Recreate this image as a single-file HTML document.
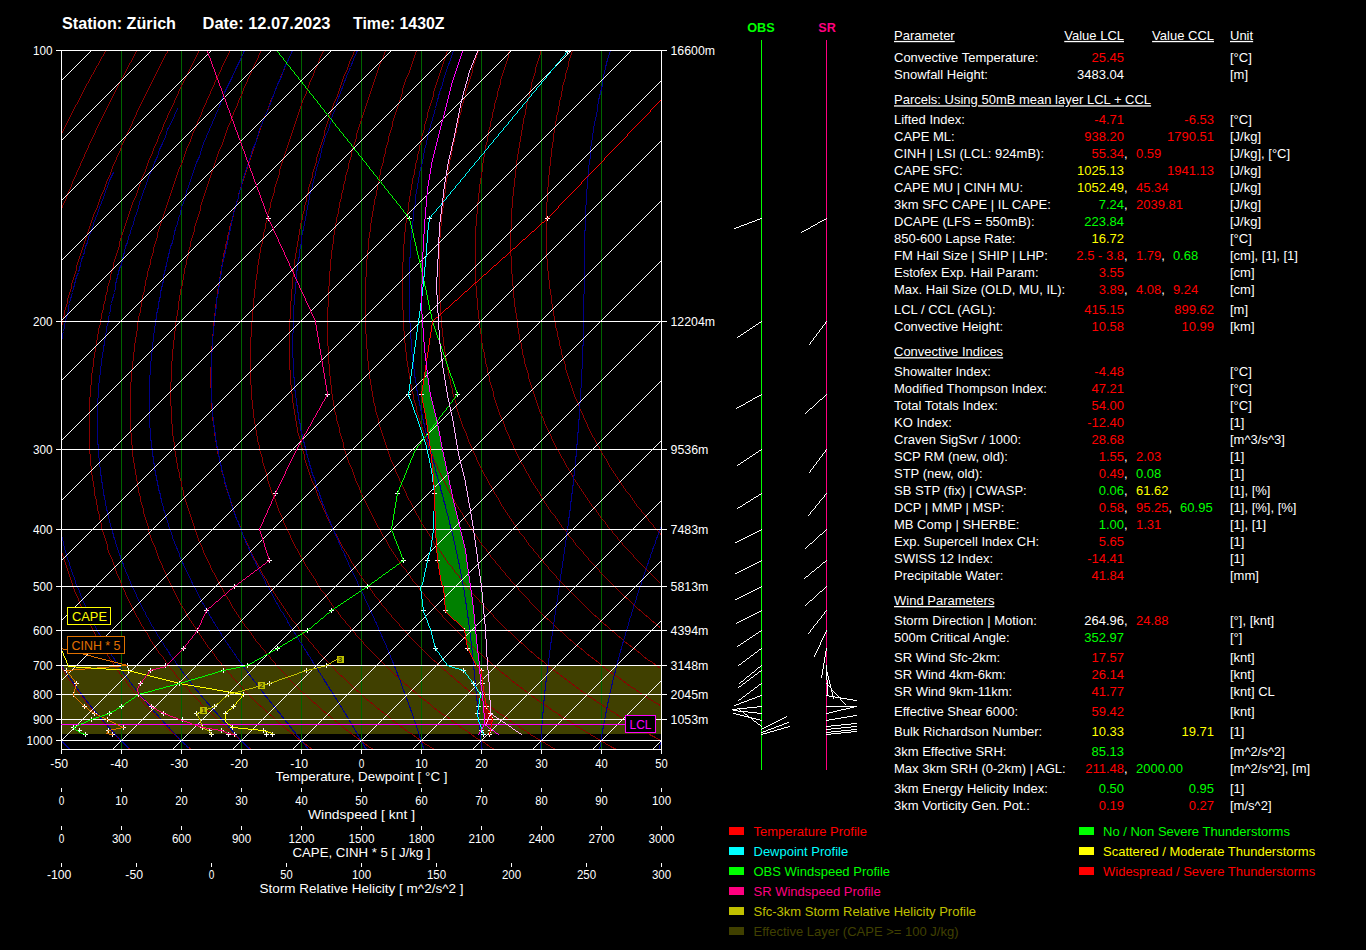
<!DOCTYPE html><html><head><meta charset="utf-8"><title>Sounding</title><style>html,body{margin:0;padding:0;background:#000;overflow:hidden}svg{display:block}text{font-family:"Liberation Sans",sans-serif}</style></head><body><svg width="1366" height="950" viewBox="0 0 1366 950" shape-rendering="crispEdges">
<rect width="1366" height="950" fill="#000"/>
<clipPath id="cf"><rect x="61" y="50" width="601" height="700"/></clipPath>
<g clip-path="url(#cf)">
<rect x="62" y="666" width="599" height="68" fill="#404000"/>
<polygon points="424.8,370.5 421.6,394.7 426.1,421.6 430.2,449.3 433.3,477.0 434.7,493.4 435.3,529.2 436.3,546.7 437.4,560.6 441.5,584.6 443.0,586.5 445.2,611.1 464.6,629.9 467.1,648.5 476.0,665.5 476.5,666.0 479.3,666.0 479.3,665.5 477.8,648.5 475.9,629.9 473.7,608.9 470.8,586.5 467.3,565.0 465.0,550.8 460.9,529.2 453.8,501.6 448.6,477.0 443.5,454.4 437.4,423.7 430.2,395.0 427.1,374.6 426.6,370.5" fill="#008000"/>
<polygon points="484.0,703.0 487.0,709.0 491.0,715.0 492.0,720.0 491.0,724.5 484.5,724.5 483.5,711.0" fill="#a00000"/>
<line x1="121.5" y1="50" x2="121.5" y2="749" stroke="#006400" stroke-width="1" />
<line x1="181.5" y1="50" x2="181.5" y2="749" stroke="#006400" stroke-width="1" />
<line x1="241.5" y1="50" x2="241.5" y2="749" stroke="#006400" stroke-width="1" />
<line x1="301.5" y1="50" x2="301.5" y2="749" stroke="#006400" stroke-width="1" />
<line x1="361.5" y1="50" x2="361.5" y2="749" stroke="#006400" stroke-width="1" />
<line x1="421.5" y1="50" x2="421.5" y2="749" stroke="#006400" stroke-width="1" />
<line x1="481.5" y1="50" x2="481.5" y2="749" stroke="#006400" stroke-width="1" />
<line x1="541.5" y1="50" x2="541.5" y2="749" stroke="#006400" stroke-width="1" />
<line x1="601.5" y1="50" x2="601.5" y2="749" stroke="#006400" stroke-width="1" />
<polyline points="105.5,50.5 104.5,53.5 102.5,56.5 100.5,59.5 99.5,62.5 97.5,65.5 95.5,68.5 94.5,71.5 92.5,74.5 90.5,77.5 89.5,80.5 87.5,83.5 85.5,86.5 84.5,89.5 82.5,92.5 81.5,95.5 79.5,98.5 78.5,101.5 76.5,104.5 74.5,107.5 73.5,110.5 71.5,113.5 70.5,116.5 68.5,119.5 67.5,122.5 65.5,125.5 64.5,128.5 62.5,131.5 61.5,134.5" fill="none" stroke="#8b0000" stroke-width="1" />
<polyline points="61.5,740.5 63.5,743.5 66.5,746.5 69.5,749.5" fill="none" stroke="#8b0000" stroke-width="1" />
<polyline points="136.5,50.5 135.5,53.5 133.5,56.5 132.5,59.5 130.5,62.5 128.5,65.5 127.5,68.5 125.5,71.5 124.5,74.5 122.5,77.5 120.5,80.5 119.5,83.5 117.5,86.5 116.5,89.5 114.5,92.5 113.5,95.5 111.5,98.5 110.5,101.5 108.5,104.5 107.5,107.5 105.5,110.5 104.5,113.5 102.5,116.5 101.5,119.5 99.5,122.5 98.5,125.5 96.5,128.5 95.5,131.5 94.5,134.5 92.5,137.5 91.5,140.5 89.5,143.5 88.5,146.5 87.5,149.5 85.5,152.5 84.5,155.5 83.5,158.5 81.5,161.5 80.5,164.5 79.5,167.5 77.5,170.5 76.5,173.5 75.5,176.5 73.5,179.5 72.5,182.5 71.5,185.5 70.5,188.5 68.5,191.5 67.5,194.5 66.5,197.5 65.5,200.5 63.5,203.5 62.5,206.5 61.5,209.5 61.5,210.5" fill="none" stroke="#8b0000" stroke-width="1" />
<polyline points="61.5,666.5 62.5,668.5 64.5,671.5 65.5,674.5 67.5,677.5 69.5,680.5 72.5,683.5 74.5,686.5 76.5,689.5 78.5,692.5 80.5,695.5 83.5,698.5 85.5,701.5 87.5,704.5 90.5,707.5 92.5,710.5 95.5,713.5 98.5,716.5 100.5,719.5 103.5,722.5 106.5,725.5 109.5,728.5 111.5,731.5 114.5,734.5 117.5,737.5 120.5,740.5 123.5,743.5 126.5,746.5 130.5,749.5" fill="none" stroke="#8b0000" stroke-width="1" />
<polyline points="168.5,50.5 166.5,53.5 164.5,56.5 163.5,59.5 161.5,62.5 160.5,65.5 158.5,68.5 157.5,71.5 155.5,74.5 154.5,77.5 152.5,80.5 151.5,83.5 149.5,86.5 148.5,89.5 146.5,92.5 145.5,95.5 143.5,98.5 142.5,101.5 140.5,104.5 139.5,107.5 137.5,110.5 136.5,113.5 135.5,116.5 133.5,119.5 132.5,122.5 131.5,125.5 129.5,128.5 128.5,131.5 126.5,134.5 125.5,137.5 124.5,140.5 122.5,143.5 121.5,146.5 120.5,149.5 119.5,152.5 117.5,155.5 116.5,158.5 115.5,161.5 113.5,164.5 112.5,167.5 111.5,170.5 110.5,173.5 109.5,176.5 107.5,179.5 106.5,182.5 105.5,185.5 104.5,188.5 103.5,191.5 101.5,194.5 100.5,197.5 99.5,200.5 98.5,203.5 97.5,206.5 96.5,209.5 94.5,212.5 93.5,215.5 92.5,218.5 91.5,221.5 90.5,224.5 89.5,227.5 88.5,230.5 87.5,233.5 86.5,236.5 85.5,239.5 84.5,242.5 83.5,245.5 82.5,248.5 81.5,251.5 80.5,254.5 79.5,257.5 78.5,260.5 77.5,263.5 76.5,266.5 76.5,269.5 75.5,272.5 74.5,275.5 73.5,278.5 72.5,281.5 71.5,284.5 71.5,287.5 70.5,290.5 69.5,293.5 68.5,296.5 67.5,299.5 67.5,302.5 66.5,305.5 65.5,308.5 64.5,311.5 64.5,314.5 63.5,317.5 62.5,320.5 62.5,323.5 61.5,326.5 61.5,327.5" fill="none" stroke="#8b0000" stroke-width="1" />
<polyline points="61.5,548.5 61.5,551.5 62.5,554.5 63.5,557.5 64.5,560.5 65.5,563.5 66.5,566.5 67.5,569.5 68.5,572.5 69.5,575.5 70.5,578.5 71.5,581.5 72.5,584.5 73.5,587.5 74.5,590.5 75.5,593.5 77.5,596.5 78.5,599.5 79.5,602.5 80.5,605.5 82.5,608.5 83.5,611.5 85.5,614.5 86.5,617.5 88.5,620.5 89.5,623.5 91.5,626.5 92.5,629.5 94.5,632.5 95.5,635.5 97.5,638.5 99.5,641.5 101.5,644.5 102.5,647.5 104.5,650.5 106.5,653.5 108.5,656.5 110.5,659.5 112.5,662.5 114.5,665.5 116.5,668.5 118.5,671.5 120.5,674.5 122.5,677.5 125.5,680.5 127.5,683.5 129.5,686.5 132.5,689.5 134.5,692.5 137.5,695.5 139.5,698.5 142.5,701.5 144.5,704.5 147.5,707.5 150.5,710.5 153.5,713.5 156.5,716.5 159.5,719.5 161.5,722.5 164.5,725.5 167.5,728.5 171.5,731.5 174.5,734.5 177.5,737.5 180.5,740.5 184.5,743.5 187.5,746.5 191.5,749.5" fill="none" stroke="#8b0000" stroke-width="1" />
<polyline points="199.5,50.5 197.5,53.5 196.5,56.5 194.5,59.5 193.5,62.5 191.5,65.5 190.5,68.5 188.5,71.5 187.5,74.5 185.5,77.5 184.5,80.5 182.5,83.5 181.5,86.5 179.5,89.5 178.5,92.5 177.5,95.5 175.5,98.5 174.5,101.5 173.5,104.5 171.5,107.5 170.5,110.5 168.5,113.5 167.5,116.5 166.5,119.5 164.5,122.5 163.5,125.5 162.5,128.5 161.5,131.5 159.5,134.5 158.5,137.5 157.5,140.5 156.5,143.5 154.5,146.5 153.5,149.5 152.5,152.5 151.5,155.5 149.5,158.5 148.5,161.5 147.5,164.5 146.5,167.5 145.5,170.5 144.5,173.5 142.5,176.5 141.5,179.5 140.5,182.5 139.5,185.5 138.5,188.5 137.5,191.5 136.5,194.5 135.5,197.5 133.5,200.5 132.5,203.5 131.5,206.5 130.5,209.5 129.5,212.5 128.5,215.5 127.5,218.5 126.5,221.5 125.5,224.5 124.5,227.5 123.5,230.5 122.5,233.5 121.5,236.5 120.5,239.5 119.5,242.5 119.5,245.5 118.5,248.5 117.5,251.5 116.5,254.5 115.5,257.5 114.5,260.5 113.5,263.5 113.5,266.5 112.5,269.5 111.5,272.5 110.5,275.5 110.5,278.5 109.5,281.5 108.5,284.5 107.5,287.5 107.5,290.5 106.5,293.5 105.5,296.5 105.5,299.5 104.5,302.5 103.5,305.5 103.5,308.5 102.5,311.5 101.5,314.5 101.5,317.5 100.5,320.5 100.5,323.5 99.5,326.5 98.5,329.5 98.5,332.5 97.5,335.5 97.5,338.5 96.5,341.5 96.5,344.5 95.5,347.5 95.5,350.5 94.5,353.5 94.5,356.5 93.5,359.5 93.5,362.5 93.5,365.5 92.5,368.5 92.5,371.5 91.5,374.5 91.5,377.5 91.5,380.5 91.5,383.5 90.5,386.5 90.5,389.5 90.5,392.5 90.5,395.5 89.5,398.5 89.5,401.5 89.5,404.5 89.5,407.5 89.5,410.5 89.5,413.5 89.5,416.5 89.5,419.5 89.5,422.5 89.5,425.5 89.5,428.5 89.5,431.5 89.5,434.5 89.5,437.5 89.5,440.5 89.5,443.5 89.5,446.5 89.5,449.5 89.5,452.5 90.5,455.5 90.5,458.5 90.5,461.5 90.5,464.5 91.5,467.5 91.5,470.5 91.5,473.5 92.5,476.5 92.5,479.5 93.5,482.5 93.5,485.5 94.5,488.5 94.5,491.5 94.5,494.5 95.5,497.5 96.5,500.5 96.5,503.5 97.5,506.5 97.5,509.5 98.5,512.5 99.5,515.5 99.5,518.5 100.5,521.5 101.5,524.5 101.5,527.5 102.5,530.5 103.5,533.5 104.5,536.5 105.5,539.5 106.5,542.5 107.5,545.5 107.5,548.5 108.5,551.5 109.5,554.5 111.5,557.5 112.5,560.5 113.5,563.5 114.5,566.5 115.5,569.5 116.5,572.5 117.5,575.5 119.5,578.5 120.5,581.5 121.5,584.5 122.5,587.5 124.5,590.5 125.5,593.5 126.5,596.5 128.5,599.5 129.5,602.5 131.5,605.5 132.5,608.5 134.5,611.5 135.5,614.5 137.5,617.5 139.5,620.5 140.5,623.5 142.5,626.5 144.5,629.5 146.5,632.5 148.5,635.5 149.5,638.5 151.5,641.5 153.5,644.5 155.5,647.5 157.5,650.5 159.5,653.5 162.5,656.5 164.5,659.5 166.5,662.5 168.5,665.5 170.5,668.5 173.5,671.5 175.5,674.5 177.5,677.5 180.5,680.5 182.5,683.5 185.5,686.5 188.5,689.5 190.5,692.5 193.5,695.5 196.5,698.5 199.5,701.5 201.5,704.5 204.5,707.5 207.5,710.5 211.5,713.5 214.5,716.5 217.5,719.5 220.5,722.5 223.5,725.5 226.5,728.5 230.5,731.5 233.5,734.5 237.5,737.5 240.5,740.5 244.5,743.5 247.5,746.5 251.5,749.5" fill="none" stroke="#8b0000" stroke-width="1" />
<polyline points="230.5,50.5 228.5,53.5 227.5,56.5 225.5,59.5 224.5,62.5 222.5,65.5 221.5,68.5 220.5,71.5 218.5,74.5 217.5,77.5 215.5,80.5 214.5,83.5 213.5,86.5 211.5,89.5 210.5,92.5 209.5,95.5 207.5,98.5 206.5,101.5 205.5,104.5 203.5,107.5 202.5,110.5 201.5,113.5 200.5,116.5 198.5,119.5 197.5,122.5 196.5,125.5 195.5,128.5 193.5,131.5 192.5,134.5 191.5,137.5 190.5,140.5 189.5,143.5 187.5,146.5 186.5,149.5 185.5,152.5 184.5,155.5 183.5,158.5 182.5,161.5 181.5,164.5 179.5,167.5 178.5,170.5 177.5,173.5 176.5,176.5 175.5,179.5 174.5,182.5 173.5,185.5 172.5,188.5 171.5,191.5 170.5,194.5 169.5,197.5 168.5,200.5 167.5,203.5 166.5,206.5 165.5,209.5 164.5,212.5 163.5,215.5 162.5,218.5 161.5,221.5 160.5,224.5 159.5,227.5 158.5,230.5 157.5,233.5 157.5,236.5 156.5,239.5 155.5,242.5 154.5,245.5 153.5,248.5 153.5,251.5 152.5,254.5 151.5,257.5 150.5,260.5 150.5,263.5 149.5,266.5 148.5,269.5 147.5,272.5 147.5,275.5 146.5,278.5 145.5,281.5 145.5,284.5 144.5,287.5 144.5,290.5 143.5,293.5 142.5,296.5 142.5,299.5 141.5,302.5 141.5,305.5 140.5,308.5 140.5,311.5 139.5,314.5 138.5,317.5 138.5,320.5 137.5,323.5 137.5,326.5 137.5,329.5 136.5,332.5 136.5,335.5 135.5,338.5 135.5,341.5 134.5,344.5 134.5,347.5 134.5,350.5 133.5,353.5 133.5,356.5 133.5,359.5 132.5,362.5 132.5,365.5 132.5,368.5 131.5,371.5 131.5,374.5 131.5,377.5 131.5,380.5 130.5,383.5 130.5,386.5 130.5,389.5 130.5,392.5 130.5,395.5 130.5,398.5 130.5,401.5 130.5,404.5 130.5,407.5 130.5,410.5 130.5,413.5 130.5,416.5 130.5,419.5 130.5,422.5 130.5,425.5 130.5,428.5 130.5,431.5 131.5,434.5 131.5,437.5 131.5,440.5 131.5,443.5 132.5,446.5 132.5,449.5 132.5,452.5 132.5,455.5 133.5,458.5 133.5,461.5 134.5,464.5 134.5,467.5 135.5,470.5 135.5,473.5 136.5,476.5 136.5,479.5 137.5,482.5 137.5,485.5 138.5,488.5 138.5,491.5 139.5,494.5 140.5,497.5 140.5,500.5 141.5,503.5 142.5,506.5 143.5,509.5 143.5,512.5 144.5,515.5 145.5,518.5 146.5,521.5 147.5,524.5 148.5,527.5 148.5,530.5 149.5,533.5 150.5,536.5 151.5,539.5 152.5,542.5 154.5,545.5 155.5,548.5 156.5,551.5 157.5,554.5 158.5,557.5 159.5,560.5 161.5,563.5 162.5,566.5 163.5,569.5 165.5,572.5 166.5,575.5 167.5,578.5 169.5,581.5 170.5,584.5 172.5,587.5 173.5,590.5 175.5,593.5 176.5,596.5 178.5,599.5 179.5,602.5 181.5,605.5 183.5,608.5 185.5,611.5 186.5,614.5 188.5,617.5 190.5,620.5 192.5,623.5 194.5,626.5 196.5,629.5 198.5,632.5 200.5,635.5 202.5,638.5 204.5,641.5 206.5,644.5 208.5,647.5 211.5,650.5 213.5,653.5 215.5,656.5 217.5,659.5 220.5,662.5 222.5,665.5 225.5,668.5 227.5,671.5 230.5,674.5 232.5,677.5 235.5,680.5 238.5,683.5 241.5,686.5 243.5,689.5 246.5,692.5 249.5,695.5 252.5,698.5 255.5,701.5 258.5,704.5 262.5,707.5 265.5,710.5 268.5,713.5 272.5,716.5 275.5,719.5 278.5,722.5 282.5,725.5 285.5,728.5 289.5,731.5 293.5,734.5 296.5,737.5 300.5,740.5 304.5,743.5 308.5,746.5 312.5,749.5" fill="none" stroke="#8b0000" stroke-width="1" />
<polyline points="261.5,50.5 259.5,53.5 258.5,56.5 257.5,59.5 255.5,62.5 254.5,65.5 252.5,68.5 251.5,71.5 250.5,74.5 248.5,77.5 247.5,80.5 246.5,83.5 244.5,86.5 243.5,89.5 242.5,92.5 241.5,95.5 239.5,98.5 238.5,101.5 237.5,104.5 236.5,107.5 234.5,110.5 233.5,113.5 232.5,116.5 231.5,119.5 230.5,122.5 228.5,125.5 227.5,128.5 226.5,131.5 225.5,134.5 224.5,137.5 223.5,140.5 222.5,143.5 221.5,146.5 219.5,149.5 218.5,152.5 217.5,155.5 216.5,158.5 215.5,161.5 214.5,164.5 213.5,167.5 212.5,170.5 211.5,173.5 210.5,176.5 209.5,179.5 208.5,182.5 207.5,185.5 206.5,188.5 205.5,191.5 204.5,194.5 203.5,197.5 202.5,200.5 201.5,203.5 200.5,206.5 200.5,209.5 199.5,212.5 198.5,215.5 197.5,218.5 196.5,221.5 195.5,224.5 194.5,227.5 194.5,230.5 193.5,233.5 192.5,236.5 191.5,239.5 190.5,242.5 190.5,245.5 189.5,248.5 188.5,251.5 188.5,254.5 187.5,257.5 186.5,260.5 186.5,263.5 185.5,266.5 184.5,269.5 184.5,272.5 183.5,275.5 183.5,278.5 182.5,281.5 182.5,284.5 181.5,287.5 180.5,290.5 180.5,293.5 179.5,296.5 179.5,299.5 178.5,302.5 178.5,305.5 178.5,308.5 177.5,311.5 177.5,314.5 176.5,317.5 176.5,320.5 175.5,323.5 175.5,326.5 175.5,329.5 174.5,332.5 174.5,335.5 174.5,338.5 173.5,341.5 173.5,344.5 173.5,347.5 172.5,350.5 172.5,353.5 172.5,356.5 172.5,359.5 171.5,362.5 171.5,365.5 171.5,368.5 171.5,371.5 171.5,374.5 171.5,377.5 171.5,380.5 170.5,383.5 170.5,386.5 170.5,389.5 170.5,392.5 170.5,395.5 170.5,398.5 170.5,401.5 170.5,404.5 171.5,407.5 171.5,410.5 171.5,413.5 171.5,416.5 171.5,419.5 171.5,422.5 172.5,425.5 172.5,428.5 172.5,431.5 172.5,434.5 173.5,437.5 173.5,440.5 174.5,443.5 174.5,446.5 174.5,449.5 175.5,452.5 175.5,455.5 176.5,458.5 176.5,461.5 177.5,464.5 177.5,467.5 178.5,470.5 179.5,473.5 179.5,476.5 180.5,479.5 181.5,482.5 181.5,485.5 182.5,488.5 183.5,491.5 183.5,494.5 184.5,497.5 185.5,500.5 186.5,503.5 187.5,506.5 188.5,509.5 189.5,512.5 190.5,515.5 191.5,518.5 192.5,521.5 193.5,524.5 194.5,527.5 195.5,530.5 196.5,533.5 197.5,536.5 198.5,539.5 199.5,542.5 201.5,545.5 202.5,548.5 203.5,551.5 204.5,554.5 206.5,557.5 207.5,560.5 209.5,563.5 210.5,566.5 211.5,569.5 213.5,572.5 215.5,575.5 216.5,578.5 218.5,581.5 219.5,584.5 221.5,587.5 223.5,590.5 224.5,593.5 226.5,596.5 228.5,599.5 230.5,602.5 231.5,605.5 233.5,608.5 235.5,611.5 237.5,614.5 239.5,617.5 241.5,620.5 243.5,623.5 245.5,626.5 248.5,629.5 250.5,632.5 252.5,635.5 254.5,638.5 256.5,641.5 259.5,644.5 261.5,647.5 264.5,650.5 266.5,653.5 269.5,656.5 271.5,659.5 274.5,662.5 276.5,665.5 279.5,668.5 282.5,671.5 285.5,674.5 287.5,677.5 290.5,680.5 293.5,683.5 296.5,686.5 299.5,689.5 302.5,692.5 306.5,695.5 309.5,698.5 312.5,701.5 316.5,704.5 319.5,707.5 322.5,710.5 326.5,713.5 330.5,716.5 333.5,719.5 337.5,722.5 341.5,725.5 344.5,728.5 348.5,731.5 352.5,734.5 356.5,737.5 360.5,740.5 364.5,743.5 368.5,746.5 373.5,749.5" fill="none" stroke="#8b0000" stroke-width="1" />
<polyline points="292.5,50.5 291.5,53.5 289.5,56.5 288.5,59.5 287.5,62.5 285.5,65.5 284.5,68.5 283.5,71.5 281.5,74.5 280.5,77.5 279.5,80.5 278.5,83.5 276.5,86.5 275.5,89.5 274.5,92.5 273.5,95.5 271.5,98.5 270.5,101.5 269.5,104.5 268.5,107.5 267.5,110.5 266.5,113.5 264.5,116.5 263.5,119.5 262.5,122.5 261.5,125.5 260.5,128.5 259.5,131.5 258.5,134.5 257.5,137.5 256.5,140.5 255.5,143.5 254.5,146.5 253.5,149.5 252.5,152.5 251.5,155.5 250.5,158.5 249.5,161.5 248.5,164.5 247.5,167.5 246.5,170.5 245.5,173.5 244.5,176.5 243.5,179.5 242.5,182.5 241.5,185.5 240.5,188.5 239.5,191.5 238.5,194.5 238.5,197.5 237.5,200.5 236.5,203.5 235.5,206.5 234.5,209.5 233.5,212.5 233.5,215.5 232.5,218.5 231.5,221.5 230.5,224.5 229.5,227.5 229.5,230.5 228.5,233.5 227.5,236.5 227.5,239.5 226.5,242.5 225.5,245.5 225.5,248.5 224.5,251.5 223.5,254.5 223.5,257.5 222.5,260.5 222.5,263.5 221.5,266.5 221.5,269.5 220.5,272.5 220.5,275.5 219.5,278.5 219.5,281.5 218.5,284.5 218.5,287.5 217.5,290.5 217.5,293.5 217.5,296.5 216.5,299.5 216.5,302.5 215.5,305.5 215.5,308.5 215.5,311.5 214.5,314.5 214.5,317.5 214.5,320.5 213.5,323.5 213.5,326.5 213.5,329.5 213.5,332.5 212.5,335.5 212.5,338.5 212.5,341.5 212.5,344.5 211.5,347.5 211.5,350.5 211.5,353.5 211.5,356.5 211.5,359.5 211.5,362.5 211.5,365.5 210.5,368.5 210.5,371.5 210.5,374.5 210.5,377.5 210.5,380.5 210.5,383.5 210.5,386.5 211.5,389.5 211.5,392.5 211.5,395.5 211.5,398.5 211.5,401.5 211.5,404.5 211.5,407.5 212.5,410.5 212.5,413.5 212.5,416.5 212.5,419.5 213.5,422.5 213.5,425.5 214.5,428.5 214.5,431.5 214.5,434.5 215.5,437.5 215.5,440.5 216.5,443.5 216.5,446.5 217.5,449.5 217.5,452.5 218.5,455.5 219.5,458.5 219.5,461.5 220.5,464.5 221.5,467.5 221.5,470.5 222.5,473.5 223.5,476.5 224.5,479.5 224.5,482.5 225.5,485.5 226.5,488.5 227.5,491.5 228.5,494.5 229.5,497.5 230.5,500.5 231.5,503.5 232.5,506.5 233.5,509.5 234.5,512.5 235.5,515.5 236.5,518.5 237.5,521.5 239.5,524.5 240.5,527.5 241.5,530.5 242.5,533.5 243.5,536.5 245.5,539.5 246.5,542.5 248.5,545.5 249.5,548.5 250.5,551.5 252.5,554.5 253.5,557.5 255.5,560.5 257.5,563.5 258.5,566.5 260.5,569.5 261.5,572.5 263.5,575.5 265.5,578.5 267.5,581.5 268.5,584.5 270.5,587.5 272.5,590.5 274.5,593.5 276.5,596.5 278.5,599.5 280.5,602.5 282.5,605.5 284.5,608.5 286.5,611.5 288.5,614.5 290.5,617.5 292.5,620.5 295.5,623.5 297.5,626.5 299.5,629.5 302.5,632.5 304.5,635.5 307.5,638.5 309.5,641.5 312.5,644.5 314.5,647.5 317.5,650.5 319.5,653.5 322.5,656.5 325.5,659.5 328.5,662.5 331.5,665.5 334.5,668.5 336.5,671.5 339.5,674.5 343.5,677.5 346.5,680.5 349.5,683.5 352.5,686.5 355.5,689.5 359.5,692.5 362.5,695.5 365.5,698.5 369.5,701.5 373.5,704.5 376.5,707.5 380.5,710.5 384.5,713.5 388.5,716.5 391.5,719.5 395.5,722.5 399.5,725.5 403.5,728.5 407.5,731.5 412.5,734.5 416.5,737.5 420.5,740.5 424.5,743.5 429.5,746.5 434.5,749.5" fill="none" stroke="#8b0000" stroke-width="1" />
<polyline points="323.5,50.5 322.5,53.5 320.5,56.5 319.5,59.5 318.5,62.5 317.5,65.5 315.5,68.5 314.5,71.5 313.5,74.5 312.5,77.5 310.5,80.5 309.5,83.5 308.5,86.5 307.5,89.5 306.5,92.5 305.5,95.5 303.5,98.5 302.5,101.5 301.5,104.5 300.5,107.5 299.5,110.5 298.5,113.5 297.5,116.5 296.5,119.5 295.5,122.5 294.5,125.5 293.5,128.5 292.5,131.5 291.5,134.5 290.5,137.5 289.5,140.5 288.5,143.5 287.5,146.5 286.5,149.5 285.5,152.5 284.5,155.5 283.5,158.5 282.5,161.5 281.5,164.5 280.5,167.5 279.5,170.5 279.5,173.5 278.5,176.5 277.5,179.5 276.5,182.5 275.5,185.5 274.5,188.5 274.5,191.5 273.5,194.5 272.5,197.5 271.5,200.5 270.5,203.5 270.5,206.5 269.5,209.5 268.5,212.5 267.5,215.5 267.5,218.5 266.5,221.5 265.5,224.5 265.5,227.5 264.5,230.5 263.5,233.5 263.5,236.5 262.5,239.5 262.5,242.5 261.5,245.5 260.5,248.5 260.5,251.5 259.5,254.5 259.5,257.5 258.5,260.5 258.5,263.5 257.5,266.5 257.5,269.5 257.5,272.5 256.5,275.5 256.5,278.5 255.5,281.5 255.5,284.5 255.5,287.5 254.5,290.5 254.5,293.5 254.5,296.5 253.5,299.5 253.5,302.5 253.5,305.5 253.5,308.5 252.5,311.5 252.5,314.5 252.5,317.5 252.5,320.5 251.5,323.5 251.5,326.5 251.5,329.5 251.5,332.5 251.5,335.5 250.5,338.5 250.5,341.5 250.5,344.5 250.5,347.5 250.5,350.5 250.5,353.5 250.5,356.5 250.5,359.5 250.5,362.5 250.5,365.5 250.5,368.5 250.5,371.5 250.5,374.5 250.5,377.5 250.5,380.5 250.5,383.5 251.5,386.5 251.5,389.5 251.5,392.5 251.5,395.5 251.5,398.5 252.5,401.5 252.5,404.5 252.5,407.5 253.5,410.5 253.5,413.5 253.5,416.5 254.5,419.5 254.5,422.5 255.5,425.5 255.5,428.5 256.5,431.5 256.5,434.5 257.5,437.5 257.5,440.5 258.5,443.5 259.5,446.5 259.5,449.5 260.5,452.5 261.5,455.5 262.5,458.5 262.5,461.5 263.5,464.5 264.5,467.5 265.5,470.5 266.5,473.5 267.5,476.5 267.5,479.5 268.5,482.5 269.5,485.5 270.5,488.5 271.5,491.5 272.5,494.5 274.5,497.5 275.5,500.5 276.5,503.5 277.5,506.5 278.5,509.5 279.5,512.5 281.5,515.5 282.5,518.5 283.5,521.5 284.5,524.5 286.5,527.5 287.5,530.5 289.5,533.5 290.5,536.5 291.5,539.5 293.5,542.5 294.5,545.5 296.5,548.5 298.5,551.5 299.5,554.5 301.5,557.5 303.5,560.5 304.5,563.5 306.5,566.5 308.5,569.5 310.5,572.5 312.5,575.5 314.5,578.5 316.5,581.5 317.5,584.5 319.5,587.5 321.5,590.5 324.5,593.5 326.5,596.5 328.5,599.5 330.5,602.5 332.5,605.5 334.5,608.5 337.5,611.5 339.5,614.5 341.5,617.5 344.5,620.5 346.5,623.5 349.5,626.5 351.5,629.5 354.5,632.5 356.5,635.5 359.5,638.5 362.5,641.5 364.5,644.5 367.5,647.5 370.5,650.5 373.5,653.5 376.5,656.5 379.5,659.5 382.5,662.5 385.5,665.5 388.5,668.5 391.5,671.5 394.5,674.5 398.5,677.5 401.5,680.5 404.5,683.5 408.5,686.5 411.5,689.5 415.5,692.5 418.5,695.5 422.5,698.5 426.5,701.5 430.5,704.5 433.5,707.5 437.5,710.5 441.5,713.5 446.5,716.5 450.5,719.5 454.5,722.5 458.5,725.5 462.5,728.5 467.5,731.5 471.5,734.5 475.5,737.5 480.5,740.5 485.5,743.5 489.5,746.5 494.5,749.5" fill="none" stroke="#8b0000" stroke-width="1" />
<polyline points="354.5,50.5 353.5,53.5 352.5,56.5 350.5,59.5 349.5,62.5 348.5,65.5 347.5,68.5 346.5,71.5 344.5,74.5 343.5,77.5 342.5,80.5 341.5,83.5 340.5,86.5 339.5,89.5 338.5,92.5 337.5,95.5 336.5,98.5 334.5,101.5 333.5,104.5 332.5,107.5 331.5,110.5 330.5,113.5 329.5,116.5 328.5,119.5 327.5,122.5 326.5,125.5 325.5,128.5 324.5,131.5 324.5,134.5 323.5,137.5 322.5,140.5 321.5,143.5 320.5,146.5 319.5,149.5 318.5,152.5 317.5,155.5 316.5,158.5 316.5,161.5 315.5,164.5 314.5,167.5 313.5,170.5 312.5,173.5 312.5,176.5 311.5,179.5 310.5,182.5 309.5,185.5 308.5,188.5 308.5,191.5 307.5,194.5 306.5,197.5 306.5,200.5 305.5,203.5 304.5,206.5 304.5,209.5 303.5,212.5 302.5,215.5 302.5,218.5 301.5,221.5 300.5,224.5 300.5,227.5 299.5,230.5 299.5,233.5 298.5,236.5 298.5,239.5 297.5,242.5 297.5,245.5 296.5,248.5 296.5,251.5 295.5,254.5 295.5,257.5 294.5,260.5 294.5,263.5 294.5,266.5 293.5,269.5 293.5,272.5 293.5,275.5 292.5,278.5 292.5,281.5 292.5,284.5 292.5,287.5 291.5,290.5 291.5,293.5 291.5,296.5 291.5,299.5 290.5,302.5 290.5,305.5 290.5,308.5 290.5,311.5 290.5,314.5 290.5,317.5 289.5,320.5 289.5,323.5 289.5,326.5 289.5,329.5 289.5,332.5 289.5,335.5 289.5,338.5 289.5,341.5 289.5,344.5 289.5,347.5 289.5,350.5 289.5,353.5 289.5,356.5 289.5,359.5 289.5,362.5 289.5,365.5 289.5,368.5 290.5,371.5 290.5,374.5 290.5,377.5 290.5,380.5 290.5,383.5 291.5,386.5 291.5,389.5 291.5,392.5 292.5,395.5 292.5,398.5 292.5,401.5 293.5,404.5 293.5,407.5 294.5,410.5 294.5,413.5 295.5,416.5 295.5,419.5 296.5,422.5 296.5,425.5 297.5,428.5 297.5,431.5 298.5,434.5 299.5,437.5 300.5,440.5 300.5,443.5 301.5,446.5 302.5,449.5 303.5,452.5 304.5,455.5 304.5,458.5 305.5,461.5 306.5,464.5 307.5,467.5 308.5,470.5 309.5,473.5 310.5,476.5 311.5,479.5 312.5,482.5 314.5,485.5 315.5,488.5 316.5,491.5 317.5,494.5 318.5,497.5 319.5,500.5 321.5,503.5 322.5,506.5 323.5,509.5 325.5,512.5 326.5,515.5 327.5,518.5 329.5,521.5 330.5,524.5 332.5,527.5 333.5,530.5 335.5,533.5 337.5,536.5 338.5,539.5 340.5,542.5 341.5,545.5 343.5,548.5 345.5,551.5 347.5,554.5 349.5,557.5 350.5,560.5 352.5,563.5 354.5,566.5 356.5,569.5 358.5,572.5 360.5,575.5 362.5,578.5 364.5,581.5 367.5,584.5 369.5,587.5 371.5,590.5 373.5,593.5 375.5,596.5 378.5,599.5 380.5,602.5 382.5,605.5 385.5,608.5 387.5,611.5 390.5,614.5 392.5,617.5 395.5,620.5 398.5,623.5 400.5,626.5 403.5,629.5 406.5,632.5 408.5,635.5 411.5,638.5 414.5,641.5 417.5,644.5 420.5,647.5 423.5,650.5 426.5,653.5 429.5,656.5 432.5,659.5 436.5,662.5 439.5,665.5 442.5,668.5 446.5,671.5 449.5,674.5 453.5,677.5 456.5,680.5 460.5,683.5 463.5,686.5 467.5,689.5 471.5,692.5 475.5,695.5 479.5,698.5 483.5,701.5 487.5,704.5 491.5,707.5 495.5,710.5 499.5,713.5 504.5,716.5 508.5,719.5 512.5,722.5 517.5,725.5 521.5,728.5 526.5,731.5 530.5,734.5 535.5,737.5 540.5,740.5 545.5,743.5 550.5,746.5 555.5,749.5" fill="none" stroke="#8b0000" stroke-width="1" />
<polyline points="385.5,50.5 384.5,53.5 383.5,56.5 382.5,59.5 380.5,62.5 379.5,65.5 378.5,68.5 377.5,71.5 376.5,74.5 375.5,77.5 374.5,80.5 373.5,83.5 372.5,86.5 371.5,89.5 370.5,92.5 369.5,95.5 368.5,98.5 367.5,101.5 366.5,104.5 365.5,107.5 364.5,110.5 363.5,113.5 362.5,116.5 361.5,119.5 360.5,122.5 359.5,125.5 358.5,128.5 357.5,131.5 356.5,134.5 356.5,137.5 355.5,140.5 354.5,143.5 353.5,146.5 352.5,149.5 351.5,152.5 351.5,155.5 350.5,158.5 349.5,161.5 348.5,164.5 348.5,167.5 347.5,170.5 346.5,173.5 345.5,176.5 345.5,179.5 344.5,182.5 343.5,185.5 343.5,188.5 342.5,191.5 341.5,194.5 341.5,197.5 340.5,200.5 339.5,203.5 339.5,206.5 338.5,209.5 338.5,212.5 337.5,215.5 336.5,218.5 336.5,221.5 335.5,224.5 335.5,227.5 334.5,230.5 334.5,233.5 333.5,236.5 333.5,239.5 333.5,242.5 332.5,245.5 332.5,248.5 331.5,251.5 331.5,254.5 331.5,257.5 330.5,260.5 330.5,263.5 330.5,266.5 330.5,269.5 329.5,272.5 329.5,275.5 329.5,278.5 329.5,281.5 329.5,284.5 328.5,287.5 328.5,290.5 328.5,293.5 328.5,296.5 328.5,299.5 328.5,302.5 328.5,305.5 327.5,308.5 327.5,311.5 327.5,314.5 327.5,317.5 327.5,320.5 327.5,323.5 327.5,326.5 327.5,329.5 327.5,332.5 327.5,335.5 327.5,338.5 327.5,341.5 327.5,344.5 328.5,347.5 328.5,350.5 328.5,353.5 328.5,356.5 328.5,359.5 328.5,362.5 329.5,365.5 329.5,368.5 329.5,371.5 329.5,374.5 330.5,377.5 330.5,380.5 330.5,383.5 331.5,386.5 331.5,389.5 331.5,392.5 332.5,395.5 332.5,398.5 333.5,401.5 333.5,404.5 334.5,407.5 334.5,410.5 335.5,413.5 336.5,416.5 336.5,419.5 337.5,422.5 338.5,425.5 339.5,428.5 339.5,431.5 340.5,434.5 341.5,437.5 342.5,440.5 343.5,443.5 343.5,446.5 344.5,449.5 345.5,452.5 346.5,455.5 347.5,458.5 348.5,461.5 349.5,464.5 351.5,467.5 352.5,470.5 353.5,473.5 354.5,476.5 355.5,479.5 356.5,482.5 358.5,485.5 359.5,488.5 360.5,491.5 361.5,494.5 363.5,497.5 364.5,500.5 366.5,503.5 367.5,506.5 369.5,509.5 370.5,512.5 372.5,515.5 373.5,518.5 375.5,521.5 376.5,524.5 378.5,527.5 380.5,530.5 381.5,533.5 383.5,536.5 385.5,539.5 387.5,542.5 388.5,545.5 390.5,548.5 392.5,551.5 394.5,554.5 396.5,557.5 398.5,560.5 400.5,563.5 402.5,566.5 405.5,569.5 407.5,572.5 409.5,575.5 411.5,578.5 413.5,581.5 416.5,584.5 418.5,587.5 420.5,590.5 423.5,593.5 425.5,596.5 428.5,599.5 430.5,602.5 433.5,605.5 435.5,608.5 438.5,611.5 441.5,614.5 443.5,617.5 446.5,620.5 449.5,623.5 452.5,626.5 455.5,629.5 458.5,632.5 461.5,635.5 464.5,638.5 467.5,641.5 470.5,644.5 473.5,647.5 476.5,650.5 480.5,653.5 483.5,656.5 486.5,659.5 490.5,662.5 493.5,665.5 497.5,668.5 500.5,671.5 504.5,674.5 508.5,677.5 511.5,680.5 515.5,683.5 519.5,686.5 523.5,689.5 527.5,692.5 531.5,695.5 535.5,698.5 539.5,701.5 544.5,704.5 548.5,707.5 552.5,710.5 557.5,713.5 561.5,716.5 566.5,719.5 571.5,722.5 575.5,725.5 580.5,728.5 585.5,731.5 590.5,734.5 595.5,737.5 600.5,740.5 605.5,743.5 610.5,746.5 616.5,749.5" fill="none" stroke="#8b0000" stroke-width="1" />
<polyline points="416.5,50.5 415.5,53.5 414.5,56.5 413.5,59.5 412.5,62.5 411.5,65.5 410.5,68.5 409.5,71.5 408.5,74.5 406.5,77.5 405.5,80.5 404.5,83.5 403.5,86.5 402.5,89.5 402.5,92.5 401.5,95.5 400.5,98.5 399.5,101.5 398.5,104.5 397.5,107.5 396.5,110.5 395.5,113.5 394.5,116.5 393.5,119.5 392.5,122.5 392.5,125.5 391.5,128.5 390.5,131.5 389.5,134.5 388.5,137.5 388.5,140.5 387.5,143.5 386.5,146.5 385.5,149.5 385.5,152.5 384.5,155.5 383.5,158.5 383.5,161.5 382.5,164.5 381.5,167.5 380.5,170.5 380.5,173.5 379.5,176.5 379.5,179.5 378.5,182.5 377.5,185.5 377.5,188.5 376.5,191.5 376.5,194.5 375.5,197.5 374.5,200.5 374.5,203.5 373.5,206.5 373.5,209.5 372.5,212.5 372.5,215.5 371.5,218.5 371.5,221.5 370.5,224.5 370.5,227.5 370.5,230.5 369.5,233.5 369.5,236.5 368.5,239.5 368.5,242.5 368.5,245.5 368.5,248.5 367.5,251.5 367.5,254.5 367.5,257.5 366.5,260.5 366.5,263.5 366.5,266.5 366.5,269.5 366.5,272.5 366.5,275.5 365.5,278.5 365.5,281.5 365.5,284.5 365.5,287.5 365.5,290.5 365.5,293.5 365.5,296.5 365.5,299.5 365.5,302.5 365.5,305.5 365.5,308.5 365.5,311.5 365.5,314.5 365.5,317.5 365.5,320.5 365.5,323.5 365.5,326.5 365.5,329.5 365.5,332.5 366.5,335.5 366.5,338.5 366.5,341.5 366.5,344.5 366.5,347.5 367.5,350.5 367.5,353.5 367.5,356.5 367.5,359.5 368.5,362.5 368.5,365.5 368.5,368.5 369.5,371.5 369.5,374.5 369.5,377.5 370.5,380.5 370.5,383.5 371.5,386.5 371.5,389.5 372.5,392.5 372.5,395.5 373.5,398.5 373.5,401.5 374.5,404.5 375.5,407.5 375.5,410.5 376.5,413.5 377.5,416.5 378.5,419.5 378.5,422.5 379.5,425.5 380.5,428.5 381.5,431.5 382.5,434.5 383.5,437.5 384.5,440.5 385.5,443.5 386.5,446.5 387.5,449.5 388.5,452.5 389.5,455.5 390.5,458.5 391.5,461.5 393.5,464.5 394.5,467.5 395.5,470.5 396.5,473.5 398.5,476.5 399.5,479.5 400.5,482.5 402.5,485.5 403.5,488.5 405.5,491.5 406.5,494.5 407.5,497.5 409.5,500.5 411.5,503.5 412.5,506.5 414.5,509.5 415.5,512.5 417.5,515.5 419.5,518.5 420.5,521.5 422.5,524.5 424.5,527.5 426.5,530.5 428.5,533.5 430.5,536.5 432.5,539.5 433.5,542.5 435.5,545.5 438.5,548.5 440.5,551.5 442.5,554.5 444.5,557.5 446.5,560.5 448.5,563.5 451.5,566.5 453.5,569.5 455.5,572.5 458.5,575.5 460.5,578.5 462.5,581.5 465.5,584.5 467.5,587.5 470.5,590.5 472.5,593.5 475.5,596.5 478.5,599.5 480.5,602.5 483.5,605.5 486.5,608.5 489.5,611.5 492.5,614.5 494.5,617.5 497.5,620.5 500.5,623.5 503.5,626.5 506.5,629.5 510.5,632.5 513.5,635.5 516.5,638.5 519.5,641.5 523.5,644.5 526.5,647.5 529.5,650.5 533.5,653.5 536.5,656.5 540.5,659.5 544.5,662.5 547.5,665.5 551.5,668.5 555.5,671.5 559.5,674.5 563.5,677.5 567.5,680.5 571.5,683.5 575.5,686.5 579.5,689.5 583.5,692.5 587.5,695.5 592.5,698.5 596.5,701.5 601.5,704.5 605.5,707.5 610.5,710.5 615.5,713.5 619.5,716.5 624.5,719.5 629.5,722.5 634.5,725.5 639.5,728.5 644.5,731.5 649.5,734.5 655.5,737.5 660.5,740.5" fill="none" stroke="#8b0000" stroke-width="1" />
<polyline points="447.5,50.5 446.5,53.5 445.5,56.5 444.5,59.5 443.5,62.5 442.5,65.5 441.5,68.5 440.5,71.5 439.5,74.5 438.5,77.5 437.5,80.5 436.5,83.5 435.5,86.5 434.5,89.5 433.5,92.5 433.5,95.5 432.5,98.5 431.5,101.5 430.5,104.5 429.5,107.5 428.5,110.5 427.5,113.5 427.5,116.5 426.5,119.5 425.5,122.5 424.5,125.5 424.5,128.5 423.5,131.5 422.5,134.5 421.5,137.5 421.5,140.5 420.5,143.5 419.5,146.5 419.5,149.5 418.5,152.5 417.5,155.5 417.5,158.5 416.5,161.5 415.5,164.5 415.5,167.5 414.5,170.5 414.5,173.5 413.5,176.5 412.5,179.5 412.5,182.5 411.5,185.5 411.5,188.5 410.5,191.5 410.5,194.5 409.5,197.5 409.5,200.5 408.5,203.5 408.5,206.5 408.5,209.5 407.5,212.5 407.5,215.5 406.5,218.5 406.5,221.5 405.5,224.5 405.5,227.5 405.5,230.5 404.5,233.5 404.5,236.5 404.5,239.5 404.5,242.5 403.5,245.5 403.5,248.5 403.5,251.5 403.5,254.5 403.5,257.5 403.5,260.5 402.5,263.5 402.5,266.5 402.5,269.5 402.5,272.5 402.5,275.5 402.5,278.5 402.5,281.5 402.5,284.5 402.5,287.5 402.5,290.5 402.5,293.5 402.5,296.5 402.5,299.5 402.5,302.5 402.5,305.5 402.5,308.5 403.5,311.5 403.5,314.5 403.5,317.5 403.5,320.5 403.5,323.5 403.5,326.5 403.5,329.5 404.5,332.5 404.5,335.5 404.5,338.5 404.5,341.5 405.5,344.5 405.5,347.5 405.5,350.5 406.5,353.5 406.5,356.5 406.5,359.5 407.5,362.5 407.5,365.5 408.5,368.5 408.5,371.5 409.5,374.5 409.5,377.5 410.5,380.5 410.5,383.5 411.5,386.5 411.5,389.5 412.5,392.5 413.5,395.5 413.5,398.5 414.5,401.5 415.5,404.5 416.5,407.5 416.5,410.5 417.5,413.5 418.5,416.5 419.5,419.5 420.5,422.5 421.5,425.5 422.5,428.5 423.5,431.5 424.5,434.5 425.5,437.5 426.5,440.5 427.5,443.5 428.5,446.5 429.5,449.5 431.5,452.5 432.5,455.5 433.5,458.5 434.5,461.5 436.5,464.5 437.5,467.5 438.5,470.5 440.5,473.5 441.5,476.5 443.5,479.5 444.5,482.5 446.5,485.5 447.5,488.5 449.5,491.5 450.5,494.5 452.5,497.5 454.5,500.5 455.5,503.5 457.5,506.5 459.5,509.5 461.5,512.5 463.5,515.5 464.5,518.5 466.5,521.5 468.5,524.5 470.5,527.5 472.5,530.5 474.5,533.5 476.5,536.5 478.5,539.5 480.5,542.5 482.5,545.5 485.5,548.5 487.5,551.5 489.5,554.5 491.5,557.5 494.5,560.5 496.5,563.5 499.5,566.5 501.5,569.5 504.5,572.5 506.5,575.5 509.5,578.5 511.5,581.5 514.5,584.5 517.5,587.5 519.5,590.5 522.5,593.5 525.5,596.5 528.5,599.5 530.5,602.5 533.5,605.5 536.5,608.5 539.5,611.5 542.5,614.5 545.5,617.5 549.5,620.5 552.5,623.5 555.5,626.5 558.5,629.5 562.5,632.5 565.5,635.5 568.5,638.5 572.5,641.5 575.5,644.5 579.5,647.5 583.5,650.5 586.5,653.5 590.5,656.5 594.5,659.5 598.5,662.5 601.5,665.5 605.5,668.5 609.5,671.5 613.5,674.5 618.5,677.5 622.5,680.5 626.5,683.5 630.5,686.5 635.5,689.5 639.5,692.5 644.5,695.5 648.5,698.5 653.5,701.5 658.5,704.5 660.5,705.5" fill="none" stroke="#8b0000" stroke-width="1" />
<polyline points="478.5,50.5 477.5,53.5 476.5,56.5 475.5,59.5 474.5,62.5 473.5,65.5 472.5,68.5 472.5,71.5 471.5,74.5 470.5,77.5 469.5,80.5 468.5,83.5 467.5,86.5 466.5,89.5 465.5,92.5 465.5,95.5 464.5,98.5 463.5,101.5 462.5,104.5 461.5,107.5 461.5,110.5 460.5,113.5 459.5,116.5 458.5,119.5 458.5,122.5 457.5,125.5 456.5,128.5 456.5,131.5 455.5,134.5 454.5,137.5 454.5,140.5 453.5,143.5 452.5,146.5 452.5,149.5 451.5,152.5 451.5,155.5 450.5,158.5 449.5,161.5 449.5,164.5 448.5,167.5 448.5,170.5 447.5,173.5 447.5,176.5 446.5,179.5 446.5,182.5 445.5,185.5 445.5,188.5 445.5,191.5 444.5,194.5 444.5,197.5 443.5,200.5 443.5,203.5 443.5,206.5 442.5,209.5 442.5,212.5 441.5,215.5 441.5,218.5 441.5,221.5 441.5,224.5 440.5,227.5 440.5,230.5 440.5,233.5 440.5,236.5 439.5,239.5 439.5,242.5 439.5,245.5 439.5,248.5 439.5,251.5 439.5,254.5 439.5,257.5 439.5,260.5 439.5,263.5 439.5,266.5 439.5,269.5 439.5,272.5 439.5,275.5 439.5,278.5 439.5,281.5 439.5,284.5 439.5,287.5 439.5,290.5 439.5,293.5 439.5,296.5 439.5,299.5 440.5,302.5 440.5,305.5 440.5,308.5 440.5,311.5 440.5,314.5 441.5,317.5 441.5,320.5 441.5,323.5 441.5,326.5 442.5,329.5 442.5,332.5 442.5,335.5 443.5,338.5 443.5,341.5 443.5,344.5 444.5,347.5 444.5,350.5 445.5,353.5 445.5,356.5 446.5,359.5 446.5,362.5 447.5,365.5 447.5,368.5 448.5,371.5 448.5,374.5 449.5,377.5 450.5,380.5 450.5,383.5 451.5,386.5 452.5,389.5 452.5,392.5 453.5,395.5 454.5,398.5 455.5,401.5 456.5,404.5 456.5,407.5 457.5,410.5 458.5,413.5 459.5,416.5 460.5,419.5 461.5,422.5 462.5,425.5 463.5,428.5 465.5,431.5 466.5,434.5 467.5,437.5 468.5,440.5 469.5,443.5 471.5,446.5 472.5,449.5 473.5,452.5 475.5,455.5 476.5,458.5 477.5,461.5 479.5,464.5 480.5,467.5 482.5,470.5 483.5,473.5 485.5,476.5 487.5,479.5 488.5,482.5 490.5,485.5 492.5,488.5 493.5,491.5 495.5,494.5 497.5,497.5 499.5,500.5 500.5,503.5 502.5,506.5 504.5,509.5 506.5,512.5 508.5,515.5 510.5,518.5 512.5,521.5 514.5,524.5 516.5,527.5 518.5,530.5 520.5,533.5 523.5,536.5 525.5,539.5 527.5,542.5 529.5,545.5 532.5,548.5 534.5,551.5 537.5,554.5 539.5,557.5 542.5,560.5 544.5,563.5 547.5,566.5 549.5,569.5 552.5,572.5 555.5,575.5 557.5,578.5 560.5,581.5 563.5,584.5 566.5,587.5 569.5,590.5 572.5,593.5 575.5,596.5 578.5,599.5 581.5,602.5 584.5,605.5 587.5,608.5 590.5,611.5 593.5,614.5 597.5,617.5 600.5,620.5 603.5,623.5 607.5,626.5 610.5,629.5 614.5,632.5 617.5,635.5 621.5,638.5 624.5,641.5 628.5,644.5 632.5,647.5 636.5,650.5 640.5,653.5 643.5,656.5 647.5,659.5 652.5,662.5 656.5,665.5 660.5,668.5" fill="none" stroke="#8b0000" stroke-width="1" />
<polyline points="509.5,50.5 508.5,53.5 508.5,56.5 507.5,59.5 506.5,62.5 505.5,65.5 504.5,68.5 503.5,71.5 502.5,74.5 501.5,77.5 500.5,80.5 500.5,83.5 499.5,86.5 498.5,89.5 497.5,92.5 497.5,95.5 496.5,98.5 495.5,101.5 494.5,104.5 494.5,107.5 493.5,110.5 492.5,113.5 492.5,116.5 491.5,119.5 490.5,122.5 490.5,125.5 489.5,128.5 488.5,131.5 488.5,134.5 487.5,137.5 487.5,140.5 486.5,143.5 485.5,146.5 485.5,149.5 484.5,152.5 484.5,155.5 483.5,158.5 483.5,161.5 482.5,164.5 482.5,167.5 482.5,170.5 481.5,173.5 481.5,176.5 480.5,179.5 480.5,182.5 479.5,185.5 479.5,188.5 479.5,191.5 478.5,194.5 478.5,197.5 478.5,200.5 477.5,203.5 477.5,206.5 477.5,209.5 477.5,212.5 476.5,215.5 476.5,218.5 476.5,221.5 476.5,224.5 475.5,227.5 475.5,230.5 475.5,233.5 475.5,236.5 475.5,239.5 475.5,242.5 475.5,245.5 475.5,248.5 475.5,251.5 475.5,254.5 475.5,257.5 475.5,260.5 475.5,263.5 475.5,266.5 475.5,269.5 475.5,272.5 475.5,275.5 475.5,278.5 475.5,281.5 475.5,284.5 476.5,287.5 476.5,290.5 476.5,293.5 476.5,296.5 477.5,299.5 477.5,302.5 477.5,305.5 477.5,308.5 478.5,311.5 478.5,314.5 478.5,317.5 479.5,320.5 479.5,323.5 479.5,326.5 480.5,329.5 480.5,332.5 481.5,335.5 481.5,338.5 481.5,341.5 482.5,344.5 482.5,347.5 483.5,350.5 484.5,353.5 484.5,356.5 485.5,359.5 485.5,362.5 486.5,365.5 487.5,368.5 487.5,371.5 488.5,374.5 489.5,377.5 489.5,380.5 490.5,383.5 491.5,386.5 492.5,389.5 493.5,392.5 493.5,395.5 494.5,398.5 495.5,401.5 496.5,404.5 497.5,407.5 498.5,410.5 499.5,413.5 500.5,416.5 502.5,419.5 503.5,422.5 504.5,425.5 505.5,428.5 506.5,431.5 508.5,434.5 509.5,437.5 510.5,440.5 512.5,443.5 513.5,446.5 514.5,449.5 516.5,452.5 517.5,455.5 519.5,458.5 520.5,461.5 522.5,464.5 524.5,467.5 525.5,470.5 527.5,473.5 529.5,476.5 530.5,479.5 532.5,482.5 534.5,485.5 536.5,488.5 538.5,491.5 540.5,494.5 541.5,497.5 543.5,500.5 545.5,503.5 547.5,506.5 549.5,509.5 551.5,512.5 554.5,515.5 556.5,518.5 558.5,521.5 560.5,524.5 562.5,527.5 565.5,530.5 567.5,533.5 569.5,536.5 572.5,539.5 574.5,542.5 576.5,545.5 579.5,548.5 582.5,551.5 584.5,554.5 587.5,557.5 589.5,560.5 592.5,563.5 595.5,566.5 598.5,569.5 600.5,572.5 603.5,575.5 606.5,578.5 609.5,581.5 612.5,584.5 615.5,587.5 618.5,590.5 621.5,593.5 624.5,596.5 628.5,599.5 631.5,602.5 634.5,605.5 637.5,608.5 641.5,611.5 644.5,614.5 648.5,617.5 651.5,620.5 655.5,623.5 658.5,626.5 660.5,627.5" fill="none" stroke="#8b0000" stroke-width="1" />
<polyline points="540.5,50.5 540.5,53.5 539.5,56.5 538.5,59.5 537.5,62.5 536.5,65.5 535.5,68.5 535.5,71.5 534.5,74.5 533.5,77.5 532.5,80.5 531.5,83.5 531.5,86.5 530.5,89.5 529.5,92.5 529.5,95.5 528.5,98.5 527.5,101.5 526.5,104.5 526.5,107.5 525.5,110.5 525.5,113.5 524.5,116.5 523.5,119.5 523.5,122.5 522.5,125.5 522.5,128.5 521.5,131.5 521.5,134.5 520.5,137.5 520.5,140.5 519.5,143.5 519.5,146.5 518.5,149.5 518.5,152.5 517.5,155.5 517.5,158.5 516.5,161.5 516.5,164.5 516.5,167.5 515.5,170.5 515.5,173.5 515.5,176.5 514.5,179.5 514.5,182.5 514.5,185.5 513.5,188.5 513.5,191.5 513.5,194.5 512.5,197.5 512.5,200.5 512.5,203.5 512.5,206.5 511.5,209.5 511.5,212.5 511.5,215.5 511.5,218.5 511.5,221.5 511.5,224.5 511.5,227.5 510.5,230.5 510.5,233.5 510.5,236.5 510.5,239.5 510.5,242.5 510.5,245.5 510.5,248.5 510.5,251.5 510.5,254.5 511.5,257.5 511.5,260.5 511.5,263.5 511.5,266.5 511.5,269.5 511.5,272.5 512.5,275.5 512.5,278.5 512.5,281.5 512.5,284.5 513.5,287.5 513.5,290.5 513.5,293.5 513.5,296.5 514.5,299.5 514.5,302.5 514.5,305.5 515.5,308.5 515.5,311.5 516.5,314.5 516.5,317.5 517.5,320.5 517.5,323.5 517.5,326.5 518.5,329.5 518.5,332.5 519.5,335.5 519.5,338.5 520.5,341.5 521.5,344.5 521.5,347.5 522.5,350.5 522.5,353.5 523.5,356.5 524.5,359.5 524.5,362.5 525.5,365.5 526.5,368.5 527.5,371.5 528.5,374.5 528.5,377.5 529.5,380.5 530.5,383.5 531.5,386.5 532.5,389.5 533.5,392.5 534.5,395.5 535.5,398.5 536.5,401.5 537.5,404.5 538.5,407.5 539.5,410.5 540.5,413.5 542.5,416.5 543.5,419.5 544.5,422.5 545.5,425.5 547.5,428.5 548.5,431.5 550.5,434.5 551.5,437.5 552.5,440.5 554.5,443.5 555.5,446.5 557.5,449.5 559.5,452.5 560.5,455.5 562.5,458.5 564.5,461.5 565.5,464.5 567.5,467.5 569.5,470.5 571.5,473.5 572.5,476.5 574.5,479.5 576.5,482.5 578.5,485.5 580.5,488.5 582.5,491.5 584.5,494.5 586.5,497.5 588.5,500.5 590.5,503.5 592.5,506.5 595.5,509.5 597.5,512.5 599.5,515.5 601.5,518.5 604.5,521.5 606.5,524.5 608.5,527.5 611.5,530.5 613.5,533.5 616.5,536.5 618.5,539.5 621.5,542.5 623.5,545.5 626.5,548.5 629.5,551.5 632.5,554.5 634.5,557.5 637.5,560.5 640.5,563.5 643.5,566.5 646.5,569.5 649.5,572.5 652.5,575.5 655.5,578.5 658.5,581.5 660.5,583.5" fill="none" stroke="#8b0000" stroke-width="1" />
<polyline points="572.5,50.5 571.5,53.5 570.5,56.5 569.5,59.5 568.5,62.5 568.5,65.5 567.5,68.5 566.5,71.5 565.5,74.5 565.5,77.5 564.5,80.5 563.5,83.5 562.5,86.5 562.5,89.5 561.5,92.5 561.5,95.5 560.5,98.5 559.5,101.5 559.5,104.5 558.5,107.5 558.5,110.5 557.5,113.5 556.5,116.5 556.5,119.5 555.5,122.5 555.5,125.5 554.5,128.5 554.5,131.5 553.5,134.5 553.5,137.5 553.5,140.5 552.5,143.5 552.5,146.5 551.5,149.5 551.5,152.5 551.5,155.5 550.5,158.5 550.5,161.5 550.5,164.5 549.5,167.5 549.5,170.5 549.5,173.5 548.5,176.5 548.5,179.5 548.5,182.5 548.5,185.5 547.5,188.5 547.5,191.5 547.5,194.5 547.5,197.5 547.5,200.5 546.5,203.5 546.5,206.5 546.5,209.5 546.5,212.5 546.5,215.5 546.5,218.5 546.5,221.5 546.5,224.5 546.5,227.5 546.5,230.5 546.5,233.5 546.5,236.5 546.5,239.5 546.5,242.5 546.5,245.5 546.5,248.5 546.5,251.5 546.5,254.5 546.5,257.5 547.5,260.5 547.5,263.5 547.5,266.5 547.5,269.5 548.5,272.5 548.5,275.5 548.5,278.5 549.5,281.5 549.5,284.5 549.5,287.5 550.5,290.5 550.5,293.5 551.5,296.5 551.5,299.5 551.5,302.5 552.5,305.5 552.5,308.5 553.5,311.5 553.5,314.5 554.5,317.5 554.5,320.5 555.5,323.5 555.5,326.5 556.5,329.5 557.5,332.5 557.5,335.5 558.5,338.5 559.5,341.5 559.5,344.5 560.5,347.5 561.5,350.5 561.5,353.5 562.5,356.5 563.5,359.5 564.5,362.5 565.5,365.5 565.5,368.5 566.5,371.5 567.5,374.5 568.5,377.5 569.5,380.5 570.5,383.5 571.5,386.5 572.5,389.5 573.5,392.5 574.5,395.5 575.5,398.5 577.5,401.5 578.5,404.5 579.5,407.5 580.5,410.5 582.5,413.5 583.5,416.5 584.5,419.5 586.5,422.5 587.5,425.5 588.5,428.5 590.5,431.5 591.5,434.5 593.5,437.5 595.5,440.5 596.5,443.5 598.5,446.5 600.5,449.5 601.5,452.5 603.5,455.5 605.5,458.5 607.5,461.5 608.5,464.5 610.5,467.5 612.5,470.5 614.5,473.5 616.5,476.5 618.5,479.5 620.5,482.5 622.5,485.5 624.5,488.5 626.5,491.5 629.5,494.5 631.5,497.5 633.5,500.5 635.5,503.5 637.5,506.5 640.5,509.5 642.5,512.5 645.5,515.5 647.5,518.5 649.5,521.5 652.5,524.5 654.5,527.5 657.5,530.5 660.5,533.5 660.5,534.5" fill="none" stroke="#8b0000" stroke-width="1" />
<polyline points="69.5,748.5 68.5,748.5 68.5,747.5 67.5,747.5 67.5,746.5 66.5,746.5 66.5,745.5 65.5,745.5 65.5,744.5 64.5,744.5 64.5,743.5 63.5,743.5 63.5,742.5 62.5,742.5 62.5,741.5 61.5,741.5 61.5,740.5" fill="none" stroke="#00008b" stroke-width="1" />
<polyline points="129.5,748.5 128.5,747.5 127.5,747.5 127.5,746.5 126.5,746.5 126.5,745.5 125.5,745.5 125.5,744.5 124.5,744.5 124.5,743.5 123.5,743.5 123.5,742.5 122.5,742.5 122.5,741.5 121.5,741.5 121.5,740.5 120.5,739.5 119.5,739.5 119.5,738.5 118.5,737.5 117.5,737.5 117.5,736.5 116.5,735.5 115.5,735.5 115.5,734.5 114.5,733.5 114.5,732.5 113.5,732.5 112.5,731.5 112.5,730.5 111.5,730.5 110.5,729.5 110.5,728.5 109.5,728.5 109.5,727.5 108.5,727.5 108.5,726.5 107.5,726.5 107.5,725.5 106.5,724.5 105.5,723.5 104.5,722.5 103.5,721.5 103.5,720.5 102.5,720.5 102.5,719.5 101.5,719.5 101.5,718.5 100.5,718.5 100.5,717.5 99.5,716.5 98.5,715.5 98.5,714.5 97.5,714.5 97.5,713.5 96.5,713.5 96.5,712.5 95.5,712.5 95.5,711.5 94.5,711.5 94.5,710.5 93.5,709.5 92.5,708.5 92.5,707.5 91.5,707.5 91.5,706.5 90.5,706.5 90.5,705.5 89.5,704.5 88.5,703.5 88.5,702.5 87.5,702.5 87.5,701.5 86.5,701.5 86.5,700.5 85.5,699.5 84.5,698.5 84.5,697.5 83.5,697.5 83.5,696.5 82.5,696.5 82.5,695.5 81.5,694.5 81.5,693.5 80.5,693.5 80.5,692.5 79.5,691.5 78.5,690.5 78.5,689.5 77.5,689.5 77.5,688.5 76.5,687.5 76.5,686.5 75.5,686.5 75.5,685.5 74.5,685.5 74.5,684.5 73.5,683.5 73.5,682.5 72.5,682.5 72.5,681.5 71.5,680.5 71.5,679.5 70.5,679.5 70.5,678.5 69.5,677.5 68.5,676.5 68.5,675.5 67.5,674.5 66.5,673.5 66.5,672.5 65.5,671.5 65.5,670.5 64.5,669.5 63.5,668.5 63.5,667.5 62.5,666.5 62.5,665.5 61.5,665.5 61.5,664.5 61.5,663.5" fill="none" stroke="#00008b" stroke-width="1" />
<polyline points="189.5,748.5 188.5,747.5 187.5,747.5 187.5,746.5 186.5,746.5 186.5,745.5 185.5,744.5 184.5,744.5 184.5,743.5 183.5,743.5 183.5,742.5 182.5,742.5 182.5,741.5 181.5,741.5 181.5,740.5 180.5,739.5 179.5,739.5 179.5,738.5 178.5,737.5 177.5,737.5 177.5,736.5 176.5,735.5 175.5,735.5 175.5,734.5 174.5,733.5 173.5,732.5 172.5,731.5 171.5,730.5 170.5,729.5 169.5,728.5 169.5,727.5 168.5,727.5 167.5,726.5 167.5,725.5 166.5,725.5 166.5,724.5 165.5,724.5 165.5,723.5 164.5,723.5 164.5,722.5 163.5,722.5 163.5,721.5 162.5,720.5 161.5,719.5 160.5,719.5 160.5,718.5 159.5,717.5 158.5,716.5 158.5,715.5 157.5,715.5 157.5,714.5 156.5,714.5 156.5,713.5 155.5,712.5 154.5,712.5 154.5,711.5 153.5,711.5 153.5,710.5 152.5,709.5 151.5,708.5 150.5,707.5 150.5,706.5 149.5,706.5 149.5,705.5 148.5,705.5 148.5,704.5 147.5,704.5 147.5,703.5 146.5,702.5 145.5,701.5 144.5,700.5 144.5,699.5 143.5,699.5 143.5,698.5 142.5,698.5 142.5,697.5 141.5,697.5 141.5,696.5 140.5,695.5 139.5,694.5 139.5,693.5 138.5,693.5 138.5,692.5 137.5,691.5 136.5,690.5 135.5,689.5 135.5,688.5 134.5,687.5 133.5,686.5 132.5,685.5 132.5,684.5 131.5,684.5 131.5,683.5 130.5,682.5 129.5,681.5 129.5,680.5 128.5,679.5 127.5,678.5 126.5,677.5 126.5,676.5 125.5,675.5 124.5,674.5 123.5,673.5 123.5,672.5 122.5,671.5 122.5,670.5 121.5,670.5 121.5,669.5 120.5,669.5 120.5,668.5 120.5,667.5 119.5,667.5 119.5,666.5 118.5,665.5 117.5,664.5 117.5,663.5 116.5,662.5 115.5,661.5 115.5,660.5 114.5,660.5 114.5,659.5 114.5,658.5 113.5,658.5 113.5,657.5 112.5,656.5 111.5,655.5 111.5,654.5 110.5,653.5 110.5,652.5 109.5,652.5 109.5,651.5 108.5,650.5 108.5,649.5 107.5,648.5 107.5,647.5 106.5,647.5 106.5,646.5 105.5,645.5 105.5,644.5 104.5,643.5 104.5,642.5 103.5,642.5 103.5,641.5 103.5,640.5 102.5,639.5 101.5,638.5 101.5,637.5 100.5,636.5 100.5,635.5 99.5,634.5 99.5,633.5 98.5,633.5 98.5,632.5 97.5,631.5 97.5,630.5 96.5,629.5 96.5,628.5 95.5,627.5 95.5,626.5 94.5,625.5 94.5,624.5 93.5,623.5 93.5,622.5 92.5,622.5 92.5,621.5 92.5,620.5 91.5,619.5 91.5,618.5 90.5,617.5 90.5,616.5 89.5,615.5 89.5,614.5 88.5,613.5 88.5,612.5 88.5,611.5 87.5,611.5 87.5,610.5 86.5,609.5 86.5,608.5 86.5,607.5 85.5,606.5 85.5,605.5 84.5,604.5 84.5,603.5 83.5,602.5 83.5,601.5 82.5,600.5 82.5,599.5 82.5,598.5 81.5,597.5 81.5,596.5 80.5,595.5 80.5,594.5 80.5,593.5 79.5,592.5 79.5,591.5 79.5,590.5 78.5,589.5 78.5,588.5 77.5,587.5 77.5,586.5 76.5,585.5 76.5,584.5 75.5,583.5 75.5,581.5 75.5,580.5 74.5,579.5 74.5,578.5 74.5,577.5 73.5,576.5 73.5,575.5 72.5,574.5 72.5,573.5 72.5,572.5 71.5,571.5 71.5,570.5 71.5,569.5 70.5,568.5 70.5,567.5 70.5,566.5 69.5,565.5 69.5,564.5 69.5,562.5 68.5,561.5 68.5,560.5 67.5,559.5 67.5,558.5 67.5,557.5 66.5,556.5 66.5,554.5 66.5,553.5 65.5,552.5 65.5,551.5 65.5,550.5 64.5,549.5 64.5,547.5 64.5,546.5 63.5,545.5 63.5,544.5 63.5,543.5 63.5,541.5 62.5,540.5 62.5,539.5 62.5,538.5 61.5,536.5 61.5,535.5 61.5,534.5 61.5,533.5" fill="none" stroke="#00008b" stroke-width="1" />
<polyline points="61.5,342.5 61.5,340.5 62.5,337.5 62.5,334.5 63.5,331.5 64.5,327.5 64.5,324.5 65.5,321.5 66.5,317.5 67.5,314.5 68.5,310.5 68.5,306.5 69.5,303.5 70.5,299.5 71.5,295.5 72.5,292.5 73.5,288.5 74.5,284.5 75.5,280.5 76.5,276.5 78.5,272.5 79.5,268.5 80.5,264.5 81.5,259.5 83.5,255.5 84.5,251.5 85.5,246.5 87.5,242.5 88.5,237.5 90.5,232.5 92.5,228.5 93.5,223.5 95.5,218.5 97.5,213.5 99.5,207.5 101.5,202.5 103.5,197.5 105.5,191.5 107.5,186.5 109.5,180.5 112.5,174.5 113.5,172.5" fill="none" stroke="#00008b" stroke-width="1" />
<polyline points="249.5,748.5 248.5,748.5 248.5,747.5 247.5,747.5 247.5,746.5 246.5,746.5 246.5,745.5 245.5,745.5 245.5,744.5 244.5,744.5 244.5,743.5 243.5,743.5 243.5,742.5 242.5,742.5 242.5,741.5 241.5,741.5 241.5,740.5 240.5,739.5 239.5,739.5 239.5,738.5 238.5,737.5 237.5,736.5 236.5,735.5 235.5,734.5 235.5,733.5 234.5,733.5 234.5,732.5 233.5,732.5 233.5,731.5 232.5,731.5 232.5,730.5 231.5,730.5 231.5,729.5 230.5,729.5 230.5,728.5 229.5,727.5 228.5,727.5 228.5,726.5 227.5,725.5 226.5,724.5 226.5,723.5 225.5,723.5 224.5,722.5 224.5,721.5 223.5,721.5 223.5,720.5 222.5,720.5 222.5,719.5 221.5,719.5 221.5,718.5 220.5,718.5 220.5,717.5 219.5,716.5 218.5,715.5 217.5,714.5 217.5,713.5 216.5,713.5 216.5,712.5 215.5,712.5 215.5,711.5 214.5,711.5 214.5,710.5 213.5,710.5 213.5,709.5 212.5,709.5 212.5,708.5 211.5,707.5 210.5,706.5 209.5,705.5 209.5,704.5 208.5,704.5 208.5,703.5 207.5,703.5 207.5,702.5 206.5,702.5 206.5,701.5 205.5,700.5 204.5,699.5 203.5,698.5 202.5,697.5 202.5,696.5 201.5,696.5 201.5,695.5 200.5,695.5 200.5,694.5 199.5,693.5 198.5,692.5 198.5,691.5 197.5,691.5 197.5,690.5 196.5,690.5 196.5,689.5 195.5,689.5 195.5,688.5 194.5,687.5 194.5,686.5 193.5,686.5 193.5,685.5 192.5,685.5 192.5,684.5 191.5,684.5 191.5,683.5 190.5,682.5 190.5,681.5 189.5,681.5 189.5,680.5 188.5,679.5 187.5,678.5 186.5,677.5 186.5,676.5 185.5,675.5 184.5,674.5 183.5,673.5 183.5,672.5 182.5,672.5 182.5,671.5 181.5,670.5 181.5,669.5 180.5,669.5 180.5,668.5 179.5,667.5 178.5,666.5 178.5,665.5 177.5,665.5 177.5,664.5 176.5,664.5 176.5,663.5 175.5,662.5 175.5,661.5 174.5,660.5 173.5,659.5 173.5,658.5 172.5,658.5 172.5,657.5 171.5,656.5 170.5,655.5 170.5,654.5 169.5,654.5 169.5,653.5 169.5,652.5 168.5,652.5 168.5,651.5 167.5,650.5 167.5,649.5 166.5,649.5 166.5,648.5 165.5,647.5 164.5,646.5 164.5,645.5 163.5,644.5 163.5,643.5 162.5,642.5 161.5,641.5 161.5,640.5 160.5,639.5 159.5,638.5 159.5,637.5 158.5,636.5 157.5,635.5 157.5,634.5 156.5,633.5 156.5,632.5 155.5,631.5 155.5,630.5 154.5,630.5 154.5,629.5 153.5,628.5 153.5,627.5 152.5,626.5 151.5,625.5 151.5,624.5 150.5,623.5 150.5,622.5 149.5,621.5 149.5,620.5 148.5,619.5 148.5,618.5 147.5,617.5 146.5,616.5 146.5,615.5 145.5,614.5 145.5,613.5 145.5,612.5 144.5,611.5 143.5,610.5 143.5,609.5 142.5,608.5 142.5,607.5 141.5,606.5 141.5,605.5 140.5,604.5 140.5,603.5 139.5,602.5 139.5,601.5 138.5,600.5 138.5,599.5 137.5,598.5 137.5,597.5 136.5,596.5 136.5,595.5 136.5,594.5 135.5,593.5 135.5,592.5 134.5,591.5 134.5,590.5 133.5,589.5 133.5,588.5 132.5,587.5 132.5,586.5 131.5,585.5 131.5,584.5 130.5,583.5 130.5,581.5 129.5,580.5 129.5,579.5 128.5,578.5 128.5,577.5 128.5,576.5 127.5,575.5 127.5,574.5 126.5,573.5 126.5,572.5 125.5,571.5 125.5,570.5 125.5,569.5 124.5,568.5 124.5,567.5 123.5,566.5 123.5,565.5 123.5,564.5 122.5,562.5 122.5,561.5 121.5,560.5 121.5,559.5 120.5,558.5 120.5,557.5 120.5,556.5 119.5,554.5 119.5,553.5 118.5,552.5 118.5,551.5 118.5,550.5 117.5,549.5 117.5,547.5 116.5,546.5 116.5,545.5 116.5,544.5 115.5,543.5 115.5,541.5 115.5,540.5 114.5,539.5 114.5,538.5 113.5,536.5 113.5,535.5 113.5,534.5 112.5,532.5 112.5,531.5 112.5,530.5 111.5,529.5 111.5,527.5 110.5,526.5 110.5,525.5 110.5,523.5 109.5,522.5 109.5,520.5 109.5,519.5 108.5,518.5 108.5,516.5 108.5,515.5 107.5,513.5 107.5,512.5 107.5,511.5 106.5,509.5 106.5,508.5 106.5,506.5 105.5,505.5 105.5,503.5 105.5,502.5 105.5,500.5 104.5,499.5 104.5,497.5 104.5,496.5 103.5,494.5 103.5,492.5 103.5,491.5 103.5,489.5 102.5,488.5 102.5,486.5 102.5,484.5 102.5,483.5 101.5,481.5 101.5,479.5 101.5,478.5 101.5,476.5 100.5,474.5 100.5,473.5 100.5,471.5 100.5,469.5 100.5,467.5 99.5,466.5 99.5,464.5 99.5,462.5 99.5,460.5 99.5,458.5 98.5,457.5 98.5,455.5 98.5,453.5 98.5,451.5 98.5,449.5 98.5,447.5 98.5,445.5 97.5,443.5 97.5,441.5 97.5,439.5 97.5,437.5 97.5,435.5 97.5,433.5 97.5,431.5 97.5,429.5 97.5,426.5 97.5,424.5 97.5,422.5 97.5,420.5 97.5,418.5 97.5,415.5 97.5,413.5 97.5,411.5 97.5,409.5 97.5,406.5 97.5,404.5 97.5,401.5 97.5,399.5 98.5,396.5 98.5,394.5 98.5,391.5 98.5,389.5 98.5,386.5 98.5,384.5 99.5,381.5 99.5,378.5 99.5,376.5 100.5,373.5 100.5,370.5 100.5,367.5 101.5,364.5 101.5,362.5 101.5,359.5 102.5,356.5 102.5,353.5 103.5,350.5 103.5,347.5 104.5,343.5 104.5,340.5 105.5,337.5 105.5,334.5 106.5,331.5 106.5,327.5 107.5,324.5 108.5,321.5 108.5,317.5 109.5,314.5 110.5,310.5 110.5,306.5 111.5,303.5 112.5,299.5 113.5,295.5 114.5,292.5 115.5,288.5 115.5,284.5 116.5,280.5 117.5,276.5 118.5,272.5 119.5,268.5 121.5,264.5 122.5,259.5 123.5,255.5 124.5,251.5 125.5,246.5 127.5,242.5 128.5,237.5 130.5,232.5 131.5,228.5 133.5,223.5 134.5,218.5 136.5,213.5 138.5,207.5 139.5,202.5 141.5,197.5 143.5,191.5 145.5,186.5 147.5,180.5 149.5,174.5 152.5,168.5 154.5,162.5 157.5,156.5 159.5,149.5 162.5,143.5 165.5,136.5 167.5,129.5 171.5,122.5 174.5,115.5 177.5,108.5 177.5,107.5" fill="none" stroke="#00008b" stroke-width="1" />
<polyline points="307.5,748.5 307.5,747.5 306.5,747.5 306.5,746.5 305.5,746.5 305.5,745.5 304.5,744.5 303.5,743.5 302.5,742.5 302.5,741.5 301.5,741.5 301.5,740.5 300.5,739.5 299.5,738.5 299.5,737.5 298.5,737.5 298.5,736.5 297.5,736.5 297.5,735.5 296.5,735.5 296.5,734.5 295.5,733.5 295.5,732.5 294.5,732.5 294.5,731.5 293.5,731.5 293.5,730.5 292.5,730.5 292.5,729.5 291.5,728.5 291.5,727.5 290.5,727.5 290.5,726.5 289.5,726.5 289.5,725.5 288.5,724.5 288.5,723.5 287.5,723.5 287.5,722.5 286.5,722.5 286.5,721.5 285.5,721.5 285.5,720.5 284.5,719.5 283.5,718.5 283.5,717.5 282.5,717.5 282.5,716.5 281.5,716.5 281.5,715.5 280.5,714.5 280.5,713.5 279.5,713.5 279.5,712.5 278.5,712.5 278.5,711.5 277.5,711.5 277.5,710.5 276.5,709.5 275.5,708.5 275.5,707.5 274.5,707.5 274.5,706.5 273.5,706.5 273.5,705.5 272.5,704.5 271.5,703.5 271.5,702.5 270.5,702.5 270.5,701.5 269.5,701.5 269.5,700.5 268.5,699.5 267.5,698.5 267.5,697.5 266.5,697.5 266.5,696.5 265.5,696.5 265.5,695.5 264.5,695.5 264.5,694.5 264.5,693.5 263.5,693.5 263.5,692.5 262.5,692.5 262.5,691.5 261.5,690.5 260.5,689.5 259.5,688.5 259.5,687.5 258.5,686.5 257.5,685.5 256.5,684.5 256.5,683.5 255.5,682.5 254.5,681.5 253.5,680.5 253.5,679.5 252.5,679.5 252.5,678.5 251.5,677.5 250.5,676.5 250.5,675.5 249.5,675.5 249.5,674.5 248.5,674.5 248.5,673.5 248.5,672.5 247.5,672.5 247.5,671.5 246.5,670.5 245.5,669.5 244.5,668.5 244.5,667.5 243.5,667.5 243.5,666.5 243.5,665.5 242.5,665.5 242.5,664.5 241.5,664.5 241.5,663.5 240.5,662.5 239.5,661.5 239.5,660.5 238.5,660.5 238.5,659.5 237.5,658.5 236.5,657.5 236.5,656.5 235.5,655.5 235.5,654.5 234.5,654.5 234.5,653.5 233.5,652.5 232.5,651.5 232.5,650.5 231.5,649.5 230.5,648.5 230.5,647.5 229.5,647.5 229.5,646.5 228.5,645.5 228.5,644.5 227.5,644.5 227.5,643.5 226.5,642.5 225.5,641.5 225.5,640.5 224.5,639.5 223.5,638.5 223.5,637.5 222.5,636.5 221.5,635.5 221.5,634.5 221.5,633.5 220.5,633.5 220.5,632.5 219.5,631.5 219.5,630.5 218.5,630.5 218.5,629.5 217.5,628.5 217.5,627.5 216.5,626.5 215.5,625.5 215.5,624.5 214.5,623.5 214.5,622.5 213.5,622.5 213.5,621.5 212.5,620.5 212.5,619.5 211.5,618.5 211.5,617.5 210.5,617.5 210.5,616.5 209.5,615.5 209.5,614.5 208.5,613.5 208.5,612.5 207.5,611.5 206.5,610.5 206.5,609.5 205.5,608.5 205.5,607.5 204.5,606.5 204.5,605.5 203.5,604.5 203.5,603.5 202.5,603.5 202.5,602.5 201.5,601.5 201.5,600.5 200.5,599.5 200.5,598.5 199.5,597.5 199.5,596.5 198.5,595.5 198.5,594.5 197.5,593.5 197.5,592.5 196.5,591.5 196.5,590.5 195.5,589.5 195.5,588.5 194.5,587.5 194.5,586.5 193.5,586.5 193.5,585.5 192.5,584.5 192.5,583.5 191.5,581.5 191.5,580.5 190.5,579.5 190.5,578.5 189.5,577.5 189.5,576.5 188.5,575.5 188.5,574.5 187.5,573.5 187.5,572.5 186.5,571.5 186.5,570.5 185.5,569.5 185.5,568.5 184.5,567.5 184.5,566.5 183.5,565.5 183.5,564.5 182.5,562.5 182.5,561.5 181.5,560.5 181.5,559.5 180.5,558.5 180.5,557.5 179.5,556.5 179.5,554.5 179.5,553.5 178.5,552.5 178.5,551.5 177.5,550.5 177.5,549.5 176.5,547.5 176.5,546.5 175.5,545.5 175.5,544.5 174.5,543.5 174.5,541.5 173.5,540.5 173.5,539.5 172.5,538.5 172.5,536.5 172.5,535.5 171.5,534.5 171.5,532.5 170.5,531.5 170.5,530.5 169.5,529.5 169.5,527.5 168.5,526.5 168.5,525.5 168.5,523.5 167.5,522.5 167.5,520.5 166.5,519.5 166.5,518.5 165.5,516.5 165.5,515.5 165.5,513.5 164.5,512.5 164.5,511.5 163.5,509.5 163.5,508.5 163.5,506.5 162.5,505.5 162.5,503.5 161.5,502.5 161.5,500.5 161.5,499.5 160.5,497.5 160.5,496.5 160.5,494.5 159.5,492.5 159.5,491.5 158.5,489.5 158.5,488.5 158.5,486.5 157.5,484.5 157.5,483.5 157.5,481.5 156.5,479.5 156.5,478.5 156.5,476.5 155.5,474.5 155.5,473.5 155.5,471.5 154.5,469.5 154.5,467.5 154.5,466.5 154.5,464.5 153.5,462.5 153.5,460.5 153.5,458.5 153.5,457.5 152.5,455.5 152.5,453.5 152.5,451.5 152.5,449.5 151.5,447.5 151.5,445.5 151.5,443.5 151.5,441.5 150.5,439.5 150.5,437.5 150.5,435.5 150.5,433.5 150.5,431.5 150.5,429.5 149.5,426.5 149.5,424.5 149.5,422.5 149.5,420.5 149.5,418.5 149.5,415.5 149.5,413.5 149.5,411.5 149.5,409.5 149.5,406.5 149.5,404.5 149.5,401.5 149.5,399.5 149.5,396.5 149.5,394.5 149.5,391.5 149.5,389.5 149.5,386.5 149.5,384.5 149.5,381.5 149.5,378.5 149.5,376.5 150.5,373.5 150.5,370.5 150.5,367.5 150.5,364.5 150.5,362.5 151.5,359.5 151.5,356.5 151.5,353.5 152.5,350.5 152.5,347.5 152.5,343.5 153.5,340.5 153.5,337.5 153.5,334.5 154.5,331.5 154.5,327.5 155.5,324.5 155.5,321.5 156.5,317.5 156.5,314.5 157.5,310.5 158.5,306.5 158.5,303.5 159.5,299.5 160.5,295.5 160.5,292.5 161.5,288.5 162.5,284.5 163.5,280.5 163.5,276.5 164.5,272.5 165.5,268.5 166.5,264.5 167.5,259.5 168.5,255.5 169.5,251.5 170.5,246.5 172.5,242.5 173.5,237.5 174.5,232.5 175.5,228.5 177.5,223.5 178.5,218.5 180.5,213.5 181.5,207.5 183.5,202.5 185.5,197.5 186.5,191.5 188.5,186.5 190.5,180.5 192.5,174.5 194.5,168.5 196.5,162.5 199.5,156.5 201.5,149.5 203.5,143.5 206.5,136.5 209.5,129.5 212.5,122.5 215.5,115.5 218.5,108.5 221.5,100.5 224.5,92.5 228.5,84.5 232.5,76.5 236.5,67.5 240.5,59.5 244.5,50.5" fill="none" stroke="#00008b" stroke-width="1" />
<polyline points="366.5,748.5 365.5,748.5 365.5,747.5 364.5,747.5 364.5,746.5 364.5,745.5 363.5,745.5 363.5,744.5 363.5,743.5 362.5,743.5 362.5,742.5 361.5,741.5 361.5,740.5 360.5,739.5 360.5,738.5 359.5,738.5 359.5,737.5 358.5,736.5 358.5,735.5 357.5,735.5 357.5,734.5 357.5,733.5 356.5,732.5 356.5,731.5 355.5,731.5 355.5,730.5 354.5,729.5 354.5,728.5 353.5,727.5 353.5,726.5 352.5,726.5 352.5,725.5 352.5,724.5 351.5,724.5 351.5,723.5 350.5,722.5 350.5,721.5 349.5,721.5 349.5,720.5 349.5,719.5 348.5,719.5 348.5,718.5 347.5,717.5 347.5,716.5 346.5,716.5 346.5,715.5 346.5,714.5 345.5,714.5 345.5,713.5 344.5,712.5 344.5,711.5 343.5,711.5 343.5,710.5 342.5,709.5 342.5,708.5 341.5,707.5 341.5,706.5 340.5,706.5 340.5,705.5 339.5,704.5 339.5,703.5 338.5,703.5 338.5,702.5 337.5,701.5 337.5,700.5 336.5,699.5 336.5,698.5 335.5,698.5 335.5,697.5 334.5,696.5 334.5,695.5 333.5,695.5 333.5,694.5 333.5,693.5 332.5,693.5 332.5,692.5 331.5,691.5 331.5,690.5 330.5,690.5 330.5,689.5 329.5,689.5 329.5,688.5 329.5,687.5 328.5,687.5 328.5,686.5 327.5,685.5 327.5,684.5 326.5,684.5 326.5,683.5 326.5,682.5 325.5,682.5 325.5,681.5 324.5,681.5 324.5,680.5 324.5,679.5 323.5,679.5 323.5,678.5 322.5,677.5 322.5,676.5 321.5,675.5 320.5,674.5 320.5,673.5 319.5,672.5 318.5,671.5 318.5,670.5 317.5,669.5 317.5,668.5 316.5,667.5 315.5,666.5 315.5,665.5 314.5,664.5 313.5,663.5 313.5,662.5 312.5,662.5 312.5,661.5 312.5,660.5 311.5,660.5 311.5,659.5 310.5,658.5 310.5,657.5 309.5,656.5 308.5,655.5 308.5,654.5 307.5,654.5 307.5,653.5 307.5,652.5 306.5,652.5 306.5,651.5 305.5,650.5 305.5,649.5 304.5,649.5 304.5,648.5 303.5,647.5 303.5,646.5 302.5,645.5 302.5,644.5 301.5,644.5 301.5,643.5 300.5,642.5 299.5,641.5 299.5,640.5 298.5,639.5 298.5,638.5 297.5,637.5 297.5,636.5 296.5,636.5 296.5,635.5 295.5,634.5 295.5,633.5 294.5,633.5 294.5,632.5 293.5,631.5 293.5,630.5 292.5,630.5 292.5,629.5 291.5,628.5 291.5,627.5 290.5,626.5 289.5,625.5 289.5,624.5 288.5,623.5 288.5,622.5 287.5,622.5 287.5,621.5 287.5,620.5 286.5,619.5 286.5,618.5 285.5,617.5 284.5,616.5 284.5,615.5 283.5,614.5 283.5,613.5 282.5,612.5 281.5,611.5 280.5,610.5 280.5,609.5 279.5,608.5 279.5,607.5 278.5,606.5 278.5,605.5 277.5,604.5 277.5,603.5 276.5,603.5 276.5,602.5 275.5,601.5 275.5,600.5 274.5,599.5 274.5,598.5 273.5,597.5 273.5,596.5 272.5,595.5 272.5,594.5 271.5,593.5 271.5,592.5 270.5,591.5 270.5,590.5 269.5,589.5 269.5,588.5 268.5,587.5 267.5,586.5 266.5,585.5 266.5,584.5 265.5,583.5 265.5,581.5 264.5,580.5 264.5,579.5 263.5,578.5 263.5,577.5 262.5,576.5 262.5,575.5 261.5,574.5 260.5,573.5 260.5,572.5 259.5,571.5 259.5,570.5 258.5,569.5 258.5,568.5 257.5,567.5 257.5,566.5 256.5,565.5 256.5,564.5 255.5,562.5 255.5,561.5 254.5,560.5 253.5,559.5 253.5,558.5 252.5,557.5 252.5,556.5 251.5,554.5 251.5,553.5 250.5,552.5 250.5,551.5 249.5,550.5 249.5,549.5 248.5,547.5 248.5,546.5 247.5,545.5 246.5,544.5 246.5,543.5 245.5,541.5 245.5,540.5 244.5,539.5 244.5,538.5 243.5,536.5 243.5,535.5 242.5,534.5 242.5,532.5 241.5,531.5 241.5,530.5 240.5,529.5 240.5,527.5 239.5,526.5 239.5,525.5 238.5,523.5 238.5,522.5 237.5,520.5 236.5,519.5 236.5,518.5 235.5,516.5 235.5,515.5 234.5,513.5 234.5,512.5 233.5,511.5 233.5,509.5 232.5,508.5 232.5,506.5 231.5,505.5 231.5,503.5 230.5,502.5 230.5,500.5 230.5,499.5 229.5,497.5 229.5,496.5 228.5,494.5 228.5,492.5 227.5,491.5 227.5,489.5 226.5,488.5 226.5,486.5 225.5,484.5 225.5,483.5 224.5,481.5 224.5,479.5 224.5,478.5 223.5,476.5 223.5,474.5 222.5,473.5 222.5,471.5 221.5,469.5 221.5,467.5 221.5,466.5 220.5,464.5 220.5,462.5 219.5,460.5 219.5,458.5 219.5,457.5 218.5,455.5 218.5,453.5 218.5,451.5 217.5,449.5 217.5,447.5 216.5,445.5 216.5,443.5 216.5,441.5 215.5,439.5 215.5,437.5 215.5,435.5 215.5,433.5 214.5,431.5 214.5,429.5 214.5,426.5 213.5,424.5 213.5,422.5 213.5,420.5 213.5,418.5 212.5,415.5 212.5,413.5 212.5,411.5 212.5,409.5 212.5,406.5 212.5,404.5 211.5,401.5 211.5,399.5 211.5,396.5 211.5,394.5 211.5,391.5 211.5,389.5 211.5,386.5 211.5,384.5 211.5,381.5 211.5,378.5 211.5,376.5 211.5,373.5 211.5,370.5 211.5,367.5 211.5,364.5 211.5,362.5 211.5,359.5 211.5,356.5 211.5,353.5 212.5,350.5 212.5,347.5 212.5,343.5 212.5,340.5 212.5,337.5 213.5,334.5 213.5,331.5 213.5,327.5 214.5,324.5 214.5,321.5 214.5,317.5 215.5,314.5 215.5,310.5 216.5,306.5 216.5,303.5 216.5,299.5 217.5,295.5 218.5,292.5 218.5,288.5 219.5,284.5 219.5,280.5 220.5,276.5 221.5,272.5 221.5,268.5 222.5,264.5 223.5,259.5 224.5,255.5 225.5,251.5 226.5,246.5 227.5,242.5 228.5,237.5 229.5,232.5 230.5,228.5 231.5,223.5 232.5,218.5 233.5,213.5 235.5,207.5 236.5,202.5 238.5,197.5 239.5,191.5 241.5,186.5 242.5,180.5 244.5,174.5 246.5,168.5 248.5,162.5 250.5,156.5 252.5,149.5 255.5,143.5 257.5,136.5 259.5,129.5 262.5,122.5 265.5,115.5 268.5,108.5 271.5,100.5 274.5,92.5 277.5,84.5 281.5,76.5 284.5,67.5 288.5,59.5 292.5,50.5" fill="none" stroke="#00008b" stroke-width="1" />
<polyline points="423.5,748.5 423.5,747.5 423.5,746.5 422.5,746.5 422.5,745.5 422.5,744.5 422.5,743.5 421.5,743.5 421.5,742.5 421.5,741.5 421.5,740.5 420.5,739.5 420.5,738.5 420.5,737.5 419.5,737.5 419.5,736.5 419.5,735.5 419.5,734.5 418.5,733.5 418.5,732.5 418.5,731.5 417.5,730.5 417.5,729.5 417.5,728.5 416.5,727.5 416.5,726.5 416.5,725.5 415.5,724.5 415.5,723.5 415.5,722.5 414.5,721.5 414.5,720.5 414.5,719.5 413.5,718.5 413.5,717.5 413.5,716.5 412.5,715.5 412.5,714.5 412.5,713.5 411.5,712.5 411.5,711.5 411.5,710.5 410.5,710.5 410.5,709.5 410.5,708.5 410.5,707.5 409.5,707.5 409.5,706.5 409.5,705.5 408.5,704.5 408.5,703.5 408.5,702.5 407.5,701.5 407.5,700.5 407.5,699.5 406.5,699.5 406.5,698.5 406.5,697.5 405.5,696.5 405.5,695.5 405.5,694.5 404.5,693.5 404.5,692.5 404.5,691.5 403.5,691.5 403.5,690.5 403.5,689.5 402.5,688.5 402.5,687.5 402.5,686.5 401.5,685.5 401.5,684.5 401.5,683.5 400.5,682.5 400.5,681.5 400.5,680.5 399.5,679.5 399.5,678.5 398.5,677.5 398.5,676.5 398.5,675.5 397.5,675.5 397.5,674.5 397.5,673.5 397.5,672.5 396.5,672.5 396.5,671.5 396.5,670.5 395.5,669.5 395.5,668.5 395.5,667.5 394.5,667.5 394.5,666.5 394.5,665.5 393.5,664.5 393.5,663.5 393.5,662.5 392.5,662.5 392.5,661.5 392.5,660.5 391.5,659.5 391.5,658.5 390.5,657.5 390.5,656.5 390.5,655.5 389.5,654.5 389.5,653.5 388.5,652.5 388.5,651.5 388.5,650.5 387.5,649.5 387.5,648.5 386.5,647.5 386.5,646.5 386.5,645.5 385.5,644.5 385.5,643.5 384.5,642.5 384.5,641.5 383.5,640.5 383.5,639.5 382.5,638.5 382.5,637.5 382.5,636.5 381.5,636.5 381.5,635.5 381.5,634.5 380.5,633.5 380.5,632.5 379.5,631.5 379.5,630.5 378.5,629.5 378.5,628.5 378.5,627.5 377.5,626.5 377.5,625.5 376.5,624.5 376.5,623.5 376.5,622.5 375.5,622.5 375.5,621.5 374.5,620.5 374.5,619.5 374.5,618.5 373.5,617.5 373.5,616.5 372.5,615.5 372.5,614.5 371.5,613.5 371.5,612.5 371.5,611.5 370.5,611.5 370.5,610.5 369.5,609.5 369.5,608.5 369.5,607.5 368.5,606.5 368.5,605.5 367.5,604.5 367.5,603.5 366.5,602.5 366.5,601.5 365.5,600.5 365.5,599.5 364.5,598.5 364.5,597.5 364.5,596.5 363.5,595.5 363.5,594.5 362.5,593.5 362.5,592.5 361.5,591.5 361.5,590.5 360.5,589.5 360.5,588.5 360.5,587.5 359.5,586.5 358.5,585.5 358.5,584.5 357.5,583.5 357.5,581.5 356.5,580.5 356.5,579.5 355.5,578.5 355.5,577.5 354.5,576.5 354.5,575.5 353.5,574.5 353.5,573.5 352.5,572.5 352.5,571.5 351.5,570.5 351.5,569.5 350.5,568.5 350.5,567.5 349.5,566.5 349.5,565.5 348.5,564.5 348.5,562.5 347.5,561.5 347.5,560.5 346.5,559.5 346.5,558.5 345.5,557.5 345.5,556.5 344.5,554.5 344.5,553.5 343.5,552.5 343.5,551.5 342.5,550.5 341.5,549.5 341.5,547.5 340.5,546.5 340.5,545.5 339.5,544.5 339.5,543.5 338.5,541.5 338.5,540.5 337.5,539.5 337.5,538.5 336.5,536.5 335.5,535.5 335.5,534.5 334.5,532.5 334.5,531.5 333.5,530.5 333.5,529.5 332.5,527.5 332.5,526.5 331.5,525.5 330.5,523.5 330.5,522.5 329.5,520.5 329.5,519.5 328.5,518.5 328.5,516.5 327.5,515.5 326.5,513.5 326.5,512.5 325.5,511.5 325.5,509.5 324.5,508.5 324.5,506.5 323.5,505.5 322.5,503.5 322.5,502.5 321.5,500.5 321.5,499.5 320.5,497.5 320.5,496.5 319.5,494.5 319.5,492.5 318.5,491.5 317.5,489.5 317.5,488.5 316.5,486.5 316.5,484.5 315.5,483.5 315.5,481.5 314.5,479.5 314.5,478.5 313.5,476.5 312.5,474.5 312.5,473.5 311.5,471.5 311.5,469.5 310.5,467.5 310.5,466.5 309.5,464.5 309.5,462.5 308.5,460.5 308.5,458.5 307.5,457.5 307.5,455.5 306.5,453.5 306.5,451.5 305.5,449.5 305.5,447.5 304.5,445.5 304.5,443.5 303.5,441.5 303.5,439.5 302.5,437.5 302.5,435.5 301.5,433.5 301.5,431.5 300.5,429.5 300.5,426.5 300.5,424.5 299.5,422.5 299.5,420.5 298.5,418.5 298.5,415.5 298.5,413.5 297.5,411.5 297.5,409.5 297.5,406.5 296.5,404.5 296.5,401.5 296.5,399.5 295.5,396.5 295.5,394.5 295.5,391.5 294.5,389.5 294.5,386.5 294.5,384.5 294.5,381.5 294.5,378.5 293.5,376.5 293.5,373.5 293.5,370.5 293.5,367.5 293.5,364.5 293.5,362.5 293.5,359.5 292.5,356.5 292.5,353.5 292.5,350.5 292.5,347.5 292.5,343.5 292.5,340.5 292.5,337.5 292.5,334.5 293.5,331.5 293.5,327.5 293.5,324.5 293.5,321.5 293.5,317.5 293.5,314.5 293.5,310.5 293.5,306.5 294.5,303.5 294.5,299.5 294.5,295.5 295.5,292.5 295.5,288.5 295.5,284.5 296.5,280.5 296.5,276.5 296.5,272.5 297.5,268.5 297.5,264.5 298.5,259.5 299.5,255.5 299.5,251.5 300.5,246.5 301.5,242.5 301.5,237.5 302.5,232.5 303.5,228.5 304.5,223.5 305.5,218.5 306.5,213.5 307.5,207.5 308.5,202.5 309.5,197.5 310.5,191.5 312.5,186.5 313.5,180.5 315.5,174.5 316.5,168.5 318.5,162.5 320.5,156.5 321.5,149.5 323.5,143.5 325.5,136.5 328.5,129.5 330.5,122.5 332.5,115.5 335.5,108.5 337.5,100.5 340.5,92.5 343.5,84.5 346.5,76.5 350.5,67.5 353.5,59.5 357.5,50.5" fill="none" stroke="#00008b" stroke-width="1" />
<polyline points="482.5,748.5 481.5,748.5 481.5,747.5 481.5,746.5 481.5,745.5 481.5,744.5 481.5,743.5 481.5,742.5 481.5,741.5 481.5,740.5 480.5,739.5 480.5,738.5 480.5,737.5 480.5,736.5 480.5,735.5 480.5,734.5 480.5,733.5 480.5,732.5 480.5,731.5 480.5,730.5 479.5,730.5 479.5,729.5 479.5,728.5 479.5,727.5 479.5,726.5 479.5,725.5 479.5,724.5 479.5,723.5 479.5,722.5 479.5,721.5 479.5,720.5 478.5,719.5 478.5,718.5 478.5,717.5 478.5,716.5 478.5,715.5 478.5,714.5 478.5,713.5 478.5,712.5 478.5,711.5 478.5,710.5 477.5,710.5 477.5,709.5 477.5,708.5 477.5,707.5 477.5,706.5 477.5,705.5 477.5,704.5 477.5,703.5 477.5,702.5 477.5,701.5 477.5,700.5 476.5,700.5 476.5,699.5 476.5,698.5 476.5,697.5 476.5,696.5 476.5,695.5 476.5,694.5 476.5,693.5 476.5,692.5 476.5,691.5 475.5,690.5 475.5,689.5 475.5,688.5 475.5,687.5 475.5,686.5 475.5,685.5 475.5,684.5 475.5,683.5 475.5,682.5 475.5,681.5 475.5,680.5 474.5,679.5 474.5,678.5 474.5,677.5 474.5,676.5 474.5,675.5 474.5,674.5 474.5,673.5 474.5,672.5 474.5,671.5 474.5,670.5 474.5,669.5 473.5,669.5 473.5,668.5 473.5,667.5 473.5,666.5 473.5,665.5 473.5,664.5 473.5,663.5 473.5,662.5 473.5,661.5 473.5,660.5 472.5,659.5 472.5,658.5 472.5,657.5 472.5,656.5 472.5,655.5 472.5,654.5 472.5,653.5 472.5,652.5 472.5,651.5 472.5,650.5 471.5,649.5 471.5,648.5 471.5,647.5 471.5,646.5 471.5,645.5 471.5,644.5 471.5,643.5 471.5,642.5 471.5,641.5 470.5,640.5 470.5,639.5 470.5,638.5 470.5,637.5 470.5,636.5 470.5,635.5 470.5,634.5 470.5,633.5 469.5,632.5 469.5,631.5 469.5,630.5 469.5,629.5 469.5,628.5 469.5,627.5 469.5,626.5 469.5,625.5 468.5,624.5 468.5,623.5 468.5,622.5 468.5,621.5 468.5,620.5 468.5,619.5 468.5,618.5 468.5,617.5 467.5,617.5 467.5,616.5 467.5,615.5 467.5,614.5 467.5,613.5 467.5,612.5 467.5,611.5 467.5,610.5 466.5,609.5 466.5,608.5 466.5,607.5 466.5,606.5 466.5,605.5 466.5,604.5 466.5,603.5 465.5,603.5 465.5,602.5 465.5,601.5 465.5,600.5 465.5,599.5 465.5,598.5 465.5,597.5 464.5,596.5 464.5,595.5 464.5,594.5 464.5,593.5 464.5,592.5 464.5,591.5 464.5,590.5 463.5,589.5 463.5,588.5 463.5,587.5 463.5,586.5 463.5,585.5 462.5,584.5 462.5,583.5 462.5,581.5 462.5,580.5 462.5,579.5 461.5,578.5 461.5,577.5 461.5,576.5 461.5,575.5 461.5,574.5 460.5,573.5 460.5,572.5 460.5,571.5 460.5,570.5 460.5,569.5 459.5,568.5 459.5,567.5 459.5,566.5 459.5,565.5 459.5,564.5 458.5,562.5 458.5,561.5 458.5,560.5 458.5,559.5 457.5,558.5 457.5,557.5 457.5,556.5 457.5,554.5 456.5,553.5 456.5,552.5 456.5,551.5 456.5,550.5 455.5,549.5 455.5,547.5 455.5,546.5 455.5,545.5 454.5,544.5 454.5,543.5 454.5,541.5 453.5,540.5 453.5,539.5 453.5,538.5 453.5,536.5 452.5,535.5 452.5,534.5 452.5,532.5 451.5,531.5 451.5,530.5 451.5,529.5 450.5,527.5 450.5,526.5 450.5,525.5 449.5,523.5 449.5,522.5 449.5,520.5 448.5,519.5 448.5,518.5 448.5,516.5 447.5,515.5 447.5,513.5 446.5,512.5 446.5,511.5 446.5,509.5 445.5,508.5 445.5,506.5 445.5,505.5 444.5,503.5 444.5,502.5 443.5,500.5 443.5,499.5 443.5,497.5 442.5,496.5 442.5,494.5 441.5,492.5 441.5,491.5 440.5,489.5 440.5,488.5 440.5,486.5 439.5,484.5 439.5,483.5 438.5,481.5 438.5,479.5 437.5,478.5 437.5,476.5 436.5,474.5 436.5,473.5 435.5,471.5 435.5,469.5 435.5,467.5 434.5,466.5 434.5,464.5 433.5,462.5 433.5,460.5 432.5,458.5 432.5,457.5 431.5,455.5 431.5,453.5 430.5,451.5 430.5,449.5 429.5,447.5 429.5,445.5 428.5,443.5 428.5,441.5 427.5,439.5 427.5,437.5 426.5,435.5 426.5,433.5 425.5,431.5 425.5,429.5 424.5,426.5 424.5,424.5 423.5,422.5 423.5,420.5 422.5,418.5 422.5,415.5 421.5,413.5 421.5,411.5 420.5,409.5 420.5,406.5 419.5,404.5 419.5,401.5 418.5,399.5 418.5,396.5 417.5,394.5 417.5,391.5 416.5,389.5 416.5,386.5 416.5,384.5 415.5,381.5 415.5,378.5 414.5,376.5 414.5,373.5 414.5,370.5 413.5,367.5 413.5,364.5 413.5,362.5 412.5,359.5 412.5,356.5 412.5,353.5 411.5,350.5 411.5,347.5 411.5,343.5 411.5,340.5 410.5,337.5 410.5,334.5 410.5,331.5 410.5,327.5 410.5,324.5 409.5,321.5 409.5,317.5 409.5,314.5 409.5,310.5 409.5,306.5 409.5,303.5 409.5,299.5 409.5,295.5 409.5,292.5 409.5,288.5 409.5,284.5 409.5,280.5 409.5,276.5 409.5,272.5 409.5,268.5 409.5,264.5 409.5,259.5 410.5,255.5 410.5,251.5 410.5,246.5 410.5,242.5 411.5,237.5 411.5,232.5 412.5,228.5 412.5,223.5 413.5,218.5 413.5,213.5 414.5,207.5 415.5,202.5 415.5,197.5 416.5,191.5 417.5,186.5 418.5,180.5 419.5,174.5 420.5,168.5 422.5,162.5 423.5,156.5 424.5,149.5 426.5,143.5 427.5,136.5 429.5,129.5 431.5,122.5 433.5,115.5 435.5,108.5 437.5,100.5 439.5,92.5 442.5,84.5 444.5,76.5 447.5,67.5 450.5,59.5 453.5,50.5" fill="none" stroke="#00008b" stroke-width="1" />
<polyline points="540.5,748.5 540.5,747.5 540.5,746.5 540.5,745.5 540.5,744.5 540.5,743.5 540.5,742.5 540.5,741.5 540.5,740.5 541.5,740.5 541.5,739.5 541.5,738.5 541.5,737.5 541.5,736.5 541.5,735.5 541.5,734.5 541.5,733.5 541.5,732.5 541.5,731.5 541.5,730.5 541.5,729.5 541.5,728.5 541.5,727.5 541.5,726.5 541.5,725.5 542.5,724.5 542.5,723.5 542.5,722.5 542.5,721.5 542.5,720.5 542.5,719.5 542.5,718.5 542.5,717.5 542.5,716.5 542.5,715.5 542.5,714.5 542.5,713.5 542.5,712.5 543.5,712.5 543.5,711.5 543.5,710.5 543.5,709.5 543.5,708.5 543.5,707.5 543.5,706.5 543.5,705.5 543.5,704.5 543.5,703.5 543.5,702.5 543.5,701.5 543.5,700.5 544.5,700.5 544.5,699.5 544.5,698.5 544.5,697.5 544.5,696.5 544.5,695.5 544.5,694.5 544.5,693.5 544.5,692.5 544.5,691.5 544.5,690.5 545.5,690.5 545.5,689.5 545.5,688.5 545.5,687.5 545.5,686.5 545.5,685.5 545.5,684.5 545.5,683.5 545.5,682.5 545.5,681.5 546.5,681.5 546.5,680.5 546.5,679.5 546.5,678.5 546.5,677.5 546.5,676.5 546.5,675.5 546.5,674.5 546.5,673.5 547.5,672.5 547.5,671.5 547.5,670.5 547.5,669.5 547.5,668.5 547.5,667.5 547.5,666.5 547.5,665.5 548.5,664.5 548.5,663.5 548.5,662.5 548.5,661.5 548.5,660.5 548.5,659.5 548.5,658.5 549.5,657.5 549.5,656.5 549.5,655.5 549.5,654.5 549.5,653.5 549.5,652.5 549.5,651.5 549.5,650.5 550.5,649.5 550.5,648.5 550.5,647.5 550.5,646.5 550.5,645.5 550.5,644.5 550.5,643.5 550.5,642.5 551.5,642.5 551.5,641.5 551.5,640.5 551.5,639.5 551.5,638.5 551.5,637.5 551.5,636.5 552.5,635.5 552.5,634.5 552.5,633.5 552.5,632.5 552.5,631.5 552.5,630.5 552.5,629.5 553.5,628.5 553.5,627.5 553.5,626.5 553.5,625.5 553.5,624.5 553.5,623.5 553.5,622.5 554.5,621.5 554.5,620.5 554.5,619.5 554.5,618.5 554.5,617.5 554.5,616.5 554.5,615.5 555.5,614.5 555.5,613.5 555.5,612.5 555.5,611.5 555.5,610.5 555.5,609.5 555.5,608.5 556.5,607.5 556.5,606.5 556.5,605.5 556.5,604.5 556.5,603.5 556.5,602.5 557.5,601.5 557.5,600.5 557.5,599.5 557.5,598.5 557.5,597.5 557.5,596.5 557.5,595.5 558.5,594.5 558.5,593.5 558.5,592.5 558.5,591.5 558.5,590.5 558.5,589.5 558.5,588.5 559.5,587.5 559.5,586.5 559.5,585.5 559.5,584.5 559.5,583.5 559.5,581.5 560.5,580.5 560.5,579.5 560.5,578.5 560.5,577.5 560.5,576.5 560.5,575.5 560.5,574.5 561.5,573.5 561.5,572.5 561.5,571.5 561.5,570.5 561.5,569.5 561.5,568.5 562.5,567.5 562.5,566.5 562.5,565.5 562.5,564.5 562.5,562.5 562.5,561.5 563.5,560.5 563.5,559.5 563.5,558.5 563.5,557.5 563.5,556.5 563.5,554.5 564.5,553.5 564.5,552.5 564.5,551.5 564.5,550.5 564.5,549.5 564.5,547.5 565.5,546.5 565.5,545.5 565.5,544.5 565.5,543.5 565.5,541.5 565.5,540.5 566.5,539.5 566.5,538.5 566.5,536.5 566.5,535.5 566.5,534.5 566.5,532.5 567.5,531.5 567.5,530.5 567.5,529.5 567.5,527.5 567.5,526.5 568.5,525.5 568.5,523.5 568.5,522.5 568.5,520.5 568.5,519.5 568.5,518.5 569.5,516.5 569.5,515.5 569.5,513.5 569.5,512.5 569.5,511.5 570.5,509.5 570.5,508.5 570.5,506.5 570.5,505.5 570.5,503.5 570.5,502.5 571.5,500.5 571.5,499.5 571.5,497.5 571.5,496.5 571.5,494.5 572.5,492.5 572.5,491.5 572.5,489.5 572.5,488.5 572.5,486.5 573.5,484.5 573.5,483.5 573.5,481.5 573.5,479.5 573.5,478.5 573.5,476.5 574.5,474.5 574.5,473.5 574.5,471.5 574.5,469.5 574.5,467.5 575.5,466.5 575.5,464.5 575.5,462.5 575.5,460.5 575.5,458.5 575.5,457.5 576.5,455.5 576.5,453.5 576.5,451.5 576.5,449.5 576.5,447.5 576.5,445.5 577.5,443.5 577.5,441.5 577.5,439.5 577.5,437.5 577.5,435.5 577.5,433.5 578.5,431.5 578.5,429.5 578.5,426.5 578.5,424.5 578.5,422.5 578.5,420.5 579.5,418.5 579.5,415.5 579.5,413.5 579.5,411.5 579.5,409.5 579.5,406.5 579.5,404.5 580.5,401.5 580.5,399.5 580.5,396.5 580.5,394.5 580.5,391.5 580.5,389.5 581.5,386.5 581.5,384.5 581.5,381.5 581.5,378.5 581.5,376.5 581.5,373.5 581.5,370.5 582.5,367.5 582.5,364.5 582.5,362.5 582.5,359.5 582.5,356.5 582.5,353.5 582.5,350.5 582.5,347.5 583.5,343.5 583.5,340.5 583.5,337.5 583.5,334.5 583.5,331.5 583.5,327.5 583.5,324.5 583.5,321.5 583.5,317.5 583.5,314.5 583.5,310.5 583.5,306.5 583.5,303.5 583.5,299.5 583.5,295.5 584.5,292.5 584.5,288.5 584.5,284.5 584.5,280.5 584.5,276.5 584.5,272.5 584.5,268.5 584.5,264.5 584.5,259.5 584.5,255.5 584.5,251.5 584.5,246.5 584.5,242.5 584.5,237.5 584.5,232.5 585.5,228.5 585.5,223.5 585.5,218.5 585.5,213.5 585.5,207.5 586.5,202.5 586.5,197.5 586.5,191.5 587.5,186.5 587.5,180.5 588.5,174.5 588.5,168.5 589.5,162.5 590.5,156.5 590.5,149.5 591.5,143.5 592.5,136.5 593.5,129.5 594.5,122.5 596.5,115.5 597.5,108.5 598.5,100.5 600.5,92.5 602.5,84.5 603.5,76.5 605.5,67.5 607.5,59.5 610.5,50.5" fill="none" stroke="#00008b" stroke-width="1" />
<polyline points="599.5,748.5 599.5,747.5 600.5,746.5 600.5,745.5 600.5,744.5 600.5,743.5 600.5,742.5 600.5,741.5 600.5,740.5 601.5,740.5 601.5,739.5 601.5,738.5 601.5,737.5 601.5,736.5 601.5,735.5 601.5,734.5 602.5,733.5 602.5,732.5 602.5,731.5 602.5,730.5 602.5,729.5 602.5,728.5 603.5,728.5 603.5,727.5 603.5,726.5 603.5,725.5 603.5,724.5 603.5,723.5 604.5,722.5 604.5,721.5 604.5,720.5 604.5,719.5 604.5,718.5 605.5,717.5 605.5,716.5 605.5,715.5 605.5,714.5 605.5,713.5 605.5,712.5 606.5,712.5 606.5,711.5 606.5,710.5 606.5,709.5 606.5,708.5 606.5,707.5 607.5,707.5 607.5,706.5 607.5,705.5 607.5,704.5 607.5,703.5 607.5,702.5 608.5,702.5 608.5,701.5 608.5,700.5 608.5,699.5 608.5,698.5 609.5,697.5 609.5,696.5 609.5,695.5 609.5,694.5 609.5,693.5 610.5,692.5 610.5,691.5 610.5,690.5 610.5,689.5 611.5,688.5 611.5,687.5 611.5,686.5 611.5,685.5 611.5,684.5 612.5,684.5 612.5,683.5 612.5,682.5 612.5,681.5 612.5,680.5 613.5,679.5 613.5,678.5 613.5,677.5 613.5,676.5 614.5,675.5 614.5,674.5 614.5,673.5 614.5,672.5 615.5,672.5 615.5,671.5 615.5,670.5 615.5,669.5 615.5,668.5 616.5,667.5 616.5,666.5 616.5,665.5 616.5,664.5 617.5,664.5 617.5,663.5 617.5,662.5 617.5,661.5 617.5,660.5 618.5,660.5 618.5,659.5 618.5,658.5 618.5,657.5 619.5,656.5 619.5,655.5 619.5,654.5 619.5,653.5 620.5,652.5 620.5,651.5 620.5,650.5 620.5,649.5 621.5,649.5 621.5,648.5 621.5,647.5 621.5,646.5 622.5,645.5 622.5,644.5 622.5,643.5 622.5,642.5 623.5,642.5 623.5,641.5 623.5,640.5 623.5,639.5 624.5,638.5 624.5,637.5 624.5,636.5 625.5,635.5 625.5,634.5 625.5,633.5 625.5,632.5 626.5,631.5 626.5,630.5 626.5,629.5 627.5,628.5 627.5,627.5 627.5,626.5 628.5,625.5 628.5,624.5 628.5,623.5 628.5,622.5 629.5,621.5 629.5,620.5 629.5,619.5 629.5,618.5 630.5,617.5 630.5,616.5 631.5,615.5 631.5,614.5 631.5,613.5 631.5,612.5 632.5,611.5 632.5,610.5 632.5,609.5 633.5,608.5 633.5,607.5 633.5,606.5 633.5,605.5 634.5,604.5 634.5,603.5 635.5,602.5 635.5,601.5 635.5,600.5 636.5,599.5 636.5,598.5 636.5,597.5 636.5,596.5 637.5,595.5 637.5,594.5 637.5,593.5 638.5,592.5 638.5,591.5 638.5,590.5 639.5,589.5 639.5,588.5 639.5,587.5 640.5,586.5 640.5,585.5 641.5,584.5 641.5,583.5 641.5,581.5 642.5,580.5 642.5,579.5 642.5,578.5 643.5,577.5 643.5,576.5 643.5,575.5 644.5,574.5 644.5,573.5 644.5,572.5 645.5,571.5 645.5,570.5 645.5,569.5 646.5,568.5 646.5,567.5 646.5,566.5 647.5,565.5 647.5,564.5 648.5,562.5 648.5,561.5 648.5,560.5 649.5,559.5 649.5,558.5 650.5,557.5 650.5,556.5 650.5,554.5 651.5,553.5 651.5,552.5 652.5,551.5 652.5,550.5 652.5,549.5 653.5,547.5 653.5,546.5 654.5,545.5 654.5,544.5 655.5,543.5 655.5,541.5 655.5,540.5 656.5,539.5 656.5,538.5 657.5,536.5 657.5,535.5 658.5,534.5 658.5,532.5 659.5,531.5 659.5,530.5 660.5,529.5 660.5,527.5 660.5,526.5" fill="none" stroke="#00008b" stroke-width="1" />
<polyline points="659.5,748.5 659.5,747.5 659.5,746.5 659.5,745.5 660.5,744.5 660.5,743.5 660.5,742.5 660.5,741.5 660.5,740.5 661.5,740.5" fill="none" stroke="#00008b" stroke-width="1" />
<line x1="-667.5" y1="749.5" x2="32.0" y2="50" stroke="#fff" stroke-width="1" />
<line x1="-607.5" y1="749.5" x2="92.0" y2="50" stroke="#fff" stroke-width="1" />
<line x1="-547.5" y1="749.5" x2="152.0" y2="50" stroke="#fff" stroke-width="1" />
<line x1="-487.5" y1="749.5" x2="212.0" y2="50" stroke="#fff" stroke-width="1" />
<line x1="-427.5" y1="749.5" x2="272.0" y2="50" stroke="#fff" stroke-width="1" />
<line x1="-367.5" y1="749.5" x2="332.0" y2="50" stroke="#fff" stroke-width="1" />
<line x1="-307.5" y1="749.5" x2="392.0" y2="50" stroke="#fff" stroke-width="1" />
<line x1="-247.5" y1="749.5" x2="452.0" y2="50" stroke="#fff" stroke-width="1" />
<line x1="-187.5" y1="749.5" x2="512.0" y2="50" stroke="#fff" stroke-width="1" />
<line x1="-127.5" y1="749.5" x2="572.0" y2="50" stroke="#fff" stroke-width="1" />
<line x1="-67.5" y1="749.5" x2="632.0" y2="50" stroke="#fff" stroke-width="1" />
<line x1="-7.5" y1="749.5" x2="692.0" y2="50" stroke="#fff" stroke-width="1" />
<line x1="52.5" y1="749.5" x2="752.0" y2="50" stroke="#fff" stroke-width="1" />
<line x1="112.5" y1="749.5" x2="812.0" y2="50" stroke="#fff" stroke-width="1" />
<line x1="172.5" y1="749.5" x2="872.0" y2="50" stroke="#fff" stroke-width="1" />
<line x1="232.5" y1="749.5" x2="932.0" y2="50" stroke="#fff" stroke-width="1" />
<line x1="292.5" y1="749.5" x2="992.0" y2="50" stroke="#fff" stroke-width="1" />
<line x1="352.5" y1="749.5" x2="1052.0" y2="50" stroke="#fff" stroke-width="1" />
<line x1="412.5" y1="749.5" x2="1112.0" y2="50" stroke="#fff" stroke-width="1" />
<line x1="472.5" y1="749.5" x2="1172.0" y2="50" stroke="#fff" stroke-width="1" />
<line x1="532.5" y1="749.5" x2="1232.0" y2="50" stroke="#fff" stroke-width="1" />
<line x1="592.5" y1="749.5" x2="1292.0" y2="50" stroke="#fff" stroke-width="1" />
<line x1="652.5" y1="749.5" x2="1352.0" y2="50" stroke="#fff" stroke-width="1" />
<line x1="61" y1="50.5" x2="662" y2="50.5" stroke="#fff" stroke-width="1" />
<line x1="61" y1="321.5" x2="662" y2="321.5" stroke="#fff" stroke-width="1" />
<line x1="61" y1="449.5" x2="662" y2="449.5" stroke="#fff" stroke-width="1" />
<line x1="61" y1="529.5" x2="662" y2="529.5" stroke="#fff" stroke-width="1" />
<line x1="61" y1="586.5" x2="662" y2="586.5" stroke="#fff" stroke-width="1" />
<line x1="61" y1="630.5" x2="662" y2="630.5" stroke="#fff" stroke-width="1" />
<line x1="61" y1="665.5" x2="662" y2="665.5" stroke="#fff" stroke-width="1" />
<line x1="61" y1="694.5" x2="662" y2="694.5" stroke="#fff" stroke-width="1" />
<line x1="61" y1="719.5" x2="662" y2="719.5" stroke="#fff" stroke-width="1" />
<line x1="61" y1="740.5" x2="662" y2="740.5" stroke="#fff" stroke-width="1" />
</g>
<line x1="56" y1="50.5" x2="61" y2="50.5" stroke="#fff" stroke-width="1" />
<line x1="661" y1="50.5" x2="667" y2="50.5" stroke="#fff" stroke-width="1" />
<line x1="56" y1="321.5" x2="61" y2="321.5" stroke="#fff" stroke-width="1" />
<line x1="661" y1="321.5" x2="667" y2="321.5" stroke="#fff" stroke-width="1" />
<line x1="56" y1="449.5" x2="61" y2="449.5" stroke="#fff" stroke-width="1" />
<line x1="661" y1="449.5" x2="667" y2="449.5" stroke="#fff" stroke-width="1" />
<line x1="56" y1="529.5" x2="61" y2="529.5" stroke="#fff" stroke-width="1" />
<line x1="661" y1="529.5" x2="667" y2="529.5" stroke="#fff" stroke-width="1" />
<line x1="56" y1="586.5" x2="61" y2="586.5" stroke="#fff" stroke-width="1" />
<line x1="661" y1="586.5" x2="667" y2="586.5" stroke="#fff" stroke-width="1" />
<line x1="56" y1="630.5" x2="61" y2="630.5" stroke="#fff" stroke-width="1" />
<line x1="661" y1="630.5" x2="667" y2="630.5" stroke="#fff" stroke-width="1" />
<line x1="56" y1="665.5" x2="61" y2="665.5" stroke="#fff" stroke-width="1" />
<line x1="661" y1="665.5" x2="667" y2="665.5" stroke="#fff" stroke-width="1" />
<line x1="56" y1="694.5" x2="61" y2="694.5" stroke="#fff" stroke-width="1" />
<line x1="661" y1="694.5" x2="667" y2="694.5" stroke="#fff" stroke-width="1" />
<line x1="56" y1="719.5" x2="61" y2="719.5" stroke="#fff" stroke-width="1" />
<line x1="661" y1="719.5" x2="667" y2="719.5" stroke="#fff" stroke-width="1" />
<line x1="56" y1="740.5" x2="61" y2="740.5" stroke="#fff" stroke-width="1" />
<rect x="61.5" y="50.5" width="600" height="699" fill="none" stroke="#fff"/>
<g clip-path="url(#cf)">
<line x1="61" y1="724.5" x2="626" y2="724.5" stroke="#ff00ff" stroke-width="1" />
<path d="M565.0 51.5H570.0M567.5 49.0V54.0M266.0 218.5H271.0M268.5 216.0V221.0M407.0 218.5H412.0M409.5 216.0V221.0M427.0 218.5H432.0M429.5 216.0V221.0M545.0 218.5H550.0M547.5 216.0V221.0M325.0 394.5H330.0M327.5 392.0V397.0M406.0 394.5H411.0M408.5 392.0V397.0M419.0 394.5H424.0M421.5 392.0V397.0M455.0 394.5H460.0M457.5 392.0V397.0M273.0 493.5H278.0M275.5 491.0V496.0M395.0 493.5H400.0M397.5 491.0V496.0M432.0 493.5H437.0M434.5 491.0V496.0M267.0 560.5H272.0M269.5 558.0V563.0M401.0 560.5H406.0M403.5 558.0V563.0M425.0 560.5H430.0M427.5 558.0V563.0M435.0 560.5H440.0M437.5 558.0V563.0M232.0 586.5H237.0M234.5 584.0V589.0M365.0 586.5H370.0M367.5 584.0V589.0M204.0 610.5H209.0M206.5 608.0V613.0M329.0 610.5H334.0M331.5 608.0V613.0M421.0 610.5H426.0M423.5 608.0V613.0M443.0 610.5H448.0M445.5 608.0V613.0M195.0 630.5H200.0M197.5 628.0V633.0M305.0 630.5H310.0M307.5 628.0V633.0M462.0 630.5H467.0M464.5 628.0V633.0M181.0 648.5H186.0M183.5 646.0V651.0M275.0 648.5H280.0M277.5 646.0V651.0M433.0 648.5H438.0M435.5 646.0V651.0M465.0 648.5H470.0M467.5 646.0V651.0M125.0 665.5H130.0M127.5 663.0V668.0M245.0 665.5H250.0M247.5 663.0V668.0M324.0 665.5H329.0M326.5 663.0V668.0M163.0 665.5H168.0M165.5 663.0V668.0M64.0 670.5H69.0M66.5 668.0V673.0M126.0 670.5H131.0M128.5 668.0V673.0M148.0 670.5H153.0M150.5 668.0V673.0M221.0 670.5H226.0M223.5 668.0V673.0M304.0 670.5H309.0M306.5 668.0V673.0M461.0 670.5H466.0M463.5 668.0V673.0M479.0 670.5H484.0M481.5 668.0V673.0M74.0 683.5H79.0M76.5 681.0V686.0M138.0 683.5H143.0M140.5 681.0V686.0M177.0 683.5H182.0M179.5 681.0V686.0M267.0 683.5H272.0M269.5 681.0V686.0M471.0 683.5H476.0M473.5 681.0V686.0M480.0 683.5H485.0M482.5 681.0V686.0M71.0 694.5H76.0M73.5 692.0V697.0M136.0 694.5H141.0M138.5 692.0V697.0M226.0 694.5H231.0M228.5 692.0V697.0M241.0 694.5H246.0M243.5 692.0V697.0M478.0 694.5H483.0M480.5 692.0V697.0M482.0 694.5H487.0M484.5 692.0V697.0M82.0 706.5H87.0M84.5 704.0V709.0M119.0 706.5H124.0M121.5 704.0V709.0M149.0 706.5H154.0M151.5 704.0V709.0M212.0 706.5H217.0M214.5 704.0V709.0M231.0 706.5H236.0M233.5 704.0V709.0M476.0 706.5H481.0M478.5 704.0V709.0M484.0 706.5H489.0M486.5 704.0V709.0M92.0 713.5H97.0M94.5 711.0V716.0M107.0 713.5H112.0M109.5 711.0V716.0M161.0 713.5H166.0M163.5 711.0V716.0M194.0 713.5H199.0M196.5 711.0V716.0M223.0 713.5H228.0M225.5 711.0V716.0M475.0 713.5H480.0M477.5 711.0V716.0M488.0 713.5H493.0M490.5 711.0V716.0M105.0 719.5H110.0M107.5 717.0V722.0M89.0 719.5H94.0M91.5 717.0V722.0M180.0 719.5H185.0M182.5 717.0V722.0M490.0 719.5H495.0M492.5 717.0V722.0M476.0 719.5H481.0M478.5 717.0V722.0M121.0 727.5H126.0M123.5 725.0V730.0M71.0 727.5H76.0M73.5 725.0V730.0M200.0 727.5H205.0M202.5 725.0V730.0M230.0 727.5H235.0M232.5 725.0V730.0M200.0 727.5H205.0M202.5 725.0V730.0M106.0 730.5H111.0M108.5 728.0V733.0M77.0 730.5H82.0M79.5 728.0V733.0M219.0 730.5H224.0M221.5 728.0V733.0M207.0 730.5H212.0M209.5 728.0V733.0M261.0 730.5H266.0M263.5 728.0V733.0M479.0 730.5H484.0M481.5 728.0V733.0M488.0 730.5H493.0M490.5 728.0V733.0M110.0 734.5H115.0M112.5 732.0V737.0M83.0 734.5H88.0M85.5 732.0V737.0M232.0 734.5H237.0M234.5 732.0V737.0M226.0 734.5H231.0M228.5 732.0V737.0M209.0 734.5H214.0M211.5 732.0V737.0M270.0 734.5H275.0M272.5 732.0V737.0M264.0 734.5H269.0M266.5 732.0V737.0M481.0 734.5H486.0M483.5 732.0V737.0M487.0 734.5H492.0M489.5 732.0V737.0" stroke="#fff" fill="none"/>
<path d="M62 648.5h1m0 1h4m0 1h4m0 1h4m0 1h4m0 1h4m0 1h4m0 1h4m0 1h3m0 1h4m0 1h4m0 1h4m0 1h4m0 1h4m0 1h4m0 1h4m0 1h4m-5 1h7m-19 1h12m-24 1h12m-24 1h12m-24 1h12m-19 1h7m-6 1h1m0 1h1m-1 1h1m0 1h1m0 1h1m0 1h1m-1 1h1m0 1h1m0 1h1m0 1h1m-1 1h1m0 1h1m0 1h1m-1 1h1m-2 1h1m-1 1h1m-1 1h1m-1 1h1m-2 1h1m-1 1h1m-1 1h1m-1 1h1m-2 1h1m-1 1h1m-1 1h1m0 1h1m0 1h1m0 1h1m0 1h1m0 1h1m0 1h1m0 1h1m0 1h1m0 1h1m0 1h1m0 1h1m0 1h2m0 1h1m0 1h1m0 1h2m0 1h1m0 1h2m0 1h2m0 1h2m0 1h2m0 1h2m0 1h2m0 1h2m0 1h2m0 1h2m0 1h2m0 1h2m0 1h2m0 1h2m0 1h2m0 1h2m-1 1h3m-8 1h5m-10 1h5m-8 1h3m-4 1h1m-1 1h1m-2 1h3m0 1h4" stroke="#e07000" fill="none"/>
<path d="M62 651.5h1m-1 1h1m0 1h1m-1 1h1m-1 1h1m0 1h1m-1 1h1m0 1h1m-1 1h1m0 1h1m-1 1h1m-1 1h1m0 1h1m-1 1h1m0 1h1m-1 1h8m0 1h15m0 1h15m0 1h15m0 1h9m0 1h4m0 1h4m0 1h4m0 1h4m0 1h4m0 1h4m0 1h4m0 1h4m0 1h4m0 1h4m0 1h4m0 1h4m0 1h4m0 1h6m0 1h6m0 1h6m0 1h6m0 1h6m0 1h5m0 1h6m0 1h6m0 1h6m0 1h6m0 1h3m-2 1h1m-2 1h1m-1 1h1m-2 1h1m-2 1h1m-2 1h1m-2 1h1m-2 1h1m-1 1h1m-2 1h1m-2 1h1m-2 1h1m-2 1h1m-2 1h1m-3 1h2m-3 1h1m-2 1h1m-2 1h1m-2 1h1m-1 1h1m-1 1h1m-1 1h1m-1 1h1m-1 1h1m-1 1h1m-1 1h1m-1 1h1m0 1h1m0 1h1m0 1h2m0 1h1m0 1h1m0 1h6m0 1h10m0 1h10m0 1h7m0 1h3m0 1h3m0 1h2" stroke="#ffff00" fill="none"/>
<path d="M336 659.5h1m-3 1h2m-4 1h2m-3 1h1m-3 1h2m-4 1h2m-4 1h2m-6 1h4m-8 1h4m-8 1h4m-8 1h4m-8 1h4m-7 1h3m-6 1h3m-5 1h2m-5 1h3m-6 1h3m-6 1h3m-6 1h3m-6 1h3m-6 1h3m-5 1h2m-5 1h3m-6 1h3m-6 1h3m-7 1h4m-8 1h4m-8 1h4m-7 1h3m-7 1h4m-8 1h4m-7 1h3m-7 1h4m-8 1h4m-8 1h4m-6 1h2m-3 1h1m-2 1h1m-3 1h2m-3 1h1m-2 1h1m-2 1h1m-2 1h1m-2 1h1m-3 1h2m-3 1h1m-2 1h1m-3 1h2m-4 1h2m-5 1h3m-5 1h2m-5 1h3m-6 1h3m-5 1h2m-4 1h2m-1 1h1m-1 1h1m0 1h1m-1 1h1m0 1h1m-1 1h1m0 1h1m-1 1h1m-1 1h1m0 1h1m-1 1h1m-1 1h1m0 1h1m-1 1h1m0 1h2m0 1h2m0 1h2m0 1h1m0 1h1m-1 1h1m0 1h1" stroke="#c0c000" fill="none"/>
<path d="M277 51.5h1m0 1h1m0 1h1m-1 1h1m0 1h1m0 1h1m0 1h1m0 1h1m-1 1h1m0 1h1m0 1h1m0 1h1m-1 1h1m0 1h1m0 1h1m0 1h1m0 1h1m-1 1h1m0 1h1m0 1h1m0 1h1m0 1h1m-1 1h1m0 1h1m0 1h1m0 1h1m0 1h1m-1 1h1m0 1h1m0 1h1m0 1h1m0 1h1m-1 1h1m0 1h1m0 1h1m0 1h1m-1 1h1m0 1h1m0 1h1m0 1h1m0 1h1m-1 1h1m0 1h1m0 1h1m0 1h1m0 1h1m-1 1h1m0 1h1m0 1h1m0 1h1m0 1h1m-1 1h1m0 1h1m0 1h1m0 1h1m-1 1h1m0 1h1m0 1h1m0 1h1m0 1h1m-1 1h1m0 1h1m0 1h1m0 1h1m0 1h1m-1 1h1m0 1h1m0 1h1m0 1h1m0 1h1m-1 1h1m0 1h1m0 1h1m0 1h1m-1 1h1m0 1h1m0 1h1m0 1h1m0 1h1m-1 1h1m0 1h1m0 1h1m0 1h1m0 1h1m-1 1h1m0 1h1m0 1h1m0 1h1m0 1h1m-1 1h1m0 1h1m0 1h1m0 1h1m0 1h1m-1 1h1m0 1h1m0 1h1m0 1h1m-1 1h1m0 1h1m0 1h1m0 1h1m0 1h1m-1 1h1m0 1h1m0 1h1m0 1h1m0 1h1m-1 1h1m0 1h1m0 1h1m0 1h1m0 1h1m-1 1h1m0 1h1m0 1h1m0 1h1m-1 1h1m0 1h1m0 1h1m0 1h1m0 1h1m-1 1h1m0 1h1m0 1h1m0 1h1m0 1h1m-1 1h1m0 1h1m0 1h1m0 1h1m0 1h1m-1 1h1m0 1h1m0 1h1m0 1h1m-1 1h1m0 1h1m0 1h1m0 1h1m0 1h1m-1 1h1m0 1h1m0 1h1m0 1h1m0 1h1m-1 1h1m0 1h1m0 1h1m0 1h1m0 1h1m-1 1h1m0 1h1m0 1h1m0 1h1m0 1h1m-1 1h1m0 1h1m0 1h1m0 1h1m-1 1h1m0 1h1m0 1h1m0 1h1m0 1h1m-1 1h1m0 1h1m0 1h1m-1 1h1m-1 1h1m0 1h1m-1 1h1m-1 1h1m-1 1h1m0 1h1m-1 1h1m-1 1h1m-1 1h1m0 1h1m-1 1h1m-1 1h1m-1 1h1m0 1h1m-1 1h1m-1 1h1m-1 1h1m-1 1h1m0 1h1m-1 1h1m-1 1h1m-1 1h1m0 1h1m-1 1h1m-1 1h1m-1 1h1m0 1h1m-1 1h1m-1 1h1m-1 1h1m-1 1h1m0 1h1m-1 1h1m-1 1h1m-1 1h1m0 1h1m-1 1h1m-1 1h1m-1 1h1m0 1h1m-1 1h1m-1 1h1m-1 1h1m0 1h1m-1 1h1m-1 1h1m-1 1h1m-1 1h1m0 1h1m-1 1h1m-1 1h1m-1 1h1m0 1h1m-1 1h1m-1 1h1m-1 1h1m0 1h1m-1 1h1m-1 1h1m-1 1h1m-1 1h1m0 1h1m-1 1h1m-1 1h1m-1 1h1m-1 1h1m0 1h1m-1 1h1m-1 1h1m-1 1h1m0 1h1m-1 1h1m-1 1h1m-1 1h1m-1 1h1m0 1h1m-1 1h1m-1 1h1m-1 1h1m-1 1h1m0 1h1m-1 1h1m-1 1h1m-1 1h1m-1 1h1m0 1h1m-1 1h1m-1 1h1m-1 1h1m-1 1h1m0 1h1m-1 1h1m-1 1h1m-1 1h1m0 1h1m-1 1h1m-1 1h1m-1 1h1m-1 1h1m0 1h1m-1 1h1m-1 1h1m-1 1h1m0 1h1m-1 1h1m-1 1h1m0 1h1m-1 1h1m-1 1h1m0 1h1m-1 1h1m-1 1h1m0 1h1m-1 1h1m-1 1h1m0 1h1m-1 1h1m-1 1h1m0 1h1m-1 1h1m0 1h1m-1 1h1m-1 1h1m0 1h1m-1 1h1m-1 1h1m0 1h1m-1 1h1m-1 1h1m0 1h1m-1 1h1m-1 1h1m0 1h1m-1 1h1m-1 1h1m0 1h1m-1 1h1m-1 1h1m0 1h1m-1 1h1m-1 1h1m0 1h1m-1 1h1m-1 1h1m0 1h1m-1 1h1m-1 1h1m0 1h1m-1 1h1m-1 1h1m0 1h1m-1 1h1m-1 1h1m0 1h1m-1 1h1m-1 1h1m0 1h1m-1 1h1m0 1h1m-1 1h1m-1 1h1m0 1h1m-1 1h1m-1 1h1m0 1h1m-1 1h1m-1 1h1m0 1h1m-1 1h1m-1 1h1m0 1h1m-1 1h1m-1 1h1m0 1h1m-1 1h1m-2 1h1m-2 1h1m-1 1h1m-2 1h1m-2 1h1m-2 1h1m-1 1h1m-2 1h1m-2 1h1m-2 1h1m-1 1h1m-2 1h1m-2 1h1m-2 1h1m-1 1h1m-2 1h1m-2 1h1m-2 1h1m-2 1h1m-1 1h1m-2 1h1m-2 1h1m-2 1h1m-1 1h1m-2 1h1m-2 1h1m-2 1h1m-1 1h1m-2 1h1m-2 1h1m-2 1h1m-1 1h1m-2 1h1m-2 1h1m-2 1h1m-1 1h1m-2 1h1m-2 1h1m-2 1h1m-2 1h1m-1 1h1m-2 1h1m-2 1h1m-2 1h1m-1 1h1m-2 1h1m-2 1h1m-2 1h1m-1 1h1m-2 1h1m-2 1h1m-2 1h1m-1 1h1m-2 1h1m-2 1h1m-1 1h1m-2 1h1m-1 1h1m-2 1h1m-1 1h1m-1 1h1m-2 1h1m-1 1h1m-2 1h1m-1 1h1m-2 1h1m-1 1h1m-1 1h1m-2 1h1m-1 1h1m-2 1h1m-1 1h1m-1 1h1m-2 1h1m-1 1h1m-2 1h1m-1 1h1m-1 1h1m-2 1h1m-1 1h1m-2 1h1m-1 1h1m-1 1h1m-2 1h1m-1 1h1m-2 1h1m-1 1h1m-2 1h1m-1 1h1m-1 1h1m-2 1h1m-1 1h1m-2 1h1m-1 1h1m-1 1h1m-2 1h1m-1 1h1m-2 1h1m-1 1h1m-1 1h1m-1 1h1m-2 1h1m-1 1h1m-1 1h1m-1 1h1m-1 1h1m-1 1h1m-2 1h1m-1 1h1m-1 1h1m-1 1h1m-1 1h1m-1 1h1m-2 1h1m-1 1h1m-1 1h1m-1 1h1m-1 1h1m-1 1h1m-2 1h1m-1 1h1m-1 1h1m-1 1h1m-1 1h1m-1 1h1m-2 1h1m-1 1h1m-1 1h1m-1 1h1m-1 1h1m-1 1h1m-2 1h1m-1 1h1m-1 1h1m-1 1h1m-1 1h1m0 1h1m-1 1h1m0 1h1m-1 1h1m-1 1h1m0 1h1m-1 1h1m-1 1h1m0 1h1m-1 1h1m0 1h1m-1 1h1m-1 1h1m0 1h1m-1 1h1m0 1h1m-1 1h1m-1 1h1m0 1h1m-1 1h1m0 1h1m-1 1h1m-1 1h1m0 1h1m-1 1h1m-1 1h1m0 1h1m-1 1h1m0 1h1m-1 1h1m-3 1h2m-3 1h1m-2 1h1m-3 1h2m-3 1h1m-2 1h1m-3 1h2m-3 1h1m-3 1h2m-3 1h1m-2 1h1m-3 1h2m-3 1h1m-3 1h2m-3 1h1m-2 1h1m-3 1h2m-3 1h1m-2 1h1m-3 1h2m-3 1h1m-3 1h2m-3 1h1m-2 1h1m-3 1h2m-3 1h1m-3 1h2m-3 1h1m-3 1h2m-3 1h1m-3 1h2m-3 1h1m-3 1h2m-3 1h1m-3 1h2m-3 1h1m-3 1h2m-3 1h1m-3 1h2m-3 1h1m-3 1h2m-3 1h1m-3 1h2m-3 1h1m-3 1h2m-3 1h1m-3 1h2m-3 1h1m-3 1h2m-3 1h1m-2 1h1m-2 1h1m-3 1h2m-3 1h1m-2 1h1m-2 1h1m-2 1h1m-3 1h2m-3 1h1m-2 1h1m-2 1h1m-2 1h1m-3 1h2m-3 1h1m-2 1h1m-2 1h1m-2 1h1m-3 1h2m-3 1h1m-2 1h1m-3 1h2m-4 1h2m-3 1h1m-3 1h2m-4 1h2m-3 1h1m-3 1h2m-4 1h2m-3 1h1m-3 1h2m-4 1h2m-3 1h1m-3 1h2m-4 1h2m-3 1h1m-3 1h2m-4 1h2m-3 1h1m-3 1h2m-4 1h2m-4 1h2m-3 1h1m-3 1h2m-4 1h2m-4 1h2m-3 1h1m-3 1h2m-4 1h2m-4 1h2m-4 1h2m-3 1h1m-3 1h2m-4 1h2m-4 1h2m-5 1h3m-8 1h5m-9 1h4m-9 1h5m-10 1h5m-9 1h4m-8 1h4m-7 1h3m-6 1h3m-7 1h4m-7 1h3m-6 1h3m-7 1h4m-7 1h3m-7 1h4m-7 1h3m-6 1h3m-7 1h4m-7 1h3m-7 1h4m-8 1h4m-8 1h4m-7 1h3m-7 1h4m-8 1h4m-7 1h3m-7 1h4m-8 1h4m-8 1h4m-6 1h2m-4 1h2m-3 1h1m-2 1h1m-3 1h2m-3 1h1m-3 1h2m-3 1h1m-3 1h2m-3 1h1m-2 1h1m-3 1h2m-3 1h1m-3 1h2m-4 1h2m-3 1h1m-3 1h2m-4 1h2m-4 1h2m-4 1h2m-5 1h3m-6 1h3m-6 1h3m-6 1h3m-6 1h3m-6 1h3m-5 1h2m-4 1h2m-4 1h2m-5 1h3m-5 1h2m-4 1h2m-4 1h2m-4 1h2m-1 1h1m0 1h1m0 1h2m0 1h1m0 1h2m0 1h3m0 1h2" stroke="#00ff00" fill="none"/>
<path d="M207 51.5h1m-1 1h1m0 1h1m-1 1h1m-1 1h1m0 1h1m-1 1h1m0 1h1m-1 1h1m-1 1h1m0 1h1m-1 1h1m-1 1h1m0 1h1m-1 1h1m-1 1h1m0 1h1m-1 1h1m0 1h1m-1 1h1m-1 1h1m0 1h1m-1 1h1m-1 1h1m0 1h1m-1 1h1m-1 1h1m0 1h1m-1 1h1m0 1h1m-1 1h1m-1 1h1m0 1h1m-1 1h1m-1 1h1m0 1h1m-1 1h1m0 1h1m-1 1h1m-1 1h1m0 1h1m-1 1h1m-1 1h1m0 1h1m-1 1h1m-1 1h1m0 1h1m-1 1h1m0 1h1m-1 1h1m-1 1h1m0 1h1m-1 1h1m-1 1h1m0 1h1m-1 1h1m-1 1h1m0 1h1m-1 1h1m0 1h1m-1 1h1m-1 1h1m0 1h1m-1 1h1m-1 1h1m0 1h1m-1 1h1m-1 1h1m0 1h1m-1 1h1m0 1h1m-1 1h1m-1 1h1m0 1h1m-1 1h1m-1 1h1m0 1h1m-1 1h1m-1 1h1m0 1h1m-1 1h1m0 1h1m-1 1h1m-1 1h1m0 1h1m-1 1h1m-1 1h1m0 1h1m-1 1h1m0 1h1m-1 1h1m-1 1h1m0 1h1m-1 1h1m-1 1h1m0 1h1m-1 1h1m-1 1h1m0 1h1m-1 1h1m0 1h1m-1 1h1m-1 1h1m0 1h1m-1 1h1m-1 1h1m0 1h1m-1 1h1m-1 1h1m0 1h1m-1 1h1m0 1h1m-1 1h1m-1 1h1m0 1h1m-1 1h1m-1 1h1m0 1h1m-1 1h1m-1 1h1m0 1h1m-1 1h1m0 1h1m-1 1h1m-1 1h1m0 1h1m-1 1h1m-1 1h1m0 1h1m-1 1h1m-1 1h1m0 1h1m-1 1h1m0 1h1m-1 1h1m-1 1h1m0 1h1m-1 1h1m-1 1h1m0 1h1m-1 1h1m0 1h1m-1 1h1m-1 1h1m0 1h1m-1 1h1m-1 1h1m0 1h1m-1 1h1m-1 1h1m0 1h1m-1 1h1m0 1h1m-1 1h1m-1 1h1m0 1h1m-1 1h1m-1 1h1m0 1h1m-1 1h1m-1 1h1m0 1h1m-1 1h1m0 1h1m-1 1h1m-1 1h1m0 1h1m-1 1h1m-1 1h1m0 1h1m-1 1h1m0 1h1m-1 1h1m0 1h1m-1 1h1m0 1h1m-1 1h1m0 1h1m-1 1h1m-1 1h1m0 1h1m-1 1h1m0 1h1m-1 1h1m0 1h1m-1 1h1m0 1h1m-1 1h1m0 1h1m-1 1h1m-1 1h1m0 1h1m-1 1h1m0 1h1m-1 1h1m0 1h1m-1 1h1m0 1h1m-1 1h1m0 1h1m-1 1h1m0 1h1m-1 1h1m-1 1h1m0 1h1m-1 1h1m0 1h1m-1 1h1m0 1h1m-1 1h1m0 1h1m-1 1h1m0 1h1m-1 1h1m-1 1h1m0 1h1m-1 1h1m0 1h1m-1 1h1m0 1h1m-1 1h1m0 1h1m-1 1h1m0 1h1m-1 1h1m-1 1h1m0 1h1m-1 1h1m0 1h1m-1 1h1m0 1h1m-1 1h1m0 1h1m-1 1h1m0 1h1m-1 1h1m-1 1h1m0 1h1m-1 1h1m0 1h1m-1 1h1m0 1h1m-1 1h1m0 1h1m-1 1h1m0 1h1m-1 1h1m0 1h1m-1 1h1m-1 1h1m0 1h1m-1 1h1m0 1h1m-1 1h1m0 1h1m-1 1h1m0 1h1m-1 1h1m0 1h1m-1 1h1m-1 1h1m0 1h1m-1 1h1m0 1h1m-1 1h1m0 1h1m-1 1h1m0 1h1m-1 1h1m0 1h1m-1 1h1m-1 1h1m-1 1h1m-1 1h1m0 1h1m-1 1h1m-1 1h1m-1 1h1m-1 1h1m-1 1h1m0 1h1m-1 1h1m-1 1h1m-1 1h1m-1 1h1m-1 1h1m0 1h1m-1 1h1m-1 1h1m-1 1h1m-1 1h1m-1 1h1m0 1h1m-1 1h1m-1 1h1m-1 1h1m-1 1h1m-1 1h1m0 1h1m-1 1h1m-1 1h1m-1 1h1m-1 1h1m-1 1h1m0 1h1m-1 1h1m-1 1h1m-1 1h1m-1 1h1m-1 1h1m0 1h1m-1 1h1m-1 1h1m-1 1h1m-1 1h1m-1 1h1m0 1h1m-1 1h1m-1 1h1m-1 1h1m-1 1h1m-1 1h1m0 1h1m-1 1h1m-1 1h1m-1 1h1m-1 1h1m-1 1h1m0 1h1m-1 1h1m-1 1h1m-1 1h1m-1 1h1m-1 1h1m0 1h1m-1 1h1m-1 1h1m-1 1h1m-1 1h1m-1 1h1m0 1h1m-1 1h1m-1 1h1m-1 1h1m-2 1h1m-1 1h1m-2 1h1m-1 1h1m-2 1h1m-1 1h1m-2 1h1m-2 1h1m-1 1h1m-2 1h1m-1 1h1m-2 1h1m-1 1h1m-2 1h1m-1 1h1m-2 1h1m-2 1h1m-1 1h1m-2 1h1m-1 1h1m-2 1h1m-1 1h1m-2 1h1m-2 1h1m-1 1h1m-2 1h1m-1 1h1m-2 1h1m-1 1h1m-2 1h1m-1 1h1m-2 1h1m-2 1h1m-1 1h1m-2 1h1m-1 1h1m-2 1h1m-1 1h1m-2 1h1m-2 1h1m-1 1h1m-2 1h1m-1 1h1m-2 1h1m-1 1h1m-2 1h1m-1 1h1m-2 1h1m-2 1h1m-1 1h1m-2 1h1m-1 1h1m-2 1h1m-1 1h1m-2 1h1m-1 1h1m-2 1h1m-1 1h1m-2 1h1m-1 1h1m-2 1h1m-1 1h1m-2 1h1m-1 1h1m-2 1h1m-1 1h1m-2 1h1m-1 1h1m-2 1h1m-1 1h1m-2 1h1m-1 1h1m-2 1h1m-1 1h1m-2 1h1m-1 1h1m-2 1h1m-1 1h1m-1 1h1m-2 1h1m-1 1h1m-2 1h1m-1 1h1m-2 1h1m-1 1h1m-2 1h1m-1 1h1m-2 1h1m-1 1h1m-2 1h1m-1 1h1m-2 1h1m-1 1h1m-2 1h1m-1 1h1m-2 1h1m-1 1h1m-2 1h1m-1 1h1m-1 1h1m-2 1h1m-1 1h1m-2 1h1m-1 1h1m-2 1h1m-1 1h1m-2 1h1m-1 1h1m-1 1h1m-2 1h1m-1 1h1m-2 1h1m-1 1h1m-2 1h1m-1 1h1m-2 1h1m-1 1h1m-1 1h1m-2 1h1m-1 1h1m-2 1h1m-1 1h1m-2 1h1m-1 1h1m-2 1h1m-1 1h1m-1 1h1m-2 1h1m-1 1h1m-2 1h1m-1 1h1m-2 1h1m-1 1h1m-2 1h1m-1 1h1m-1 1h1m0 1h1m-1 1h1m-1 1h1m0 1h1m-1 1h1m-1 1h1m0 1h1m-1 1h1m-1 1h1m0 1h1m-1 1h1m-1 1h1m0 1h1m-1 1h1m-1 1h1m-1 1h1m0 1h1m-1 1h1m-1 1h1m0 1h1m-1 1h1m-1 1h1m0 1h1m-1 1h1m-1 1h1m0 1h1m-1 1h1m-1 1h1m0 1h1m-1 1h1m-3 1h2m-3 1h1m-2 1h1m-3 1h2m-3 1h1m-2 1h1m-3 1h2m-3 1h1m-2 1h1m-3 1h2m-3 1h1m-2 1h1m-3 1h2m-3 1h1m-2 1h1m-3 1h2m-3 1h1m-2 1h1m-3 1h2m-3 1h1m-2 1h1m-3 1h2m-3 1h1m-2 1h1m-3 1h2m-3 1h1m-2 1h1m-2 1h1m-3 1h2m-3 1h1m-2 1h1m-2 1h1m-2 1h1m-2 1h1m-3 1h2m-3 1h1m-2 1h1m-2 1h1m-2 1h1m-2 1h1m-3 1h2m-3 1h1m-2 1h1m-2 1h1m-2 1h1m-2 1h1m-3 1h2m-3 1h1m-2 1h1m-2 1h1m-1 1h1m-2 1h1m-1 1h1m-2 1h1m-1 1h1m-2 1h1m-1 1h1m-2 1h1m-1 1h1m-2 1h1m-1 1h1m-1 1h1m-2 1h1m-1 1h1m-2 1h1m-1 1h1m-2 1h1m-1 1h1m-2 1h1m-1 1h1m-2 1h1m-2 1h1m-1 1h1m-2 1h1m-2 1h1m-2 1h1m-1 1h1m-2 1h1m-2 1h1m-2 1h1m-2 1h1m-1 1h1m-2 1h1m-2 1h1m-2 1h1m-1 1h1m-2 1h1m-2 1h1m-2 1h1m-2 1h1m-2 1h1m-2 1h1m-2 1h1m-2 1h1m-2 1h1m-2 1h1m-2 1h1m-2 1h1m-2 1h1m-2 1h1m-2 1h1m-2 1h1m-2 1h1m-2 1h1m-2 1h1m-3 1h2m-6 1h4m-8 1h4m-8 1h4m-6 1h2m-3 1h1m-2 1h1m-1 1h1m-2 1h1m-2 1h1m-2 1h1m-1 1h1m-2 1h1m-2 1h1m-2 1h1m-1 1h1m-2 1h1m-2 1h1m-2 1h1m-1 1h1m-2 1h1m-1 1h1m-2 1h1m-1 1h1m-1 1h1m-1 1h1m0 1h1m-1 1h1m-1 1h1m0 1h1m0 1h1m0 1h1m0 1h1m0 1h1m0 1h2m0 1h1m0 1h1m0 1h1m0 1h1m0 1h1m0 1h1m0 1h2m0 1h2m0 1h1m0 1h2m0 1h2m0 1h2m0 1h2m0 1h3m0 1h2m0 1h3m0 1h3m0 1h2m0 1h3m0 1h3m0 1h3m0 1h3m0 1h2m0 1h3m0 1h3m0 1h3m0 1h5m0 1h6m0 1h6m0 1h5m0 1h2m0 1h2m0 1h4m0 1h4" stroke="#ff0080" fill="none"/>
<path d="M567 51.5h1m-2 1h1m-2 1h1m-1 1h1m-2 1h1m-2 1h1m-2 1h1m-2 1h1m-2 1h1m-1 1h1m-2 1h1m-2 1h1m-2 1h1m-2 1h1m-2 1h1m-1 1h1m-2 1h1m-2 1h1m-2 1h1m-2 1h1m-2 1h1m-1 1h1m-2 1h1m-2 1h1m-2 1h1m-2 1h1m-1 1h1m-2 1h1m-2 1h1m-2 1h1m-2 1h1m-2 1h1m-1 1h1m-2 1h1m-2 1h1m-2 1h1m-2 1h1m-2 1h1m-1 1h1m-2 1h1m-2 1h1m-2 1h1m-2 1h1m-2 1h1m-1 1h1m-2 1h1m-2 1h1m-2 1h1m-2 1h1m-1 1h1m-2 1h1m-2 1h1m-2 1h1m-2 1h1m-2 1h1m-1 1h1m-2 1h1m-2 1h1m-2 1h1m-2 1h1m-2 1h1m-1 1h1m-2 1h1m-2 1h1m-2 1h1m-2 1h1m-2 1h1m-1 1h1m-2 1h1m-2 1h1m-2 1h1m-2 1h1m-1 1h1m-2 1h1m-2 1h1m-2 1h1m-2 1h1m-2 1h1m-1 1h1m-2 1h1m-2 1h1m-2 1h1m-2 1h1m-2 1h1m-1 1h1m-2 1h1m-2 1h1m-2 1h1m-2 1h1m-2 1h1m-1 1h1m-2 1h1m-2 1h1m-2 1h1m-2 1h1m-2 1h1m-1 1h1m-2 1h1m-2 1h1m-2 1h1m-2 1h1m-1 1h1m-2 1h1m-2 1h1m-2 1h1m-2 1h1m-2 1h1m-1 1h1m-2 1h1m-2 1h1m-2 1h1m-2 1h1m-2 1h1m-1 1h1m-2 1h1m-2 1h1m-2 1h1m-2 1h1m-2 1h1m-1 1h1m-2 1h1m-2 1h1m-2 1h1m-2 1h1m-1 1h1m-2 1h1m-2 1h1m-2 1h1m-2 1h1m-2 1h1m-1 1h1m-2 1h1m-2 1h1m-2 1h1m-2 1h1m-2 1h1m-1 1h1m-2 1h1m-2 1h1m-2 1h1m-2 1h1m-2 1h1m-1 1h1m-2 1h1m-2 1h1m-2 1h1m-2 1h1m-1 1h1m-2 1h1m-2 1h1m-2 1h1m-2 1h1m-2 1h1m-1 1h1m-2 1h1m-2 1h1m-2 1h1m-2 1h1m-2 1h1m-1 1h1m-2 1h1m-2 1h1m-2 1h1m-2 1h1m-2 1h1m-1 1h1m-2 1h1m-2 1h1m-1 1h1m-1 1h1m-1 1h1m-2 1h1m-1 1h1m-1 1h1m-1 1h1m-1 1h1m-1 1h1m-1 1h1m-1 1h1m-2 1h1m-1 1h1m-1 1h1m-1 1h1m-1 1h1m-1 1h1m-1 1h1m-1 1h1m-1 1h1m-1 1h1m-1 1h1m-1 1h1m-1 1h1m-2 1h1m-1 1h1m-1 1h1m-1 1h1m-1 1h1m-1 1h1m-1 1h1m-1 1h1m-1 1h1m-1 1h1m-1 1h1m-1 1h1m-1 1h1m-1 1h1m-2 1h1m-1 1h1m-1 1h1m-1 1h1m-1 1h1m-1 1h1m-1 1h1m-1 1h1m-1 1h1m-1 1h1m-2 1h1m-1 1h1m-1 1h1m-1 1h1m-1 1h1m-1 1h1m-1 1h1m-1 1h1m-1 1h1m-1 1h1m-2 1h1m-1 1h1m-1 1h1m-1 1h1m-1 1h1m-1 1h1m-1 1h1m-1 1h1m-1 1h1m-1 1h1m-2 1h1m-1 1h1m-1 1h1m-1 1h1m-1 1h1m-1 1h1m-1 1h1m-1 1h1m-1 1h1m-2 1h1m-1 1h1m-1 1h1m-1 1h1m-1 1h1m-1 1h1m-1 1h1m-2 1h1m-1 1h1m-1 1h1m-1 1h1m-1 1h1m-1 1h1m-1 1h1m-1 1h1m-2 1h1m-1 1h1m-1 1h1m-1 1h1m-1 1h1m-1 1h1m-1 1h1m-2 1h1m-1 1h1m-1 1h1m-1 1h1m-1 1h1m-1 1h1m-1 1h1m-2 1h1m-1 1h1m-1 1h1m-1 1h1m-1 1h1m-1 1h1m-1 1h1m-2 1h1m-1 1h1m-1 1h1m-1 1h1m-1 1h1m-1 1h1m-1 1h1m-1 1h1m-2 1h1m-1 1h1m-1 1h1m-1 1h1m-1 1h1m-1 1h1m-1 1h1m-2 1h1m-1 1h1m-1 1h1m-1 1h1m-1 1h1m-1 1h1m-1 1h1m-2 1h1m-1 1h1m-1 1h1m-1 1h1m-1 1h1m-1 1h1m-1 1h1m-1 1h1m-2 1h1m-1 1h1m-1 1h1m-1 1h1m-1 1h1m-1 1h1m-1 1h1m-2 1h1m-1 1h1m-1 1h1m-1 1h1m-1 1h1m-1 1h1m-1 1h1m-2 1h1m-1 1h1m-1 1h1m-1 1h1m-1 1h1m-1 1h1m-1 1h1m-1 1h1m-2 1h1m-1 1h1m-1 1h1m-1 1h1m-1 1h1m-1 1h1m-1 1h1m-2 1h1m-1 1h1m-1 1h1m-1 1h1m-1 1h1m0 1h1m-1 1h1m-1 1h1m0 1h1m-1 1h1m0 1h1m-1 1h1m-1 1h1m0 1h1m-1 1h1m-1 1h1m0 1h1m-1 1h1m-1 1h1m0 1h1m-1 1h1m-1 1h1m0 1h1m-1 1h1m0 1h1m-1 1h1m-1 1h1m0 1h1m-1 1h1m-1 1h1m0 1h1m-1 1h1m-1 1h1m0 1h1m-1 1h1m-1 1h1m0 1h1m-1 1h1m-1 1h1m0 1h1m-1 1h1m-1 1h1m0 1h1m-1 1h1m-1 1h1m0 1h1m-1 1h1m-1 1h1m0 1h1m-1 1h1m-1 1h1m0 1h1m-1 1h1m-1 1h1m0 1h1m-1 1h1m-1 1h1m-1 1h1m0 1h1m-1 1h1m-1 1h1m-1 1h1m-1 1h1m0 1h1m-1 1h1m-1 1h1m-1 1h1m0 1h1m-1 1h1m-1 1h1m-1 1h1m-1 1h1m0 1h1m-1 1h1m-1 1h1m-1 1h1m-1 1h1m0 1h1m-1 1h1m-1 1h1m-1 1h1m-1 1h1m-1 1h1m0 1h1m-1 1h1m-1 1h1m-1 1h1m-1 1h1m-1 1h1m-1 1h1m-1 1h1m0 1h1m-1 1h1m-1 1h1m-1 1h1m-1 1h1m-1 1h1m-1 1h1m-1 1h1m0 1h1m-1 1h1m-1 1h1m-1 1h1m-1 1h1m-1 1h1m-1 1h1m-1 1h1m-1 1h1m-1 1h1m-1 1h1m-1 1h1m-1 1h1m-1 1h1m-1 1h1m-1 1h1m-1 1h1m-1 1h1m-1 1h1m-1 1h1m-1 1h1m-2 1h1m-1 1h1m-1 1h1m-1 1h1m-1 1h1m-1 1h1m-1 1h1m-1 1h1m-1 1h1m-1 1h1m-1 1h1m-1 1h1m-1 1h1m-1 1h1m-1 1h1m-1 1h1m-1 1h1m-1 1h1m-1 1h1m-1 1h1m-1 1h1m-1 1h1m-2 1h1m-1 1h1m-1 1h1m-1 1h1m-1 1h1m-1 1h1m-1 1h1m-2 1h1m-1 1h1m-1 1h1m-1 1h1m-1 1h1m-1 1h1m-1 1h1m-2 1h1m-1 1h1m-1 1h1m-1 1h1m-1 1h1m-2 1h1m-1 1h1m-1 1h1m-2 1h1m-1 1h1m-1 1h1m-1 1h1m-2 1h1m-1 1h1m-1 1h1m-1 1h1m-2 1h1m-1 1h1m-1 1h1m-1 1h1m-1 1h1m-2 1h1m-1 1h1m-1 1h1m-1 1h1m-2 1h1m-1 1h1m-1 1h1m-1 1h1m-1 1h1m-2 1h1m-1 1h1m-1 1h1m-1 1h1m-1 1h1m-2 1h1m-1 1h1m-1 1h1m-2 1h1m-2 1h1m-1 1h1m-1 1h1m-1 1h1m-1 1h1m0 1h1m-1 1h1m-1 1h1m-1 1h1m-1 1h1m-1 1h1m-1 1h1m-1 1h1m0 1h1m-1 1h1m-1 1h1m-1 1h1m-1 1h1m-1 1h1m-1 1h1m-1 1h1m0 1h1m-1 1h1m-1 1h1m-1 1h1m-1 1h1m-1 1h1m0 1h1m-1 1h1m0 1h1m-1 1h1m-1 1h1m0 1h1m-1 1h1m0 1h1m-1 1h1m-1 1h1m0 1h1m-1 1h1m-1 1h1m0 1h1m-1 1h1m0 1h1m-1 1h1m-1 1h1m0 1h1m-1 1h1m-1 1h1m-1 1h1m0 1h1m-1 1h1m-1 1h1m-1 1h1m0 1h1m-1 1h1m-1 1h1m-1 1h1m0 1h1m-1 1h1m-1 1h1m-1 1h1m0 1h1m-1 1h1m0 1h1m-1 1h1m0 1h1m0 1h1m0 1h1m-1 1h1m0 1h1m0 1h1m-1 1h1m0 1h1m0 1h1m-1 1h1m0 1h1m0 1h1m0 1h1m-1 1h1m0 1h2m0 1h3m0 1h3m0 1h4m0 1h3m0 1h2m0 1h1m0 1h1m-1 1h1m0 1h1m0 1h1m0 1h1m-1 1h1m0 1h1m0 1h1m0 1h1m-1 1h1m0 1h1m0 1h1m0 1h1m-1 1h1m0 1h1m0 1h1m-1 1h1m0 1h1m-1 1h1m0 1h1m0 1h1m-1 1h1m0 1h1m-1 1h1m-1 1h1m-1 1h1m-2 1h1m-1 1h1m-1 1h1m-1 1h1m-1 1h1m-1 1h1m-2 1h1m-1 1h1m-1 1h1m-1 1h1m-1 1h1m-1 1h1m-2 1h1m-1 1h1m-1 1h1m-1 1h1m-1 1h1m-1 1h1m-1 1h1m0 1h1m-1 1h1m-1 1h1m-1 1h1m-1 1h1m0 1h1m-1 1h1m0 1h1m-1 1h1m-1 1h1m0 1h1m-1 1h1m-1 1h1m-1 1h1m0 1h1m-1 1h1m0 1h1m-1 1h1" stroke="#00ffff" fill="none"/>
<path d="M660 100.5h1m-2 1h1m-2 1h1m-2 1h1m-2 1h1m-2 1h1m-2 1h1m-2 1h1m-2 1h1m-2 1h1m-2 1h1m-1 1h1m-2 1h1m-2 1h1m-2 1h1m-2 1h1m-2 1h1m-2 1h1m-2 1h1m-2 1h1m-2 1h1m-2 1h1m-2 1h1m-2 1h1m-2 1h1m-2 1h1m-2 1h1m-2 1h1m-2 1h1m-2 1h1m-2 1h1m-2 1h1m-2 1h1m-2 1h1m-2 1h1m-1 1h1m-2 1h1m-2 1h1m-2 1h1m-2 1h1m-2 1h1m-2 1h1m-2 1h1m-2 1h1m-2 1h1m-2 1h1m-2 1h1m-2 1h1m-2 1h1m-2 1h1m-2 1h1m-2 1h1m-2 1h1m-2 1h1m-2 1h1m-2 1h1m-2 1h1m-2 1h1m-2 1h1m-1 1h1m-2 1h1m-2 1h1m-2 1h1m-2 1h1m-2 1h1m-2 1h1m-2 1h1m-2 1h1m-2 1h1m-2 1h1m-2 1h1m-2 1h1m-2 1h1m-2 1h1m-2 1h1m-2 1h1m-2 1h1m-2 1h1m-2 1h1m-2 1h1m-2 1h1m-2 1h1m-2 1h1m-1 1h1m-2 1h1m-2 1h1m-2 1h1m-2 1h1m-2 1h1m-2 1h1m-2 1h1m-2 1h1m-2 1h1m-2 1h1m-2 1h1m-2 1h1m-2 1h1m-2 1h1m-2 1h1m-2 1h1m-2 1h1m-2 1h1m-2 1h1m-2 1h1m-2 1h1m-2 1h1m-2 1h1m-1 1h1m-2 1h1m-2 1h1m-2 1h1m-2 1h1m-2 1h1m-2 1h1m-2 1h1m-2 1h1m-2 1h1m-2 1h1m-2 1h1m-2 1h1m-2 1h1m-2 1h1m-3 1h2m-3 1h1m-2 1h1m-2 1h1m-2 1h1m-2 1h1m-2 1h1m-2 1h1m-2 1h1m-3 1h2m-3 1h1m-2 1h1m-2 1h1m-2 1h1m-2 1h1m-2 1h1m-2 1h1m-3 1h2m-3 1h1m-2 1h1m-2 1h1m-2 1h1m-2 1h1m-2 1h1m-2 1h1m-2 1h1m-3 1h2m-3 1h1m-2 1h1m-2 1h1m-2 1h1m-2 1h1m-2 1h1m-2 1h1m-2 1h1m-3 1h2m-3 1h1m-2 1h1m-2 1h1m-2 1h1m-2 1h1m-2 1h1m-2 1h1m-3 1h2m-3 1h1m-2 1h1m-2 1h1m-2 1h1m-2 1h1m-2 1h1m-2 1h1m-2 1h1m-3 1h2m-3 1h1m-2 1h1m-2 1h1m-2 1h1m-2 1h1m-2 1h1m-2 1h1m-3 1h2m-3 1h1m-2 1h1m-2 1h1m-2 1h1m-2 1h1m-2 1h1m-2 1h1m-2 1h1m-3 1h2m-3 1h1m-2 1h1m-2 1h1m-2 1h1m-2 1h1m-2 1h1m-2 1h1m-2 1h1m-3 1h2m-3 1h1m-2 1h1m-2 1h1m-2 1h1m-2 1h1m-2 1h1m-2 1h1m-3 1h2m-3 1h1m-2 1h1m-2 1h1m-2 1h1m-2 1h1m-2 1h1m-2 1h1m-2 1h1m-3 1h2m-3 1h1m-2 1h1m-2 1h1m-2 1h1m-1 1h1m-1 1h1m-1 1h1m-2 1h1m-1 1h1m-1 1h1m-1 1h1m-1 1h1m-1 1h1m-1 1h1m-2 1h1m-1 1h1m-1 1h1m-1 1h1m-1 1h1m-1 1h1m-2 1h1m-1 1h1m-1 1h1m-1 1h1m-1 1h1m-1 1h1m-1 1h1m-2 1h1m-1 1h1m-1 1h1m-1 1h1m-1 1h1m-1 1h1m-1 1h1m-2 1h1m-1 1h1m-1 1h1m-1 1h1m-1 1h1m-1 1h1m-2 1h1m-1 1h1m-1 1h1m-1 1h1m-1 1h1m-1 1h1m-1 1h1m-2 1h1m-1 1h1m-1 1h1m-1 1h1m-1 1h1m-1 1h1m-1 1h1m-2 1h1m-1 1h1m-1 1h1m-1 1h1m-1 1h1m-1 1h1m-2 1h1m-1 1h1m-1 1h1m-1 1h1m-1 1h1m-1 1h1m-1 1h1m-2 1h1m-1 1h1m-1 1h1m-1 1h1m-1 1h1m-1 1h1m-2 1h1m-1 1h1m-1 1h1m-1 1h1m-1 1h1m-1 1h1m0 1h1m-1 1h1m-1 1h1m-1 1h1m-1 1h1m-1 1h1m0 1h1m-1 1h1m-1 1h1m-1 1h1m-1 1h1m0 1h1m-1 1h1m-1 1h1m-1 1h1m-1 1h1m0 1h1m-1 1h1m-1 1h1m-1 1h1m-1 1h1m-1 1h1m0 1h1m-1 1h1m-1 1h1m-1 1h1m-1 1h1m-1 1h1m0 1h1m-1 1h1m-1 1h1m-1 1h1m-1 1h1m-1 1h1m-1 1h1m0 1h1m-1 1h1m-1 1h1m-1 1h1m-1 1h1m-1 1h1m-1 1h1m0 1h1m-1 1h1m-1 1h1m-1 1h1m-1 1h1m-1 1h1m-1 1h1m0 1h1m-1 1h1m-1 1h1m-1 1h1m-1 1h1m-1 1h1m-1 1h1m-1 1h1m0 1h1m-1 1h1m-1 1h1m-1 1h1m-1 1h1m-1 1h1m-1 1h1m-1 1h1m-1 1h1m0 1h1m-1 1h1m-1 1h1m-1 1h1m-1 1h1m-1 1h1m-1 1h1m-1 1h1m-1 1h1m-1 1h1m0 1h1m-1 1h1m-1 1h1m-1 1h1m-1 1h1m-1 1h1m-1 1h1m-1 1h1m-1 1h1m-1 1h1m-1 1h1m-1 1h1m0 1h1m-1 1h1m-1 1h1m-1 1h1m-1 1h1m-1 1h1m-1 1h1m-1 1h1m-1 1h1m-1 1h1m-1 1h1m-1 1h1m-1 1h1m-1 1h1m-1 1h1m-1 1h1m-1 1h1m-1 1h1m-1 1h1m-1 1h1m-1 1h1m-1 1h1m-1 1h1m-1 1h1m-1 1h1m-1 1h1m0 1h1m-1 1h1m-1 1h1m-1 1h1m-1 1h1m-1 1h1m-1 1h1m-1 1h1m-1 1h1m-1 1h1m-1 1h1m-1 1h1m-1 1h1m-1 1h1m-1 1h1m-1 1h1m-1 1h1m-1 1h1m-1 1h1m-1 1h1m-1 1h1m-1 1h1m-1 1h1m-1 1h1m-1 1h1m-1 1h1m-1 1h1m0 1h1m-1 1h1m-1 1h1m-1 1h1m-1 1h1m-1 1h1m-1 1h1m-1 1h1m-1 1h1m-1 1h1m-1 1h1m-1 1h1m-1 1h1m-1 1h1m-1 1h1m0 1h1m-1 1h1m-1 1h1m-1 1h1m-1 1h1m-1 1h1m-1 1h1m-1 1h1m-1 1h1m-1 1h1m0 1h1m-1 1h1m-1 1h1m-1 1h1m-1 1h1m-1 1h1m0 1h1m-1 1h1m-1 1h1m-1 1h1m-1 1h1m-1 1h1m0 1h1m-1 1h1m-1 1h1m-1 1h1m-1 1h1m-1 1h1m0 1h1m-1 1h1m-1 1h1m-1 1h1m0 1h1m0 1h1m-1 1h1m-1 1h1m-1 1h1m-1 1h1m-1 1h1m-1 1h1m0 1h1m-1 1h1m-1 1h1m-1 1h1m-1 1h1m-1 1h1m-1 1h1m-1 1h1m-1 1h1m-1 1h1m-1 1h1m-1 1h1m0 1h1m-1 1h1m-1 1h1m-1 1h1m-1 1h1m-1 1h1m-1 1h1m0 1h1m0 1h1m0 1h1m0 1h1m0 1h1m0 1h1m0 1h1m0 1h1m0 1h2m0 1h1m0 1h1m0 1h1m0 1h1m0 1h1m0 1h1m0 1h1m0 1h1m0 1h1m-1 1h1m-1 1h1m-1 1h1m0 1h1m-1 1h1m-1 1h1m-1 1h1m-1 1h1m-1 1h1m0 1h1m-1 1h1m-1 1h1m-1 1h1m-1 1h1m-1 1h1m0 1h1m-1 1h1m-1 1h1m-1 1h1m0 1h1m-1 1h1m0 1h1m-1 1h1m0 1h1m-1 1h1m0 1h1m-1 1h1m0 1h1m-1 1h1m0 1h1m-1 1h1m0 1h1m-1 1h1m0 1h1m-1 1h1m0 1h1m0 1h1m0 1h1m0 1h1m0 1h1m0 1h1m-1 1h1m-1 1h1m-1 1h1m-1 1h1m-1 1h1m-1 1h1m0 1h1m-1 1h1m-1 1h1m-1 1h1m-1 1h1m-1 1h1m-1 1h1m-1 1h1m-1 1h1m0 1h1m-1 1h1m-1 1h1m-1 1h1m-1 1h1m-1 1h1m0 1h1m-1 1h1m-1 1h1m-1 1h1m-1 1h1m-1 1h1m0 1h1m-1 1h1m-1 1h1m-1 1h1m-1 1h1m-1 1h1m0 1h1m-1 1h1m-1 1h1m-1 1h1m0 1h1m-1 1h1m0 1h1m0 1h1m-1 1h1m0 1h1m-1 1h1m0 1h1m-1 1h1m-1 1h1m0 1h1m-1 1h1m-1 1h1m-1 1h1m-2 1h1m-1 1h1m-1 1h1m-1 1h1m-1 1h1m-2 1h1m-1 1h1m-1 1h1m-1 1h1m-1 1h1m-2 1h1m-1 1h1m-1 1h1" stroke="#ff0000" fill="none"/>
<path d="M477 51.5h1m-1 1h1m-2 1h1m-1 1h1m-2 1h1m-1 1h1m-1 1h1m-2 1h1m-1 1h1m-2 1h1m-1 1h1m-1 1h1m-2 1h1m-1 1h1m-2 1h1m-1 1h1m-1 1h1m-2 1h1m-1 1h1m-2 1h1m-1 1h1m-1 1h1m-2 1h1m-1 1h1m-1 1h1m-1 1h1m-2 1h1m-1 1h1m-1 1h1m-1 1h1m-2 1h1m-1 1h1m-1 1h1m-2 1h1m-1 1h1m-1 1h1m-1 1h1m-2 1h1m-1 1h1m-1 1h1m-2 1h1m-1 1h1m-1 1h1m-1 1h1m-2 1h1m-1 1h1m-1 1h1m-1 1h1m-2 1h1m-1 1h1m-1 1h1m-1 1h1m-2 1h1m-1 1h1m-1 1h1m-1 1h1m-1 1h1m-2 1h1m-1 1h1m-1 1h1m-1 1h1m-1 1h1m-2 1h1m-1 1h1m-1 1h1m-1 1h1m-1 1h1m-2 1h1m-1 1h1m-1 1h1m-1 1h1m-1 1h1m-2 1h1m-1 1h1m-1 1h1m-1 1h1m-1 1h1m-2 1h1m-1 1h1m-1 1h1m-1 1h1m-1 1h1m-2 1h1m-1 1h1m-1 1h1m-1 1h1m-1 1h1m-2 1h1m-1 1h1m-1 1h1m-1 1h1m-2 1h1m-1 1h1m-1 1h1m-1 1h1m-2 1h1m-1 1h1m-1 1h1m-1 1h1m-1 1h1m-2 1h1m-1 1h1m-1 1h1m-1 1h1m-2 1h1m-1 1h1m-1 1h1m-1 1h1m-2 1h1m-1 1h1m-1 1h1m-1 1h1m-1 1h1m-2 1h1m-1 1h1m-1 1h1m-1 1h1m-1 1h1m-1 1h1m-2 1h1m-1 1h1m-1 1h1m-1 1h1m-1 1h1m-1 1h1m-2 1h1m-1 1h1m-1 1h1m-1 1h1m-1 1h1m-1 1h1m-2 1h1m-1 1h1m-1 1h1m-1 1h1m-1 1h1m-1 1h1m-1 1h1m-2 1h1m-1 1h1m-1 1h1m-1 1h1m-1 1h1m-1 1h1m-1 1h1m-1 1h1m-1 1h1m-2 1h1m-1 1h1m-1 1h1m-1 1h1m-1 1h1m-1 1h1m-1 1h1m-1 1h1m-2 1h1m-1 1h1m-1 1h1m-1 1h1m-1 1h1m-1 1h1m-1 1h1m-1 1h1m-2 1h1m-1 1h1m-1 1h1m-1 1h1m-1 1h1m-1 1h1m-1 1h1m-1 1h1m-2 1h1m-1 1h1m-1 1h1m-1 1h1m-1 1h1m-1 1h1m-1 1h1m-1 1h1m-1 1h1m-1 1h1m-1 1h1m-1 1h1m-1 1h1m-1 1h1m-1 1h1m-2 1h1m-1 1h1m-1 1h1m-1 1h1m-1 1h1m-1 1h1m-1 1h1m-1 1h1m-1 1h1m-1 1h1m-1 1h1m-1 1h1m-1 1h1m-1 1h1m-1 1h1m-1 1h1m-1 1h1m-1 1h1m-1 1h1m-1 1h1m-1 1h1m-1 1h1m-2 1h1m-1 1h1m-1 1h1m-1 1h1m-1 1h1m-1 1h1m-1 1h1m-1 1h1m-1 1h1m-1 1h1m-1 1h1m-1 1h1m-1 1h1m-1 1h1m-1 1h1m-1 1h1m-1 1h1m-1 1h1m-2 1h1m-1 1h1m-1 1h1m-1 1h1m-1 1h1m-1 1h1m-1 1h1m-1 1h1m-1 1h1m-1 1h1m-1 1h1m-1 1h1m-1 1h1m-1 1h1m-1 1h1m-1 1h1m-1 1h1m-1 1h1m0 1h1m-1 1h1m-1 1h1m-1 1h1m-1 1h1m-1 1h1m-1 1h1m-1 1h1m-1 1h1m-1 1h1m-1 1h1m-1 1h1m-1 1h1m-1 1h1m-1 1h1m-1 1h1m-1 1h1m-1 1h1m0 1h1m-1 1h1m-1 1h1m-1 1h1m-1 1h1m-1 1h1m-1 1h1m-1 1h1m-1 1h1m-1 1h1m-1 1h1m-1 1h1m-1 1h1m-1 1h1m-1 1h1m-1 1h1m-1 1h1m0 1h1m-1 1h1m-1 1h1m-1 1h1m-1 1h1m-1 1h1m-1 1h1m-1 1h1m-1 1h1m-1 1h1m-1 1h1m-1 1h1m-1 1h1m-1 1h1m0 1h1m-1 1h1m-1 1h1m-1 1h1m-1 1h1m-1 1h1m-1 1h1m-1 1h1m0 1h1m-1 1h1m-1 1h1m-1 1h1m-1 1h1m-1 1h1m-1 1h1m-1 1h1m0 1h1m-1 1h1m-1 1h1m-1 1h1m-1 1h1m-1 1h1m-1 1h1m-1 1h1m0 1h1m-1 1h1m-1 1h1m-1 1h1m-1 1h1m-1 1h1m0 1h1m-1 1h1m-1 1h1m-1 1h1m-1 1h1m-1 1h1m0 1h1m-1 1h1m-1 1h1m-1 1h1m-1 1h1m-1 1h1m0 1h1m-1 1h1m-1 1h1m-1 1h1m-1 1h1m-1 1h1m0 1h1m-1 1h1m-1 1h1m-1 1h1m-1 1h1m-1 1h1m0 1h1m-1 1h1m-1 1h1m-1 1h1m0 1h1m-1 1h1m-1 1h1m-1 1h1m-1 1h1m0 1h1m-1 1h1m-1 1h1m-1 1h1m-1 1h1m0 1h1m-1 1h1m-1 1h1m-1 1h1m0 1h1m-1 1h1m-1 1h1m-1 1h1m-1 1h1m0 1h1m-1 1h1m-1 1h1m-1 1h1m-1 1h1m-1 1h1m0 1h1m-1 1h1m-1 1h1m-1 1h1m-1 1h1m-1 1h1m0 1h1m-1 1h1m-1 1h1m-1 1h1m-1 1h1m-1 1h1m0 1h1m-1 1h1m-1 1h1m-1 1h1m-1 1h1m-1 1h1m0 1h1m-1 1h1m-1 1h1m-1 1h1m-1 1h1m-1 1h1m0 1h1m-1 1h1m-1 1h1m-1 1h1m-1 1h1m0 1h1m-1 1h1m-1 1h1m-1 1h1m0 1h1m-1 1h1m-1 1h1m-1 1h1m0 1h1m-1 1h1m-1 1h1m-1 1h1m0 1h1m-1 1h1m-1 1h1m-1 1h1m0 1h1m-1 1h1m-1 1h1m-1 1h1m0 1h1m-1 1h1m-1 1h1m-1 1h1m0 1h1m-1 1h1m-1 1h1m-1 1h1m-1 1h1m-1 1h1m0 1h1m-1 1h1m-1 1h1m-1 1h1m-1 1h1m0 1h1m-1 1h1m-1 1h1m-1 1h1m-1 1h1m-1 1h1m0 1h1m-1 1h1m-1 1h1m-1 1h1m-1 1h1m-1 1h1m0 1h1m-1 1h1m-1 1h1m-1 1h1m-1 1h1m0 1h1m-1 1h1m-1 1h1m-1 1h1m-1 1h1m-1 1h1m0 1h1m-1 1h1m-1 1h1m-1 1h1m-1 1h1m-1 1h1m0 1h1m-1 1h1m-1 1h1m-1 1h1m-1 1h1m-1 1h1m0 1h1m-1 1h1m-1 1h1m-1 1h1m-1 1h1m-1 1h1m-1 1h1m0 1h1m-1 1h1m-1 1h1m-1 1h1m-1 1h1m-1 1h1m-1 1h1m0 1h1m-1 1h1m-1 1h1m-1 1h1m-1 1h1m-1 1h1m-1 1h1m0 1h1m-1 1h1m-1 1h1m-1 1h1m-1 1h1m-1 1h1m-1 1h1m0 1h1m-1 1h1m-1 1h1m-1 1h1m-1 1h1m-1 1h1m-1 1h1m-1 1h1m0 1h1m-1 1h1m-1 1h1m-1 1h1m-1 1h1m-1 1h1m-1 1h1m0 1h1m-1 1h1m-1 1h1m-1 1h1m-1 1h1m-1 1h1m-1 1h1m0 1h1m-1 1h1m-1 1h1m-1 1h1m-1 1h1m-1 1h1m-1 1h1m0 1h1m-1 1h1m-1 1h1m-1 1h1m-1 1h1m-1 1h1m-1 1h1m-1 1h1m-1 1h1m0 1h1m-1 1h1m-1 1h1m-1 1h1m-1 1h1m-1 1h1m-1 1h1m-1 1h1m-1 1h1m-1 1h1m-1 1h1m0 1h1m-1 1h1m-1 1h1m-1 1h1m-1 1h1m-1 1h1m-1 1h1m-1 1h1m-1 1h1m-1 1h1m-1 1h1m0 1h1m-1 1h1m-1 1h1m-1 1h1m-1 1h1m-1 1h1m-1 1h1m-1 1h1m-1 1h1m-1 1h1m0 1h1m-1 1h1m-1 1h1m-1 1h1m-1 1h1m-1 1h1m-1 1h1m-1 1h1m-1 1h1m-1 1h1m-1 1h1m-1 1h1m-1 1h1m-1 1h1m-1 1h1m0 1h1m-1 1h1m-1 1h1m-1 1h1m-1 1h1m-1 1h1m-1 1h1m-1 1h1m-1 1h1m-1 1h1m-1 1h1m-1 1h1m-1 1h1m-1 1h1m-1 1h1m-1 1h1m-1 1h1m-1 1h1m0 1h1m-1 1h1m-1 1h1m-1 1h1m-1 1h1m-1 1h1m-1 1h1m-1 1h1m-1 1h1m-1 1h1m-1 1h1m-1 1h1m-1 1h1m0 1h1m-1 1h1m-1 1h1m-1 1h1m-1 1h1m-1 1h1m-1 1h1m-1 1h1m-1 1h1m-1 1h1m-1 1h1m-1 1h1m0 1h1m-1 1h1m-1 1h1m-1 1h1m-1 1h1m-1 1h1m-1 1h1m-1 1h1m-1 1h1m-1 1h1m-1 1h1m-1 1h1m-1 1h1m-1 1h1m-1 1h1m-1 1h1m-1 1h1m-1 1h1m0 1h1m-1 1h1m-1 1h1m-1 1h1m-1 1h1m-1 1h1m-1 1h1m-1 1h1m-1 1h1m-1 1h1m-1 1h1m-1 1h1m-1 1h1m-1 1h1" stroke="#ffb0ff" fill="none"/>
<path d="M490 713.5h1m0 1h2m0 1h1m0 1h2m0 1h1m0 1h2m0 1h1m0 1h2m0 1h1m0 1h2m0 1h1m0 1h2m0 1h1m0 1h2m0 1h1m0 1h1m0 1h2m0 1h1m0 1h2m0 1h1m0 1h2m0 1h1" stroke="#ffb0ff" fill="none"/>
<path d="M490 713.5h1m-1 1h1m-2 1h1m-1 1h1m-2 1h1m-1 1h1m-2 1h1m-1 1h1m-1 1h1m-2 1h1m-1 1h1m-2 1h1m-1 1h1" stroke="#ffb0ff" fill="none"/>
<path d="M462 51.5h1m-1 1h1m-2 1h1m-1 1h1m-1 1h1m-2 1h1m-1 1h1m-1 1h1m-2 1h1m-1 1h1m-1 1h1m-2 1h1m-1 1h1m-1 1h1m-2 1h1m-1 1h1m-1 1h1m-2 1h1m-1 1h1m-1 1h1m-2 1h1m-1 1h1m-1 1h1m-2 1h1m-1 1h1m-1 1h1m-2 1h1m-1 1h1m-1 1h1m-2 1h1m-1 1h1m-1 1h1m-2 1h1m-1 1h1m-1 1h1m-1 1h1m-2 1h1m-1 1h1m-1 1h1m-1 1h1m-2 1h1m-1 1h1m-1 1h1m-1 1h1m-2 1h1m-1 1h1m-1 1h1m-1 1h1m-2 1h1m-1 1h1m-1 1h1m-1 1h1m-2 1h1m-1 1h1m-1 1h1m-1 1h1m-2 1h1m-1 1h1m-1 1h1m-1 1h1m-2 1h1m-1 1h1m-1 1h1m-1 1h1m-2 1h1m-1 1h1m-1 1h1m-1 1h1m-2 1h1m-1 1h1m-1 1h1m-2 1h1m-1 1h1m-1 1h1m-1 1h1m-2 1h1m-1 1h1m-1 1h1m-1 1h1m-2 1h1m-1 1h1m-1 1h1m-1 1h1m-2 1h1m-1 1h1m-1 1h1m-1 1h1m-2 1h1m-1 1h1m-1 1h1m-1 1h1m-2 1h1m-1 1h1m-1 1h1m-1 1h1m-2 1h1m-1 1h1m-1 1h1m-1 1h1m-2 1h1m-1 1h1m-1 1h1m-1 1h1m-2 1h1m-1 1h1m-1 1h1m-1 1h1m-2 1h1m-1 1h1m-1 1h1m-1 1h1m-2 1h1m-1 1h1m-1 1h1m-1 1h1m-1 1h1m-1 1h1m-2 1h1m-1 1h1m-1 1h1m-1 1h1m-1 1h1m-1 1h1m-2 1h1m-1 1h1m-1 1h1m-1 1h1m-1 1h1m-1 1h1m-2 1h1m-1 1h1m-1 1h1m-1 1h1m-1 1h1m-1 1h1m-2 1h1m-1 1h1m-1 1h1m-1 1h1m-1 1h1m-1 1h1m-1 1h1m-1 1h1m-1 1h1m-2 1h1m-1 1h1m-1 1h1m-1 1h1m-1 1h1m-1 1h1m-1 1h1m-1 1h1m-1 1h1m-1 1h1m-1 1h1m-1 1h1m-2 1h1m-1 1h1m-1 1h1m-1 1h1m-1 1h1m-1 1h1m-1 1h1m-1 1h1m-1 1h1m-1 1h1m-1 1h1m-1 1h1m-2 1h1m-1 1h1m-1 1h1m-1 1h1m-1 1h1m-1 1h1m-1 1h1m-1 1h1m-1 1h1m-1 1h1m-1 1h1m-1 1h1m-1 1h1m-1 1h1m-1 1h1m-2 1h1m-1 1h1m-1 1h1m-1 1h1m-1 1h1m-1 1h1m-1 1h1m-1 1h1m-1 1h1m-1 1h1m-1 1h1m-1 1h1m-1 1h1m-1 1h1m-1 1h1m-1 1h1m-1 1h1m-1 1h1m-2 1h1m-1 1h1m-1 1h1m-1 1h1m-1 1h1m-1 1h1m-1 1h1m-1 1h1m-1 1h1m-1 1h1m-1 1h1m-1 1h1m-1 1h1m-1 1h1m-1 1h1m-1 1h1m-1 1h1m-1 1h1m-1 1h1m-1 1h1m-1 1h1m-1 1h1m-1 1h1m-1 1h1m-1 1h1m-1 1h1m-1 1h1m-1 1h1m-1 1h1m-1 1h1m-1 1h1m-1 1h1m-2 1h1m-1 1h1m-1 1h1m-1 1h1m-1 1h1m-1 1h1m-1 1h1m-1 1h1m-1 1h1m-1 1h1m-1 1h1m-1 1h1m-1 1h1m-1 1h1m-1 1h1m-1 1h1m-1 1h1m-1 1h1m-1 1h1m-1 1h1m-1 1h1m-1 1h1m-1 1h1m-1 1h1m-1 1h1m-1 1h1m-1 1h1m-1 1h1m-1 1h1m-1 1h1m0 1h1m-1 1h1m-1 1h1m-1 1h1m-1 1h1m-1 1h1m-1 1h1m-1 1h1m-1 1h1m-1 1h1m-1 1h1m-1 1h1m-1 1h1m-1 1h1m0 1h1m-1 1h1m-1 1h1m-1 1h1m-1 1h1m-1 1h1m-1 1h1m-1 1h1m-1 1h1m-1 1h1m-1 1h1m-1 1h1m-1 1h1m-1 1h1m0 1h1m-1 1h1m-1 1h1m-1 1h1m-1 1h1m-1 1h1m-1 1h1m-1 1h1m-1 1h1m-1 1h1m-1 1h1m0 1h1m-1 1h1m-1 1h1m-1 1h1m-1 1h1m-1 1h1m-1 1h1m-1 1h1m0 1h1m-1 1h1m-1 1h1m-1 1h1m-1 1h1m-1 1h1m-1 1h1m-1 1h1m-1 1h1m0 1h1m-1 1h1m-1 1h1m-1 1h1m-1 1h1m-1 1h1m-1 1h1m-1 1h1m0 1h1m-1 1h1m-1 1h1m-1 1h1m-1 1h1m-1 1h1m-1 1h1m0 1h1m-1 1h1m-1 1h1m-1 1h1m-1 1h1m-1 1h1m-1 1h1m0 1h1m-1 1h1m-1 1h1m-1 1h1m-1 1h1m0 1h1m-1 1h1m-1 1h1m-1 1h1m0 1h1m-1 1h1m-1 1h1m-1 1h1m0 1h1m-1 1h1m-1 1h1m-1 1h1m0 1h1m-1 1h1m-1 1h1m-1 1h1m0 1h1m-1 1h1m-1 1h1m-1 1h1m0 1h1m-1 1h1m-1 1h1m-1 1h1m0 1h1m-1 1h1m-1 1h1m-1 1h1m-1 1h1m0 1h1m-1 1h1m-1 1h1m-1 1h1m-1 1h1m0 1h1m-1 1h1m-1 1h1m-1 1h1m-1 1h1m0 1h1m-1 1h1m-1 1h1m-1 1h1m-1 1h1m-1 1h1m0 1h1m-1 1h1m-1 1h1m-1 1h1m-1 1h1m0 1h1m-1 1h1m-1 1h1m-1 1h1m-1 1h1m0 1h1m-1 1h1m-1 1h1m-1 1h1m-1 1h1m0 1h1m-1 1h1m-1 1h1m-1 1h1m0 1h1m-1 1h1m-1 1h1m-1 1h1m-1 1h1m0 1h1m-1 1h1m-1 1h1m-1 1h1m-1 1h1m0 1h1m-1 1h1m-1 1h1m-1 1h1m0 1h1m-1 1h1m-1 1h1m-1 1h1m-1 1h1m0 1h1m-1 1h1m-1 1h1m-1 1h1m-1 1h1m0 1h1m-1 1h1m-1 1h1m-1 1h1m0 1h1m-1 1h1m-1 1h1m-1 1h1m-1 1h1m0 1h1m-1 1h1m-1 1h1m-1 1h1m-1 1h1m0 1h1m-1 1h1m-1 1h1m-1 1h1m0 1h1m-1 1h1m-1 1h1m-1 1h1m0 1h1m-1 1h1m-1 1h1m-1 1h1m0 1h1m-1 1h1m-1 1h1m-1 1h1m0 1h1m-1 1h1m-1 1h1m-1 1h1m0 1h1m-1 1h1m-1 1h1m-1 1h1m0 1h1m-1 1h1m-1 1h1m-1 1h1m0 1h1m-1 1h1m-1 1h1m-1 1h1m-1 1h1m0 1h1m-1 1h1m-1 1h1m-1 1h1m0 1h1m-1 1h1m-1 1h1m-1 1h1m0 1h1m-1 1h1m-1 1h1m-1 1h1m0 1h1m-1 1h1m-1 1h1m-1 1h1m0 1h1m-1 1h1m-1 1h1m-1 1h1m-1 1h1m-1 1h1m0 1h1m-1 1h1m-1 1h1m-1 1h1m-1 1h1m-1 1h1m-1 1h1m-1 1h1m0 1h1m-1 1h1m-1 1h1m-1 1h1m-1 1h1m-1 1h1m-1 1h1m0 1h1m-1 1h1m-1 1h1m-1 1h1m-1 1h1m-1 1h1m-1 1h1m0 1h1m-1 1h1m-1 1h1m-1 1h1m-1 1h1m-1 1h1m-1 1h1m0 1h1m-1 1h1m-1 1h1m-1 1h1m-1 1h1m-1 1h1m-1 1h1m0 1h1m-1 1h1m-1 1h1m-1 1h1m-1 1h1m-1 1h1m-1 1h1m0 1h1m-1 1h1m-1 1h1m-1 1h1m-1 1h1m-1 1h1m-1 1h1m-1 1h1m0 1h1m-1 1h1m-1 1h1m-1 1h1m-1 1h1m-1 1h1m-1 1h1m-1 1h1m-1 1h1m0 1h1m-1 1h1m-1 1h1m-1 1h1m-1 1h1m-1 1h1m-1 1h1m-1 1h1m-1 1h1m-1 1h1m0 1h1m-1 1h1m-1 1h1m-1 1h1m-1 1h1m-1 1h1m-1 1h1m-1 1h1m-1 1h1m-1 1h1m0 1h1m-1 1h1m-1 1h1m-1 1h1m-1 1h1m-1 1h1m-1 1h1m-1 1h1m-1 1h1m-1 1h1m0 1h1m-1 1h1m-1 1h1m-1 1h1m-1 1h1m-1 1h1m-1 1h1m-1 1h1m-1 1h1m0 1h1m-1 1h1m-1 1h1m-1 1h1m-1 1h1m-1 1h1m-1 1h1m-1 1h1m0 1h1m-1 1h1m-1 1h1m-1 1h1m-1 1h1m-1 1h1m-1 1h1m-1 1h1m-1 1h1m-1 1h1m-1 1h1m-1 1h1m-1 1h1m0 1h1m-1 1h1m-1 1h1m-1 1h1m-1 1h1m-1 1h1m-1 1h1m-1 1h1m-1 1h1m-1 1h1m-1 1h1m0 1h1m-1 1h1m-1 1h1m-1 1h1m-1 1h1m-1 1h1m0 1h1m-1 1h1m-1 1h1m-1 1h1m-1 1h1m-1 1h1m-1 1h1m-1 1h1m-1 1h1m-1 1h1m0 1h1m-1 1h1m-1 1h1m-1 1h1m-1 1h1m-1 1h1m-1 1h1m-1 1h1m-1 1h1m-1 1h1m-1 1h1m-1 1h1m0 1h1m-1 1h1m-1 1h1m-1 1h1m-1 1h1m-1 1h1m-1 1h1m-1 1h1m-1 1h1m-1 1h1m-1 1h1m-1 1h1" stroke="#ff00ff" fill="none"/>
<path d="M484 724.5h1m-2 1h1m-1 1h1m-2 1h1m-1 1h1m-2 1h1m-2 1h1m-1 1h1m-2 1h1m-1 1h1m-2 1h1" stroke="#ff00ff" fill="none"/>
<path d="M484 724.5h1m0 1h2m0 1h1m0 1h1m0 1h2m0 1h1m0 1h2m0 1h1m0 1h1m0 1h2m0 1h1" stroke="#ff00ff" fill="none"/>
</g>
<rect x="67.5" y="607.5" width="43" height="17" fill="#000" stroke="#ffff00"/>
<text x="89.5" y="620.8" fill="#ffff00" font-size="13" text-anchor="middle" textLength="35" lengthAdjust="spacingAndGlyphs">CAPE</text>
<rect x="67.5" y="636.5" width="57" height="17" fill="#000" stroke="#e07000"/>
<text x="96" y="649.8" fill="#e07000" font-size="13" text-anchor="middle" textLength="49" lengthAdjust="spacingAndGlyphs">CINH * 5</text>
<rect x="625.5" y="715.5" width="30" height="17" fill="#000" stroke="#ff00ff"/>
<text x="640.5" y="728.8" fill="#ff00ff" font-size="13" text-anchor="middle" textLength="22" lengthAdjust="spacingAndGlyphs">LCL</text>
<rect x="336.5" y="655.5" width="7" height="7" fill="#c0c000"/>
<text x="340.0" y="661.8" fill="#404000" font-size="8" text-anchor="middle" font-weight="bold">3</text>
<rect x="258" y="682" width="7" height="7" fill="#c0c000"/>
<text x="261.5" y="688.3" fill="#404000" font-size="8" text-anchor="middle" font-weight="bold">2</text>
<rect x="200" y="707" width="7" height="7" fill="#c0c000"/>
<text x="203.5" y="713.3" fill="#404000" font-size="8" text-anchor="middle" font-weight="bold">1</text>
<line x1="761.5" y1="40" x2="761.5" y2="770" stroke="#00ff00"/>
<line x1="826.5" y1="40" x2="826.5" y2="770" stroke="#ff0080"/>
<text x="761" y="31.8" fill="#00ff00" font-size="13" text-anchor="middle" font-weight="bold" textLength="27.5" lengthAdjust="spacingAndGlyphs">OBS</text>
<text x="827" y="31.8" fill="#ff0080" font-size="13" text-anchor="middle" font-weight="bold" textLength="17.5" lengthAdjust="spacingAndGlyphs">SR</text>
<path d="M760 218.5h2m64 0h1m-70 1h3m64 0h2m-71 1h2m65 0h2m-72 1h3m65 0h2m-73 1h3m66 0h2m-73 1h2m68 0h1m-74 1h3m68 0h2m-76 1h3m69 0h2m-76 1h2m70 0h2m-77 1h3m71 0h1m-77 1h2m72 0h2m-4 1h2m-4 1h2m-4 1h2m-3 1h1m-41 89h1m64 0h1m-68 1h2m64 0h1m-68 1h1m66 0h1m-70 1h2m66 0h1m-70 1h1m67 0h1m-71 1h2m67 0h1m-71 1h1m69 0h1m-73 1h2m69 0h1m-73 1h1m70 0h1m-74 1h2m70 0h1m-74 1h1m72 0h1m-76 1h2m72 0h1m-76 1h1m73 0h1m-77 1h2m73 0h1m-77 1h1m75 0h1m-79 1h2m75 0h1m-79 1h1m76 0h1m-2 1h1m-1 1h1m-2 1h1m-2 1h1m-2 1h1m-1 1h1m-2 1h1m-49 50h1m64 0h1m-68 1h2m64 0h1m-69 1h2m65 0h1m-70 1h2m66 0h1m-71 1h2m67 0h1m-71 1h1m67 0h2m-72 1h2m67 0h1m-72 1h2m68 0h1m-73 1h2m69 0h1m-73 1h1m70 0h1m-74 1h2m70 0h1m-75 1h2m71 0h1m-76 1h2m72 0h1m-77 1h2m73 0h1m-77 1h1m73 0h2m-3 1h1m-2 1h1m-2 1h1m-2 1h1m-2 1h1m-45 36h1m64 0h1m-68 1h2m64 0h1m-68 1h1m66 0h1m-70 1h2m66 0h1m-70 1h1m67 0h1m-71 1h2m67 0h1m-71 1h1m69 0h1m-73 1h2m69 0h1m-73 1h1m70 0h1m-74 1h2m70 0h1m-74 1h1m72 0h1m-76 1h2m72 0h1m-76 1h1m73 0h1m-77 1h2m73 0h1m-77 1h1m75 0h1m-79 1h2m75 0h1m-79 1h1m76 0h1m-2 1h1m-1 1h1m-2 1h1m-2 1h1m-2 1h1m-1 1h1m-2 1h1m-49 21h1m64 0h1m-68 1h2m64 0h1m-68 1h1m65 0h1m-69 1h2m66 0h1m-71 1h2m67 0h1m-71 1h1m68 0h1m-72 1h2m68 0h1m-72 1h1m69 0h1m-73 1h2m69 0h1m-74 1h2m71 0h1m-75 1h1m72 0h1m-76 1h2m72 0h1m-76 1h1m73 0h1m-77 1h2m73 0h1m-78 1h2m75 0h1m-79 1h1m76 0h1m-2 1h1m-2 1h1m-2 1h1m-2 1h1m-1 1h1m-2 1h1m-2 1h1m-48 14h1m64 0h1m-68 1h2m64 0h1m-69 1h2m65 0h1m-70 1h2m66 0h1m-71 1h2m67 0h1m-72 1h2m67 0h2m-73 1h2m68 0h1m-73 1h2m69 0h1m-74 1h2m70 0h1m-75 1h2m71 0h1m-76 1h2m72 0h1m-77 1h2m73 0h1m-78 1h2m74 0h1m-79 1h2m75 0h1m-3 1h2m-3 1h1m-2 1h1m-2 1h1m-2 1h1m-2 1h1m-45 12h1m64 0h1m-68 1h2m64 0h1m-69 1h2m64 0h2m-70 1h2m65 0h1m-70 1h2m66 0h1m-71 1h2m67 0h1m-72 1h2m68 0h1m-73 1h2m68 0h2m-74 1h2m69 0h1m-74 1h2m70 0h1m-75 1h2m71 0h1m-76 1h2m71 0h2m-77 1h2m72 0h1m-77 1h2m73 0h1m-2 1h1m-2 1h1m-3 1h2m-3 1h1m-2 1h1m-44 8h1m64 0h1m-68 1h2m64 0h1m-69 1h2m65 0h1m-70 1h2m66 0h1m-71 1h2m67 0h1m-72 1h2m67 0h2m-73 1h2m68 0h1m-73 1h2m69 0h1m-74 1h2m70 0h1m-75 1h2m71 0h1m-76 1h2m72 0h1m-77 1h2m73 0h1m-78 1h2m74 0h1m-79 1h2m75 0h1m-3 1h2m-3 1h1m-2 1h1m-2 1h1m-2 1h1m-2 1h1m-45 5h1m64 0h1m-68 1h2m64 0h1m-69 1h2m65 0h1m-70 1h2m67 0h1m-72 1h2m68 0h1m-73 1h2m69 0h1m-74 1h2m70 0h1m-75 1h2m72 0h1m-77 1h2m73 0h1m-78 1h2m74 0h1m-79 1h2m75 0h1m-80 1h2m76 0h1m-81 1h2m78 0h1m-82 1h1m79 0h1m-2 1h1m-2 1h1m-2 1h1m-1 1h1m-2 1h1m-2 1h1m-51 1h1m48 0h1m15 0h1m-68 1h2m49 0h1m15 0h1m-69 1h1m50 0h1m15 0h1m-70 1h2m50 0h1m16 0h1m-71 1h1m68 0h1m-72 1h2m69 0h1m-73 1h1m70 0h1m-74 1h2m71 0h1m-75 1h1m72 0h1m-76 1h2m73 0h1m-77 1h1m74 0h1m-78 1h2m75 0h1m-79 1h1m76 0h1m-80 1h2m77 0h1m-81 1h1m79 0h1m-83 1h2m79 0h1m-83 1h1m81 0h1m-2 1h1m-58 1h1m56 0h1m7 0h1m-68 1h2m56 0h1m8 0h1m-69 1h1m58 0h1m8 0h1m-70 1h1m58 0h1m8 0h1m-71 1h2m59 0h1m8 0h1m-72 1h1m60 0h1m9 0h1m-73 1h1m61 0h1m9 0h1m-75 1h2m61 0h1m10 0h1m-76 1h1m63 0h1m10 0h1m-77 1h1m74 0h1m-78 1h2m75 0h1m-79 1h1m77 0h1m-80 1h1m78 0h1m-82 1h2m79 0h1m-83 1h1m81 0h1m-84 1h1m81 0h1m-85 1h2m82 0h1m-86 1h1m22 0h1m61 0h1m2 0h1m-67 1h1m62 0h1m2 0h1m-69 1h2m63 0h1m2 0h1m-70 1h1m65 0h1m2 0h1m-71 1h1m65 0h1m3 0h1m-72 1h1m5 0h1m60 0h1m3 0h1m-73 1h1m4 0h2m61 0h1m3 0h1m-75 1h2m4 0h1m63 0h1m3 0h2m-77 1h1m5 0h1m64 0h1m3 0h2m-78 1h1m4 0h2m65 0h1m3 0h2m-79 1h1m4 0h1m66 0h1m4 0h2m-81 1h2m4 0h1m67 0h1m4 0h1m1 0h1m-83 1h1m4 0h2m68 0h1m4 0h1m1 0h1m-84 1h1m4 0h1m75 0h1m1 0h1m-85 1h1m4 0h1m76 0h1m1 0h1m-86 1h1m3 0h2m78 0h1m1 0h1m-89 1h2m3 0h1m80 0h1m1 0h1m-90 1h1m4 0h1m81 0h1m1 0h1m-91 1h1m3 0h2m16 0h1m64 0h2m1 0h1m-88 1h1m16 0h2m66 0h1m2 0h1m-90 1h1m16 0h1m68 0h2m1 0h1m-92 1h2m16 0h1m69 0h1m1 0h2m-93 1h1m16 0h2m70 0h1m2 0h1m-77 1h1m72 0h1m3 0h1m-79 1h1m73 0h1m3 0h1m-81 1h2m74 0h1m3 0h2m-83 1h1m76 0h1m3 0h1m1 0h1m-85 1h1m77 0h1m4 0h1m1 0h1m-88 1h2m78 0h1m4 0h1m2 0h1m-90 1h1m80 0h1m4 0h1m3 0h1m-92 1h1m14 0h2m64 0h3m3 0h1m4 0h1m-95 1h2m12 0h3m69 0h6m3 0h1m-97 1h1m12 0h2m76 0h1m1 0h6m-100 1h1m10 0h3m78 0h1m6 0h7m-108 1h2m8 0h3m88 0h1m6 0h6m-115 1h1m8 0h2m92 0h1m11 0h4m-113 1h3m95 0h1m-102 1h3m99 0h1m-105 1h2m103 0h1m-109 1h3m106 0h1m-112 1h2m21 1h5m64 0h31m-110 1h10m93 0h4m-117 1h10m99 0h4m-118 1h5m2 0h1m101 0h5m-113 1h5m2 0h1m96 0h4m-103 1h10m85 0h4m-94 1h1m4 0h9m72 0h4m-100 1h3m8 0h1m12 0h5m64 0h3m-93 1h4m5 0h2m-7 1h4m3 0h1m105 0h4m-113 1h5m37 0h1m60 0h6m-105 1h4m32 0h2m55 0h6m-96 1h5m26 0h2m51 0h6m-89 1h1m3 0h4m20 0h2m47 0h6m-82 1h1m6 0h2m16 0h2m46 0h3m-75 1h2m20 0h2m-22 1h1m17 0h2m11 0h2m-32 1h1m14 0h2m10 0h3m64 0h6m-99 1h2m10 0h2m10 0h2m57 0h10m-91 1h1m7 0h2m9 0h3m49 0h10m-80 1h1m4 0h2m8 0h3m9 0h2m36 0h5m20 0h6m-93 1h2m8 0h2m8 0h4m53 0h10m-89 1h2m7 0h3m7 0h3m47 0h10m-80 1h1m6 0h3m6 0h4m45 0h5m20 0h6m-91 1h2m6 0h3m64 0h10m-88 1h3m4 0h4m57 0h10m10 0h6m-96 1h2m4 0h3m56 0h5m10 0h10m-88 1h4m64 0h10m-80 1h2m63 0h5" stroke="#fff" fill="none"/>
<text x="62" y="28.5" fill="#ffffff" font-size="16" font-weight="bold" textLength="114" lengthAdjust="spacingAndGlyphs">Station: Zürich</text>
<text x="202.5" y="28.5" fill="#ffffff" font-size="16" font-weight="bold" textLength="128" lengthAdjust="spacingAndGlyphs">Date: 12.07.2023</text>
<text x="353" y="28.5" fill="#ffffff" font-size="16" font-weight="bold" textLength="91.5" lengthAdjust="spacingAndGlyphs">Time: 1430Z</text>
<text x="52.5" y="54.8" fill="#ffffff" font-size="13.5" text-anchor="end" textLength="19.5" lengthAdjust="spacingAndGlyphs">100</text>
<text x="52.5" y="325.8" fill="#ffffff" font-size="13.5" text-anchor="end" textLength="19.5" lengthAdjust="spacingAndGlyphs">200</text>
<text x="52.5" y="453.8" fill="#ffffff" font-size="13.5" text-anchor="end" textLength="19.5" lengthAdjust="spacingAndGlyphs">300</text>
<text x="52.5" y="533.8" fill="#ffffff" font-size="13.5" text-anchor="end" textLength="19.5" lengthAdjust="spacingAndGlyphs">400</text>
<text x="52.5" y="590.8" fill="#ffffff" font-size="13.5" text-anchor="end" textLength="19.5" lengthAdjust="spacingAndGlyphs">500</text>
<text x="52.5" y="634.8" fill="#ffffff" font-size="13.5" text-anchor="end" textLength="19.5" lengthAdjust="spacingAndGlyphs">600</text>
<text x="52.5" y="669.8" fill="#ffffff" font-size="13.5" text-anchor="end" textLength="19.5" lengthAdjust="spacingAndGlyphs">700</text>
<text x="52.5" y="698.8" fill="#ffffff" font-size="13.5" text-anchor="end" textLength="19.5" lengthAdjust="spacingAndGlyphs">800</text>
<text x="52.5" y="723.8" fill="#ffffff" font-size="13.5" text-anchor="end" textLength="19.5" lengthAdjust="spacingAndGlyphs">900</text>
<text x="52.5" y="744.8" fill="#ffffff" font-size="13.5" text-anchor="end" textLength="26.0" lengthAdjust="spacingAndGlyphs">1000</text>
<text x="670.5" y="54.8" fill="#ffffff" font-size="13.5" textLength="44.5" lengthAdjust="spacingAndGlyphs">16600m</text>
<text x="670.5" y="325.8" fill="#ffffff" font-size="13.5" textLength="44.5" lengthAdjust="spacingAndGlyphs">12204m</text>
<text x="670.5" y="453.8" fill="#ffffff" font-size="13.5" textLength="37.9" lengthAdjust="spacingAndGlyphs">9536m</text>
<text x="670.5" y="533.8" fill="#ffffff" font-size="13.5" textLength="37.9" lengthAdjust="spacingAndGlyphs">7483m</text>
<text x="670.5" y="590.8" fill="#ffffff" font-size="13.5" textLength="37.9" lengthAdjust="spacingAndGlyphs">5813m</text>
<text x="670.5" y="634.8" fill="#ffffff" font-size="13.5" textLength="37.9" lengthAdjust="spacingAndGlyphs">4394m</text>
<text x="670.5" y="669.8" fill="#ffffff" font-size="13.5" textLength="37.9" lengthAdjust="spacingAndGlyphs">3148m</text>
<text x="670.5" y="698.8" fill="#ffffff" font-size="13.5" textLength="37.9" lengthAdjust="spacingAndGlyphs">2045m</text>
<text x="670.5" y="723.8" fill="#ffffff" font-size="13.5" textLength="37.9" lengthAdjust="spacingAndGlyphs">1053m</text>
<line x1="61.5" y1="749" x2="61.5" y2="754" stroke="#fff"/>
<text x="59.2" y="767.6" fill="#ffffff" font-size="13" text-anchor="middle" textLength="17.7" lengthAdjust="spacingAndGlyphs">-50</text>
<line x1="61.5" y1="788" x2="61.5" y2="792" stroke="#fff"/>
<text x="61.5" y="805" fill="#ffffff" font-size="13" text-anchor="middle" textLength="5.6" lengthAdjust="spacingAndGlyphs">0</text>
<line x1="61.5" y1="826" x2="61.5" y2="830" stroke="#fff"/>
<text x="61.5" y="842.6" fill="#ffffff" font-size="13" text-anchor="middle" textLength="5.6" lengthAdjust="spacingAndGlyphs">0</text>
<line x1="121.5" y1="749" x2="121.5" y2="754" stroke="#fff"/>
<text x="119.2" y="767.6" fill="#ffffff" font-size="13" text-anchor="middle" textLength="17.7" lengthAdjust="spacingAndGlyphs">-40</text>
<line x1="121.5" y1="788" x2="121.5" y2="792" stroke="#fff"/>
<text x="121.5" y="805" fill="#ffffff" font-size="13" text-anchor="middle" textLength="12.4" lengthAdjust="spacingAndGlyphs">10</text>
<line x1="121.5" y1="826" x2="121.5" y2="830" stroke="#fff"/>
<text x="121.5" y="842.6" fill="#ffffff" font-size="13" text-anchor="middle" textLength="19.2" lengthAdjust="spacingAndGlyphs">300</text>
<line x1="181.5" y1="749" x2="181.5" y2="754" stroke="#fff"/>
<text x="179.2" y="767.6" fill="#ffffff" font-size="13" text-anchor="middle" textLength="17.7" lengthAdjust="spacingAndGlyphs">-30</text>
<line x1="181.5" y1="788" x2="181.5" y2="792" stroke="#fff"/>
<text x="181.5" y="805" fill="#ffffff" font-size="13" text-anchor="middle" textLength="12.4" lengthAdjust="spacingAndGlyphs">20</text>
<line x1="181.5" y1="826" x2="181.5" y2="830" stroke="#fff"/>
<text x="181.5" y="842.6" fill="#ffffff" font-size="13" text-anchor="middle" textLength="19.2" lengthAdjust="spacingAndGlyphs">600</text>
<line x1="241.5" y1="749" x2="241.5" y2="754" stroke="#fff"/>
<text x="239.2" y="767.6" fill="#ffffff" font-size="13" text-anchor="middle" textLength="17.7" lengthAdjust="spacingAndGlyphs">-20</text>
<line x1="241.5" y1="788" x2="241.5" y2="792" stroke="#fff"/>
<text x="241.5" y="805" fill="#ffffff" font-size="13" text-anchor="middle" textLength="12.4" lengthAdjust="spacingAndGlyphs">30</text>
<line x1="241.5" y1="826" x2="241.5" y2="830" stroke="#fff"/>
<text x="241.5" y="842.6" fill="#ffffff" font-size="13" text-anchor="middle" textLength="19.2" lengthAdjust="spacingAndGlyphs">900</text>
<line x1="301.5" y1="749" x2="301.5" y2="754" stroke="#fff"/>
<text x="299.2" y="767.6" fill="#ffffff" font-size="13" text-anchor="middle" textLength="17.7" lengthAdjust="spacingAndGlyphs">-10</text>
<line x1="301.5" y1="788" x2="301.5" y2="792" stroke="#fff"/>
<text x="301.5" y="805" fill="#ffffff" font-size="13" text-anchor="middle" textLength="12.4" lengthAdjust="spacingAndGlyphs">40</text>
<line x1="301.5" y1="826" x2="301.5" y2="830" stroke="#fff"/>
<text x="301.5" y="842.6" fill="#ffffff" font-size="13" text-anchor="middle" textLength="26.0" lengthAdjust="spacingAndGlyphs">1200</text>
<line x1="361.5" y1="749" x2="361.5" y2="754" stroke="#fff"/>
<text x="361.5" y="767.6" fill="#ffffff" font-size="13" text-anchor="middle" textLength="5.6" lengthAdjust="spacingAndGlyphs">0</text>
<line x1="361.5" y1="788" x2="361.5" y2="792" stroke="#fff"/>
<text x="361.5" y="805" fill="#ffffff" font-size="13" text-anchor="middle" textLength="12.4" lengthAdjust="spacingAndGlyphs">50</text>
<line x1="361.5" y1="826" x2="361.5" y2="830" stroke="#fff"/>
<text x="361.5" y="842.6" fill="#ffffff" font-size="13" text-anchor="middle" textLength="26.0" lengthAdjust="spacingAndGlyphs">1500</text>
<line x1="421.5" y1="749" x2="421.5" y2="754" stroke="#fff"/>
<text x="421.5" y="767.6" fill="#ffffff" font-size="13" text-anchor="middle" textLength="12.4" lengthAdjust="spacingAndGlyphs">10</text>
<line x1="421.5" y1="788" x2="421.5" y2="792" stroke="#fff"/>
<text x="421.5" y="805" fill="#ffffff" font-size="13" text-anchor="middle" textLength="12.4" lengthAdjust="spacingAndGlyphs">60</text>
<line x1="421.5" y1="826" x2="421.5" y2="830" stroke="#fff"/>
<text x="421.5" y="842.6" fill="#ffffff" font-size="13" text-anchor="middle" textLength="26.0" lengthAdjust="spacingAndGlyphs">1800</text>
<line x1="481.5" y1="749" x2="481.5" y2="754" stroke="#fff"/>
<text x="481.5" y="767.6" fill="#ffffff" font-size="13" text-anchor="middle" textLength="12.4" lengthAdjust="spacingAndGlyphs">20</text>
<line x1="481.5" y1="788" x2="481.5" y2="792" stroke="#fff"/>
<text x="481.5" y="805" fill="#ffffff" font-size="13" text-anchor="middle" textLength="12.4" lengthAdjust="spacingAndGlyphs">70</text>
<line x1="481.5" y1="826" x2="481.5" y2="830" stroke="#fff"/>
<text x="481.5" y="842.6" fill="#ffffff" font-size="13" text-anchor="middle" textLength="26.0" lengthAdjust="spacingAndGlyphs">2100</text>
<line x1="541.5" y1="749" x2="541.5" y2="754" stroke="#fff"/>
<text x="541.5" y="767.6" fill="#ffffff" font-size="13" text-anchor="middle" textLength="12.4" lengthAdjust="spacingAndGlyphs">30</text>
<line x1="541.5" y1="788" x2="541.5" y2="792" stroke="#fff"/>
<text x="541.5" y="805" fill="#ffffff" font-size="13" text-anchor="middle" textLength="12.4" lengthAdjust="spacingAndGlyphs">80</text>
<line x1="541.5" y1="826" x2="541.5" y2="830" stroke="#fff"/>
<text x="541.5" y="842.6" fill="#ffffff" font-size="13" text-anchor="middle" textLength="26.0" lengthAdjust="spacingAndGlyphs">2400</text>
<line x1="601.5" y1="749" x2="601.5" y2="754" stroke="#fff"/>
<text x="601.5" y="767.6" fill="#ffffff" font-size="13" text-anchor="middle" textLength="12.4" lengthAdjust="spacingAndGlyphs">40</text>
<line x1="601.5" y1="788" x2="601.5" y2="792" stroke="#fff"/>
<text x="601.5" y="805" fill="#ffffff" font-size="13" text-anchor="middle" textLength="12.4" lengthAdjust="spacingAndGlyphs">90</text>
<line x1="601.5" y1="826" x2="601.5" y2="830" stroke="#fff"/>
<text x="601.5" y="842.6" fill="#ffffff" font-size="13" text-anchor="middle" textLength="26.0" lengthAdjust="spacingAndGlyphs">2700</text>
<line x1="661.5" y1="749" x2="661.5" y2="754" stroke="#fff"/>
<text x="661.5" y="767.6" fill="#ffffff" font-size="13" text-anchor="middle" textLength="12.4" lengthAdjust="spacingAndGlyphs">50</text>
<line x1="661.5" y1="788" x2="661.5" y2="792" stroke="#fff"/>
<text x="661.5" y="805" fill="#ffffff" font-size="13" text-anchor="middle" textLength="19.2" lengthAdjust="spacingAndGlyphs">100</text>
<line x1="661.5" y1="826" x2="661.5" y2="830" stroke="#fff"/>
<text x="661.5" y="842.6" fill="#ffffff" font-size="13" text-anchor="middle" textLength="26.0" lengthAdjust="spacingAndGlyphs">3000</text>
<line x1="61.5" y1="863" x2="61.5" y2="867" stroke="#fff"/>
<text x="59.2" y="879.3" fill="#ffffff" font-size="13" text-anchor="middle" textLength="24.5" lengthAdjust="spacingAndGlyphs">-100</text>
<line x1="136.5" y1="863" x2="136.5" y2="867" stroke="#fff"/>
<text x="134.2" y="879.3" fill="#ffffff" font-size="13" text-anchor="middle" textLength="17.7" lengthAdjust="spacingAndGlyphs">-50</text>
<line x1="211.5" y1="863" x2="211.5" y2="867" stroke="#fff"/>
<text x="211.5" y="879.3" fill="#ffffff" font-size="13" text-anchor="middle" textLength="5.6" lengthAdjust="spacingAndGlyphs">0</text>
<line x1="286.5" y1="863" x2="286.5" y2="867" stroke="#fff"/>
<text x="286.5" y="879.3" fill="#ffffff" font-size="13" text-anchor="middle" textLength="12.4" lengthAdjust="spacingAndGlyphs">50</text>
<line x1="361.5" y1="863" x2="361.5" y2="867" stroke="#fff"/>
<text x="361.5" y="879.3" fill="#ffffff" font-size="13" text-anchor="middle" textLength="19.2" lengthAdjust="spacingAndGlyphs">100</text>
<line x1="436.5" y1="863" x2="436.5" y2="867" stroke="#fff"/>
<text x="436.5" y="879.3" fill="#ffffff" font-size="13" text-anchor="middle" textLength="19.2" lengthAdjust="spacingAndGlyphs">150</text>
<line x1="511.5" y1="863" x2="511.5" y2="867" stroke="#fff"/>
<text x="511.5" y="879.3" fill="#ffffff" font-size="13" text-anchor="middle" textLength="19.2" lengthAdjust="spacingAndGlyphs">200</text>
<line x1="586.5" y1="863" x2="586.5" y2="867" stroke="#fff"/>
<text x="586.5" y="879.3" fill="#ffffff" font-size="13" text-anchor="middle" textLength="19.2" lengthAdjust="spacingAndGlyphs">250</text>
<line x1="661.5" y1="863" x2="661.5" y2="867" stroke="#fff"/>
<text x="661.5" y="879.3" fill="#ffffff" font-size="13" text-anchor="middle" textLength="19.2" lengthAdjust="spacingAndGlyphs">300</text>
<text x="361.5" y="781" fill="#ffffff" font-size="13" text-anchor="middle" textLength="172" lengthAdjust="spacingAndGlyphs">Temperature, Dewpoint [ °C ]</text>
<text x="361.5" y="819" fill="#ffffff" font-size="13" text-anchor="middle" textLength="107" lengthAdjust="spacingAndGlyphs">Windspeed [ knt ]</text>
<text x="361.5" y="857" fill="#ffffff" font-size="13" text-anchor="middle" textLength="138" lengthAdjust="spacingAndGlyphs">CAPE, CINH * 5 [ J/kg ]</text>
<text x="361.5" y="893" fill="#ffffff" font-size="13" text-anchor="middle" textLength="204" lengthAdjust="spacingAndGlyphs">Storm Relative Helicity [ m^2/s^2 ]</text>
<text x="894" y="39.9" fill="#ffffff" font-size="13" text-decoration="underline">Parameter</text>
<text x="1124" y="39.9" fill="#ffffff" font-size="13" text-anchor="end" text-decoration="underline">Value LCL</text>
<text x="1214" y="39.9" fill="#ffffff" font-size="13" text-anchor="end" text-decoration="underline">Value CCL</text>
<text x="1230" y="39.9" fill="#ffffff" font-size="13" text-decoration="underline">Unit</text>
<text x="894" y="61.9" fill="#fff" font-size="13">Convective Temperature:</text>
<text x="1124" y="61.9" fill="#ff0000" font-size="13" text-anchor="end">25.45</text>
<text x="1230" y="61.9" fill="#fff" font-size="13">[°C]</text>
<text x="894" y="78.9" fill="#fff" font-size="13">Snowfall Height:</text>
<text x="1124" y="78.9" fill="#ffffff" font-size="13" text-anchor="end">3483.04</text>
<text x="1230" y="78.9" fill="#fff" font-size="13">[m]</text>
<text x="894" y="104.3" fill="#ffffff" font-size="13" text-decoration="underline">Parcels: Using 50mB mean layer LCL + CCL</text>
<text x="894" y="124.1" fill="#fff" font-size="13">Lifted Index:</text>
<text x="1124" y="124.1" fill="#ff0000" font-size="13" text-anchor="end">-4.71</text>
<text x="1214" y="124.1" fill="#ff0000" font-size="13" text-anchor="end">-6.53</text>
<text x="1230" y="124.1" fill="#fff" font-size="13">[°C]</text>
<text x="894" y="141.1" fill="#fff" font-size="13">CAPE ML:</text>
<text x="1124" y="141.1" fill="#ff0000" font-size="13" text-anchor="end">938.20</text>
<text x="1214" y="141.1" fill="#ff0000" font-size="13" text-anchor="end">1790.51</text>
<text x="1230" y="141.1" fill="#fff" font-size="13">[J/kg]</text>
<text x="894" y="158.1" fill="#fff" font-size="13">CINH | LSI (LCL: 924mB):</text>
<text x="1124" y="158.1" fill="#ff0000" font-size="13" text-anchor="end">55.34</text>
<text x="1124" y="158.1" fill="#ffffff" font-size="13">,</text>
<text x="1136" y="158.1" fill="#ff0000" font-size="13">0.59</text>
<text x="1230" y="158.1" fill="#fff" font-size="13">[J/kg], [°C]</text>
<text x="894" y="175.1" fill="#fff" font-size="13">CAPE SFC:</text>
<text x="1124" y="175.1" fill="#ffff00" font-size="13" text-anchor="end">1025.13</text>
<text x="1214" y="175.1" fill="#ff0000" font-size="13" text-anchor="end">1941.13</text>
<text x="1230" y="175.1" fill="#fff" font-size="13">[J/kg]</text>
<text x="894" y="192.1" fill="#fff" font-size="13">CAPE MU | CINH MU:</text>
<text x="1124" y="192.1" fill="#ffff00" font-size="13" text-anchor="end">1052.49</text>
<text x="1124" y="192.1" fill="#ffffff" font-size="13">,</text>
<text x="1136" y="192.1" fill="#ff0000" font-size="13">45.34</text>
<text x="1230" y="192.1" fill="#fff" font-size="13">[J/kg]</text>
<text x="894" y="209.1" fill="#fff" font-size="13">3km SFC CAPE | IL CAPE:</text>
<text x="1124" y="209.1" fill="#00ff00" font-size="13" text-anchor="end">7.24</text>
<text x="1124" y="209.1" fill="#ffffff" font-size="13">,</text>
<text x="1136" y="209.1" fill="#ff0000" font-size="13">2039.81</text>
<text x="1230" y="209.1" fill="#fff" font-size="13">[J/kg]</text>
<text x="894" y="226.1" fill="#fff" font-size="13">DCAPE (LFS = 550mB):</text>
<text x="1124" y="226.1" fill="#00ff00" font-size="13" text-anchor="end">223.84</text>
<text x="1230" y="226.1" fill="#fff" font-size="13">[J/kg]</text>
<text x="894" y="243.1" fill="#fff" font-size="13">850-600 Lapse Rate:</text>
<text x="1124" y="243.1" fill="#ffff00" font-size="13" text-anchor="end">16.72</text>
<text x="1230" y="243.1" fill="#fff" font-size="13">[°C]</text>
<text x="894" y="260.1" fill="#fff" font-size="13">FM Hail Size | SHIP | LHP:</text>
<text x="1124" y="260.1" fill="#ff0000" font-size="13" text-anchor="end">2.5 - 3.8</text>
<text x="1124" y="260.1" fill="#ffffff" font-size="13">,</text>
<text x="1136" y="260.1" fill="#ff0000" font-size="13">1.79</text>
<text x="1161.3" y="260.1" fill="#ffffff" font-size="13">,</text>
<text x="1172.9" y="260.1" fill="#00ff00" font-size="13">0.68</text>
<text x="1230" y="260.1" fill="#fff" font-size="13">[cm], [1], [1]</text>
<text x="894" y="277.1" fill="#fff" font-size="13">Estofex Exp. Hail Param:</text>
<text x="1124" y="277.1" fill="#ff0000" font-size="13" text-anchor="end">3.55</text>
<text x="1230" y="277.1" fill="#fff" font-size="13">[cm]</text>
<text x="894" y="294.1" fill="#fff" font-size="13">Max. Hail Size (OLD, MU, IL):</text>
<text x="1124" y="294.1" fill="#ff0000" font-size="13" text-anchor="end">3.89</text>
<text x="1124" y="294.1" fill="#ffffff" font-size="13">,</text>
<text x="1136" y="294.1" fill="#ff0000" font-size="13">4.08</text>
<text x="1161.3" y="294.1" fill="#ffffff" font-size="13">,</text>
<text x="1172.9" y="294.1" fill="#ff0000" font-size="13">9.24</text>
<text x="1230" y="294.1" fill="#fff" font-size="13">[cm]</text>
<text x="894" y="313.8" fill="#fff" font-size="13">LCL / CCL (AGL):</text>
<text x="1124" y="313.8" fill="#ff0000" font-size="13" text-anchor="end">415.15</text>
<text x="1214" y="313.8" fill="#ff0000" font-size="13" text-anchor="end">899.62</text>
<text x="1230" y="313.8" fill="#fff" font-size="13">[m]</text>
<text x="894" y="330.8" fill="#fff" font-size="13">Convective Height:</text>
<text x="1124" y="330.8" fill="#ff0000" font-size="13" text-anchor="end">10.58</text>
<text x="1214" y="330.8" fill="#ff0000" font-size="13" text-anchor="end">10.99</text>
<text x="1230" y="330.8" fill="#fff" font-size="13">[km]</text>
<text x="894" y="356.2" fill="#ffffff" font-size="13" text-decoration="underline">Convective Indices</text>
<text x="894" y="375.9" fill="#fff" font-size="13">Showalter Index:</text>
<text x="1124" y="375.9" fill="#ff0000" font-size="13" text-anchor="end">-4.48</text>
<text x="1230" y="375.9" fill="#fff" font-size="13">[°C]</text>
<text x="894" y="392.9" fill="#fff" font-size="13">Modified Thompson Index:</text>
<text x="1124" y="392.9" fill="#ff0000" font-size="13" text-anchor="end">47.21</text>
<text x="1230" y="392.9" fill="#fff" font-size="13">[°C]</text>
<text x="894" y="409.9" fill="#fff" font-size="13">Total Totals Index:</text>
<text x="1124" y="409.9" fill="#ff0000" font-size="13" text-anchor="end">54.00</text>
<text x="1230" y="409.9" fill="#fff" font-size="13">[°C]</text>
<text x="894" y="426.9" fill="#fff" font-size="13">KO Index:</text>
<text x="1124" y="426.9" fill="#ff0000" font-size="13" text-anchor="end">-12.40</text>
<text x="1230" y="426.9" fill="#fff" font-size="13">[1]</text>
<text x="894" y="443.9" fill="#fff" font-size="13">Craven SigSvr / 1000:</text>
<text x="1124" y="443.9" fill="#ff0000" font-size="13" text-anchor="end">28.68</text>
<text x="1230" y="443.9" fill="#fff" font-size="13">[m^3/s^3]</text>
<text x="894" y="460.9" fill="#fff" font-size="13">SCP RM (new, old):</text>
<text x="1124" y="460.9" fill="#ff0000" font-size="13" text-anchor="end">1.55</text>
<text x="1124" y="460.9" fill="#ffffff" font-size="13">,</text>
<text x="1136" y="460.9" fill="#ff0000" font-size="13">2.03</text>
<text x="1230" y="460.9" fill="#fff" font-size="13">[1]</text>
<text x="894" y="477.9" fill="#fff" font-size="13">STP (new, old):</text>
<text x="1124" y="477.9" fill="#ff0000" font-size="13" text-anchor="end">0.49</text>
<text x="1124" y="477.9" fill="#ffffff" font-size="13">,</text>
<text x="1136" y="477.9" fill="#00ff00" font-size="13">0.08</text>
<text x="1230" y="477.9" fill="#fff" font-size="13">[1]</text>
<text x="894" y="494.9" fill="#fff" font-size="13">SB STP (fix) | CWASP:</text>
<text x="1124" y="494.9" fill="#00ff00" font-size="13" text-anchor="end">0.06</text>
<text x="1124" y="494.9" fill="#ffffff" font-size="13">,</text>
<text x="1136" y="494.9" fill="#ffff00" font-size="13">61.62</text>
<text x="1230" y="494.9" fill="#fff" font-size="13">[1], [%]</text>
<text x="894" y="511.9" fill="#fff" font-size="13">DCP | MMP | MSP:</text>
<text x="1124" y="511.9" fill="#ff0000" font-size="13" text-anchor="end">0.58</text>
<text x="1124" y="511.9" fill="#ffffff" font-size="13">,</text>
<text x="1136" y="511.9" fill="#ff0000" font-size="13">95.25</text>
<text x="1168.5" y="511.9" fill="#ffffff" font-size="13">,</text>
<text x="1180.1" y="511.9" fill="#00ff00" font-size="13">60.95</text>
<text x="1230" y="511.9" fill="#fff" font-size="13">[1], [%], [%]</text>
<text x="894" y="528.9" fill="#fff" font-size="13">MB Comp | SHERBE:</text>
<text x="1124" y="528.9" fill="#00ff00" font-size="13" text-anchor="end">1.00</text>
<text x="1124" y="528.9" fill="#ffffff" font-size="13">,</text>
<text x="1136" y="528.9" fill="#ff0000" font-size="13">1.31</text>
<text x="1230" y="528.9" fill="#fff" font-size="13">[1], [1]</text>
<text x="894" y="545.9" fill="#fff" font-size="13">Exp. Supercell Index CH:</text>
<text x="1124" y="545.9" fill="#ff0000" font-size="13" text-anchor="end">5.65</text>
<text x="1230" y="545.9" fill="#fff" font-size="13">[1]</text>
<text x="894" y="562.9" fill="#fff" font-size="13">SWISS 12 Index:</text>
<text x="1124" y="562.9" fill="#ff0000" font-size="13" text-anchor="end">-14.41</text>
<text x="1230" y="562.9" fill="#fff" font-size="13">[1]</text>
<text x="894" y="579.9" fill="#fff" font-size="13">Precipitable Water:</text>
<text x="1124" y="579.9" fill="#ff0000" font-size="13" text-anchor="end">41.84</text>
<text x="1230" y="579.9" fill="#fff" font-size="13">[mm]</text>
<text x="894" y="605.0" fill="#ffffff" font-size="13" text-decoration="underline">Wind Parameters</text>
<text x="894" y="624.9" fill="#fff" font-size="13">Storm Direction | Motion:</text>
<text x="1124" y="624.9" fill="#ffffff" font-size="13" text-anchor="end">264.96</text>
<text x="1124" y="624.9" fill="#ffffff" font-size="13">,</text>
<text x="1136" y="624.9" fill="#ff0000" font-size="13">24.88</text>
<text x="1230" y="624.9" fill="#fff" font-size="13">[°], [knt]</text>
<text x="894" y="641.9" fill="#fff" font-size="13">500m Critical Angle:</text>
<text x="1124" y="641.9" fill="#00ff00" font-size="13" text-anchor="end">352.97</text>
<text x="1230" y="641.9" fill="#fff" font-size="13">[°]</text>
<text x="894" y="661.9" fill="#fff" font-size="13">SR Wind Sfc-2km:</text>
<text x="1124" y="661.9" fill="#ff0000" font-size="13" text-anchor="end">17.57</text>
<text x="1230" y="661.9" fill="#fff" font-size="13">[knt]</text>
<text x="894" y="678.9" fill="#fff" font-size="13">SR Wind 4km-6km:</text>
<text x="1124" y="678.9" fill="#ff0000" font-size="13" text-anchor="end">26.14</text>
<text x="1230" y="678.9" fill="#fff" font-size="13">[knt]</text>
<text x="894" y="695.9" fill="#fff" font-size="13">SR Wind 9km-11km:</text>
<text x="1124" y="695.9" fill="#ff0000" font-size="13" text-anchor="end">41.77</text>
<text x="1230" y="695.9" fill="#fff" font-size="13">[knt] CL</text>
<text x="894" y="715.9" fill="#fff" font-size="13">Effective Shear 6000:</text>
<text x="1124" y="715.9" fill="#ff0000" font-size="13" text-anchor="end">59.42</text>
<text x="1230" y="715.9" fill="#fff" font-size="13">[knt]</text>
<text x="894" y="735.9" fill="#fff" font-size="13">Bulk Richardson Number:</text>
<text x="1124" y="735.9" fill="#ffff00" font-size="13" text-anchor="end">10.33</text>
<text x="1214" y="735.9" fill="#ffff00" font-size="13" text-anchor="end">19.71</text>
<text x="1230" y="735.9" fill="#fff" font-size="13">[1]</text>
<text x="894" y="755.8" fill="#fff" font-size="13">3km Effective SRH:</text>
<text x="1124" y="755.8" fill="#00ff00" font-size="13" text-anchor="end">85.13</text>
<text x="1230" y="755.8" fill="#fff" font-size="13">[m^2/s^2]</text>
<text x="894" y="772.8" fill="#fff" font-size="13">Max 3km SRH (0-2km) | AGL:</text>
<text x="1124" y="772.8" fill="#ff0000" font-size="13" text-anchor="end">211.48</text>
<text x="1124" y="772.8" fill="#ffffff" font-size="13">,</text>
<text x="1136" y="772.8" fill="#00ff00" font-size="13">2000.00</text>
<text x="1230" y="772.8" fill="#fff" font-size="13">[m^2/s^2], [m]</text>
<text x="894" y="792.8" fill="#fff" font-size="13">3km Energy Helicity Index:</text>
<text x="1124" y="792.8" fill="#00ff00" font-size="13" text-anchor="end">0.50</text>
<text x="1214" y="792.8" fill="#00ff00" font-size="13" text-anchor="end">0.95</text>
<text x="1230" y="792.8" fill="#fff" font-size="13">[1]</text>
<text x="894" y="809.8" fill="#fff" font-size="13">3km Vorticity Gen. Pot.:</text>
<text x="1124" y="809.8" fill="#ff0000" font-size="13" text-anchor="end">0.19</text>
<text x="1214" y="809.8" fill="#ff0000" font-size="13" text-anchor="end">0.27</text>
<text x="1230" y="809.8" fill="#fff" font-size="13">[m/s^2]</text>
<rect x="1079" y="827" width="15" height="8" fill="#00ff00"/>
<text x="1103" y="835.8" fill="#00ff00" font-size="13">No / Non Severe Thunderstorms</text>
<rect x="1079" y="847" width="15" height="8" fill="#ffff00"/>
<text x="1103" y="855.8" fill="#ffff00" font-size="13">Scattered / Moderate Thunderstorms</text>
<rect x="1079" y="867" width="15" height="8" fill="#ff0000"/>
<text x="1103" y="875.8" fill="#ff0000" font-size="13">Widespread / Severe Thunderstorms</text>
<rect x="729" y="827" width="15" height="8" fill="#ff0000"/>
<text x="753.5" y="835.8" fill="#ff0000" font-size="13">Temperature Profile</text>
<rect x="729" y="847" width="15" height="8" fill="#00ffff"/>
<text x="753.5" y="855.8" fill="#00ffff" font-size="13">Dewpoint Profile</text>
<rect x="729" y="867" width="15" height="8" fill="#00ff00"/>
<text x="753.5" y="875.8" fill="#00ff00" font-size="13">OBS Windspeed Profile</text>
<rect x="729" y="887" width="15" height="8" fill="#ff0080"/>
<text x="753.5" y="895.8" fill="#ff0080" font-size="13">SR Windspeed Profile</text>
<rect x="729" y="907" width="15" height="8" fill="#c0c000"/>
<text x="753.5" y="915.8" fill="#c0c000" font-size="13">Sfc-3km Storm Relative Helicity Profile</text>
<rect x="729" y="927" width="15" height="8" fill="#404000"/>
<text x="753.5" y="935.8" fill="#404000" font-size="13">Effective Layer (CAPE &gt;= 100 J/kg)</text>
</svg></body></html>
